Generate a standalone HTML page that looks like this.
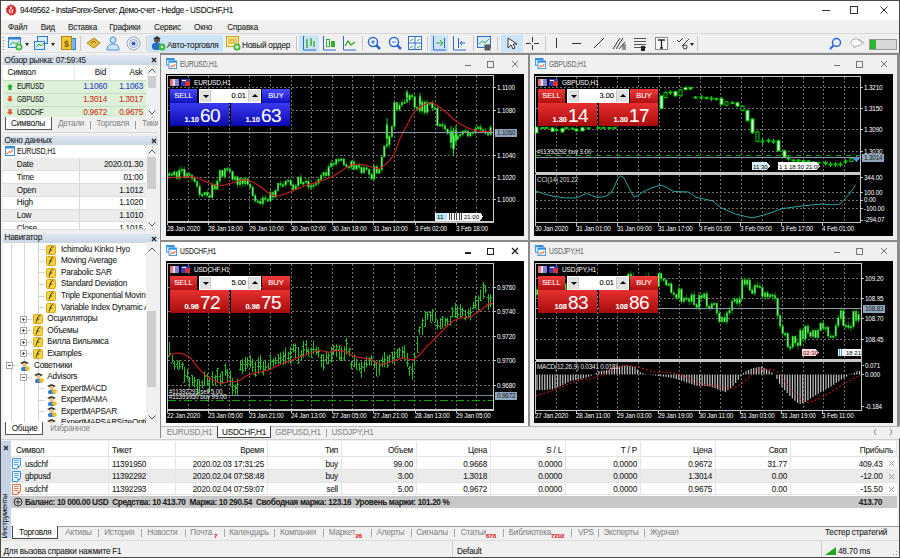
<!DOCTYPE html><html><head><meta charset="utf-8"><style>
*{margin:0;padding:0;box-sizing:border-box}
html,body{width:900px;height:558px;overflow:hidden;background:#f0f0f0;font-family:"Liberation Sans",sans-serif;font-size:11px;color:#000}
svg text{font-family:"Liberation Sans",sans-serif}
div{-webkit-text-stroke:0.08px currentColor}
</style></head><body><div style="position:absolute;left:0px;top:0px;width:900px;height:20px;background:#fff;"></div><div style="position:absolute;left:0px;top:0px;width:900px;height:1px;background:#4a4a4a;"></div><div style="position:absolute;left:0px;top:0px;width:1px;height:558px;background:#4a4a4a;"></div><div style="position:absolute;left:899px;top:0px;width:1px;height:558px;background:#4a4a4a;"></div><div style="position:absolute;left:0px;top:557px;width:900px;height:1px;background:#4a4a4a;"></div><svg style="position:absolute;left:5px;top:4px" width="12" height="12" viewBox="0 0 12 12"><path d="M6 0.3L7.3 1.6L9 1.2L9.4 2.9L11 3.6L10.5 5.3L11.7 6.6L10.5 7.8L10.8 9.5L9.1 9.9L8.3 11.4L6.6 10.8L5.1 11.7L4.2 10.2L2.5 10.1L2.4 8.4L0.9 7.5L1.6 5.9L0.8 4.4L2.3 3.5L2.5 1.8L4.2 1.8Z" fill="#e02020"/><circle cx="6" cy="3.8" r="1.2" fill="#fff"/><path d="M3.5 5.5H8.5L7.5 9.5H4.5Z" fill="#fff"/><rect x="5.4" y="5.5" width="1.2" height="4.5" fill="#e02020"/></svg><div style="position:absolute;left:20px;top:5.5px;white-space:nowrap;font-size:8.2px;line-height:10px;letter-spacing:-0.35px;color:#111;">9449562 - InstaForex-Server: Демо-счет - Hedge - USDCHF,H1</div><div style="position:absolute;left:822px;top:10px;width:8px;height:1px;background:#333;"></div><div style="position:absolute;left:850px;top:6px;width:8px;height:8px;border:1px solid #333;"></div><svg style="position:absolute;left:880px;top:6px" width="8" height="8"><path d="M0.5 0.5L7.5 7.5M7.5 0.5L0.5 7.5" stroke="#222" stroke-width="1"/></svg><div style="position:absolute;left:1px;top:20px;width:898px;height:13px;background:#f0f0f0;"></div><div style="position:absolute;left:8px;top:23px;white-space:nowrap;font-size:8.2px;line-height:10px;letter-spacing:-0.2px;color:#222;">Файл</div><div style="position:absolute;left:40.7px;top:23px;white-space:nowrap;font-size:8.2px;line-height:10px;letter-spacing:-0.2px;color:#222;">Вид</div><div style="position:absolute;left:68px;top:23px;white-space:nowrap;font-size:8.2px;line-height:10px;letter-spacing:-0.2px;color:#222;">Вставка</div><div style="position:absolute;left:109.3px;top:23px;white-space:nowrap;font-size:8.2px;line-height:10px;letter-spacing:-0.2px;color:#222;">Графики</div><div style="position:absolute;left:154px;top:23px;white-space:nowrap;font-size:8.2px;line-height:10px;letter-spacing:-0.2px;color:#222;">Сервис</div><div style="position:absolute;left:194px;top:23px;white-space:nowrap;font-size:8.2px;line-height:10px;letter-spacing:-0.2px;color:#222;">Окно</div><div style="position:absolute;left:227.3px;top:23px;white-space:nowrap;font-size:8.2px;line-height:10px;letter-spacing:-0.2px;color:#222;">Справка</div><div style="position:absolute;left:1px;top:33px;width:898px;height:1px;background:#d8d8d8;"></div><div style="position:absolute;left:1px;top:34px;width:898px;height:18px;background:#f0f0f0;"></div><div style="position:absolute;left:1px;top:52px;width:898px;height:1px;background:#e0e0e0;"></div><div style="position:absolute;left:3px;top:37px;width:1px;height:1px;background:#999;"></div><div style="position:absolute;left:3px;top:40px;width:1px;height:1px;background:#999;"></div><div style="position:absolute;left:3px;top:43px;width:1px;height:1px;background:#999;"></div><div style="position:absolute;left:3px;top:46px;width:1px;height:1px;background:#999;"></div><div style="position:absolute;left:3px;top:49px;width:1px;height:1px;background:#999;"></div><svg style="position:absolute;left:8px;top:36px" width="15" height="15" viewBox="0 0 15 15"><rect x="0.5" y="1.5" width="12" height="10" fill="#d8ecff" stroke="#2e80d0"/><rect x="0.5" y="1.5" width="12" height="2" fill="#2e80d0"/><path d="M2 9L5 6L8 8L11 5" stroke="#3a3" fill="none"/><circle cx="11" cy="11" r="3.5" fill="#3cb83c"/><path d="M9 11H13M11 9V13" stroke="#fff"/></svg><div style="position:absolute;left:25px;top:43px;width:0;height:0;border-left:2.5px solid transparent;border-right:2.5px solid transparent;border-top:3px solid #222"></div><svg style="position:absolute;left:34px;top:36px" width="15" height="15" viewBox="0 0 15 15"><rect x="3.5" y="0.5" width="10" height="7" fill="#d8ecff" stroke="#2e80d0"/><rect x="0.5" y="5.5" width="10" height="8" fill="#d8ecff" stroke="#2e80d0"/><path d="M2 11L5 8L7 10L10 7" stroke="#3a3" fill="none"/></svg><div style="position:absolute;left:51px;top:43px;width:0;height:0;border-left:2.5px solid transparent;border-right:2.5px solid transparent;border-top:3px solid #222"></div><svg style="position:absolute;left:61px;top:36px" width="15" height="15" viewBox="0 0 15 15"><rect x="5.5" y="2.5" width="9" height="11" fill="#7ab8f0" stroke="#2e80d0"/><rect x="0.5" y="0.5" width="10" height="13" fill="#f2c53a" stroke="#b08a10"/><text x="3" y="11" font-size="9" font-weight="bold" fill="#7a5a00">$</text></svg><div style="position:absolute;left:80px;top:36px;width:1px;height:15px;background:#c8c8c8;"></div><svg style="position:absolute;left:86px;top:36px" width="15" height="15" viewBox="0 0 15 15"><path d="M1 7L8 2L14 7L8 12Z" fill="#e8c040" stroke="#a88010"/><path d="M5 7L8 5L10 7" stroke="#7a5a00" fill="none"/></svg><svg style="position:absolute;left:106px;top:36px" width="15" height="15" viewBox="0 0 15 15"><circle cx="7" cy="4" r="3" fill="#cfe6ff" stroke="#4a90e0"/><path d="M1 14C1 9 4 8 7 8C10 8 13 9 13 14Z" fill="#cfe6ff" stroke="#4a90e0"/></svg><svg style="position:absolute;left:126px;top:36px" width="15" height="15" viewBox="0 0 15 15"><circle cx="7.5" cy="7.5" r="6.5" fill="none" stroke="#90a8d0"/><circle cx="7.5" cy="7.5" r="4" fill="none" stroke="#90a8d0"/><circle cx="7.5" cy="7.5" r="2" fill="#3060c0"/></svg><div style="position:absolute;left:146px;top:36px;width:1px;height:15px;background:#c8c8c8;"></div><div style="position:absolute;left:148px;top:35px;width:75px;height:17px;background:#cce4f7;"></div><svg style="position:absolute;left:151px;top:36px" width="15" height="15" viewBox="0 0 15 15"><circle cx="6" cy="4" r="3" fill="#555"/><path d="M2 3L6 0L10 3Z" fill="#333"/><rect x="1" y="7" width="9" height="7" rx="3" fill="#2a6ad0"/><circle cx="11" cy="11" r="3.5" fill="#3cb83c"/><path d="M10 9.5L12.5 11L10 12.5Z" fill="#fff"/></svg><div style="position:absolute;left:167px;top:40.5px;white-space:nowrap;font-size:8.2px;line-height:10px;letter-spacing:-0.2px;color:#222;">Авто-торговля</div><svg style="position:absolute;left:226px;top:36px" width="15" height="15" viewBox="0 0 15 15"><rect x="0.5" y="0.5" width="12" height="10" fill="#fff3a8" stroke="#c8a020"/><path d="M2 3H11M2 5H11M2 7H11" stroke="#c8a020"/><circle cx="11" cy="11" r="3.5" fill="#3cb83c"/><path d="M9 11H13M11 9V13" stroke="#fff"/></svg><div style="position:absolute;left:242px;top:40.5px;white-space:nowrap;font-size:8.2px;line-height:10px;letter-spacing:-0.2px;color:#222;">Новый ордер</div><div style="position:absolute;left:296px;top:36px;width:1px;height:15px;background:#c8c8c8;"></div><div style="position:absolute;left:299px;top:35px;width:20px;height:17px;background:#cce4f7;"></div><svg style="position:absolute;left:302px;top:36px" width="15" height="15" viewBox="0 0 15 15"><path d="M1.5 0V14H14" stroke="#2a6ad0" fill="none"/><path d="M5 3V12M4 5H5M5 9H6M9 2V10M8 4H9M9 7H10M12 5V11" stroke="#3a3" fill="none" stroke-width="1.3"/></svg><svg style="position:absolute;left:322px;top:36px" width="15" height="15" viewBox="0 0 15 15"><path d="M1.5 0V14H14" stroke="#2a6ad0" fill="none"/><rect x="4.5" y="3.5" width="3" height="7" fill="#fff" stroke="#3a3"/><rect x="9.5" y="5.5" width="3" height="5" fill="#3a3" stroke="#3a3"/></svg><svg style="position:absolute;left:342px;top:36px" width="15" height="15" viewBox="0 0 15 15"><path d="M1.5 0V14H14" stroke="#2a6ad0" fill="none"/><path d="M3 10L6 5L9 9L13 6" stroke="#3a3" fill="none" stroke-width="1.3"/></svg><div style="position:absolute;left:362px;top:36px;width:1px;height:15px;background:#c8c8c8;"></div><svg style="position:absolute;left:367px;top:36px" width="15" height="15" viewBox="0 0 15 15"><circle cx="6" cy="6" r="4.5" fill="#fff" stroke="#2a6ad0" stroke-width="1.5"/><path d="M9 9L13 13" stroke="#2a6ad0" stroke-width="2.5"/><path d="M4 6H8M6 4V8" stroke="#2a6ad0"/></svg><svg style="position:absolute;left:388px;top:36px" width="15" height="15" viewBox="0 0 15 15"><circle cx="6" cy="6" r="4.5" fill="#fff" stroke="#2a6ad0" stroke-width="1.5"/><path d="M9 9L13 13" stroke="#2a6ad0" stroke-width="2.5"/><path d="M4 6H8" stroke="#2a6ad0"/></svg><svg style="position:absolute;left:408px;top:36px" width="15" height="15" viewBox="0 0 15 15"><rect x="0.5" y="0.5" width="13" height="13" fill="#fff" stroke="#2a6ad0"/><path d="M7 0V14M0 7H14" stroke="#2a6ad0"/><path d="M2 5L5 3M9 5L12 3M2 12L5 10M9 12L12 10" stroke="#3a3"/></svg><div style="position:absolute;left:427px;top:36px;width:1px;height:15px;background:#c8c8c8;"></div><div style="position:absolute;left:430px;top:35px;width:18px;height:17px;background:#cce4f7;"></div><svg style="position:absolute;left:432px;top:36px" width="15" height="15" viewBox="0 0 15 15"><path d="M1.5 0V14H14M12.5 2V12" stroke="#2a6ad0" fill="none"/><path d="M4 7H11M8 4L11 7L8 10" stroke="#3a3" fill="none"/></svg><svg style="position:absolute;left:452px;top:36px" width="15" height="15" viewBox="0 0 15 15"><path d="M1.5 0V14H14" stroke="#2a6ad0" fill="none"/><path d="M6.5 2V12" stroke="#2a6ad0"/><path d="M8 7H13M10 5L8 7L10 9" stroke="#2a6ad0" fill="none"/></svg><div style="position:absolute;left:473px;top:36px;width:1px;height:15px;background:#c8c8c8;"></div><svg style="position:absolute;left:477px;top:36px" width="15" height="15" viewBox="0 0 15 15"><rect x="0.5" y="0.5" width="13" height="11" fill="#d8ecff" stroke="#2a6ad0"/><path d="M2 8L5 5L8 7L12 3" stroke="#3a3" fill="none"/><rect x="7.5" y="8.5" width="6" height="6" fill="#555"/></svg><div style="position:absolute;left:497px;top:36px;width:1px;height:15px;background:#c8c8c8;"></div><div style="position:absolute;left:501px;top:35px;width:22px;height:17px;background:#cce4f7;"></div><svg style="position:absolute;left:507px;top:37px" width="12" height="13" viewBox="0 0 12 13"><path d="M1 1L1 11L4 8L6 12L8 11L6 7L10 7Z" fill="#fff" stroke="#333"/></svg><svg style="position:absolute;left:526px;top:37px" width="13" height="13" viewBox="0 0 13 13"><path d="M6.5 0V5M6.5 8V13M0 6.5H5M8 6.5H13" stroke="#333"/></svg><div style="position:absolute;left:545px;top:36px;width:1px;height:15px;background:#c8c8c8;"></div><div style="position:absolute;left:556px;top:38px;width:1px;height:10px;background:#333;"></div><div style="position:absolute;left:572px;top:43px;width:9px;height:1px;background:#333;"></div><svg style="position:absolute;left:594px;top:38px" width="11" height="11" viewBox="0 0 11 11"><path d="M0 10L10 0" stroke="#333"/></svg><svg style="position:absolute;left:612px;top:36px" width="15" height="15" viewBox="0 0 15 15"><path d="M1 13L8 2M4 13L11 2M7 13L13 6" stroke="#333"/><path d="M10 9H14M10 11H14M10 13H14" stroke="#333"/></svg><svg style="position:absolute;left:634px;top:37px" width="14" height="14" viewBox="0 0 14 14"><path d="M0 1.5H12M0 4.5H12M0 7.5H12M0 10.5H12" stroke="#555"/><rect x="7" y="9" width="4" height="5" fill="#222"/></svg><svg style="position:absolute;left:655px;top:37px" width="13" height="13" viewBox="0 0 13 13"><rect x="0.5" y="0.5" width="12" height="12" fill="#fff" stroke="#888"/><path d="M3 3H10M6.5 3V11M5 11H8" stroke="#222" stroke-width="1.3"/></svg><svg style="position:absolute;left:676px;top:37px" width="14" height="13" viewBox="0 0 14 13"><path d="M1 3L3 5L7 1M6 9L13 2" stroke="#333" fill="none"/><circle cx="9" cy="10" r="2" fill="none" stroke="#333"/></svg><div style="position:absolute;left:690px;top:43px;width:0;height:0;border-left:2.5px solid transparent;border-right:2.5px solid transparent;border-top:3px solid #222"></div><div style="position:absolute;left:697px;top:36px;width:1px;height:15px;background:#c8c8c8;"></div><svg style="position:absolute;left:829px;top:37px" width="13" height="13" viewBox="0 0 13 13"><circle cx="7.5" cy="5.5" r="4" fill="none" stroke="#2a6ad0" stroke-width="1.5"/><path d="M5 8L1 12" stroke="#2a6ad0" stroke-width="2"/></svg><svg style="position:absolute;left:850px;top:37px" width="15" height="13" viewBox="0 0 15 13"><path d="M5 2C9 2 12 3 12 6C12 8 9 9 6 9L4 11V9C2 8 1 7 1 6C1 4 2 2 5 2Z" fill="#fff" stroke="#aaa"/><path d="M8 4C12 4 14 5 14 7" fill="none" stroke="#aaa"/></svg><div style="position:absolute;left:869px;top:39px;width:28px;height:11px;background:#d8d8d8;border:1px solid #9a9a9a;"></div><div style="position:absolute;left:870px;top:40px;width:6px;height:9px;background:#2ab82a;"></div><div style="position:absolute;left:1px;top:53px;width:159px;height:386px;background:#f0f0f0;"></div><div style="position:absolute;left:3px;top:55px;width:155px;height:10px;background:linear-gradient(#dfe8f1,#c8d6e4);"></div><div style="position:absolute;left:4.5px;top:55.5px;white-space:nowrap;font-size:8.2px;line-height:10px;letter-spacing:-0.2px;color:#222;">Обзор рынка: 07:59:45</div><svg style="position:absolute;left:151px;top:57px" width="6" height="6"><path d="M1 1L5 5M5 1L1 5" stroke="#222" stroke-width="1.1"/></svg><div style="position:absolute;left:3px;top:65px;width:155px;height:52px;background:#fff;"></div><div style="position:absolute;left:7.5px;top:68.4px;white-space:nowrap;font-size:8.2px;line-height:10px;letter-spacing:-0.2px;color:#222;">Символ</div><div style="position:absolute;left:-194px;width:300px;top:68.4px;white-space:nowrap;text-align:right;font-size:8.2px;line-height:10px;letter-spacing:-0.2px;color:#222;">Bid</div><div style="position:absolute;left:-157.5px;width:300px;top:68.4px;white-space:nowrap;text-align:right;font-size:8.2px;line-height:10px;letter-spacing:-0.2px;color:#222;">Ask</div><div style="position:absolute;left:74px;top:65px;width:1px;height:52px;background:#ececec;"></div><div style="position:absolute;left:109px;top:65px;width:1px;height:52px;background:#ececec;"></div><div style="position:absolute;left:3px;top:80.0px;width:143px;height:12.85px;background:#dcf1d8;border-top:1px solid #c8dcc4;"></div><svg style="position:absolute;left:7px;top:83.5px" width="6" height="6"><path d="M3 0L6 3H4.5V6H1.5V3H0Z" fill="#18a818"/></svg><div style="position:absolute;left:17.2px;top:81.9px;white-space:nowrap;font-size:8.2px;line-height:10px;letter-spacing:-0.2px;color:#222;transform:scaleX(0.8);transform-origin:left top;">EURUSD</div><div style="position:absolute;left:-193px;width:300px;top:81.9px;white-space:nowrap;text-align:right;font-size:8.2px;line-height:10px;letter-spacing:-0.2px;color:#2a3ad0;">1.1060</div><div style="position:absolute;left:-157px;width:300px;top:81.9px;white-space:nowrap;text-align:right;font-size:8.2px;line-height:10px;letter-spacing:-0.2px;color:#2a3ad0;">1.1063</div><div style="position:absolute;left:3px;top:92.85px;width:143px;height:12.85px;background:#dcf1d8;border-top:1px solid #c8dcc4;"></div><svg style="position:absolute;left:7px;top:96.35px" width="6" height="6"><path d="M3 6L6 3H4.5V0H1.5V3H0Z" fill="#e05a30"/></svg><div style="position:absolute;left:17.2px;top:94.75px;white-space:nowrap;font-size:8.2px;line-height:10px;letter-spacing:-0.2px;color:#222;transform:scaleX(0.8);transform-origin:left top;">GBPUSD</div><div style="position:absolute;left:-193px;width:300px;top:94.75px;white-space:nowrap;text-align:right;font-size:8.2px;line-height:10px;letter-spacing:-0.2px;color:#d03020;">1.3014</div><div style="position:absolute;left:-157px;width:300px;top:94.75px;white-space:nowrap;text-align:right;font-size:8.2px;line-height:10px;letter-spacing:-0.2px;color:#d03020;">1.3017</div><div style="position:absolute;left:3px;top:105.7px;width:143px;height:12.85px;background:#dcf1d8;border-top:1px solid #c8dcc4;"></div><svg style="position:absolute;left:7px;top:109.2px" width="6" height="6"><path d="M3 6L6 3H4.5V0H1.5V3H0Z" fill="#e05a30"/></svg><div style="position:absolute;left:17.2px;top:107.60000000000001px;white-space:nowrap;font-size:8.2px;line-height:10px;letter-spacing:-0.2px;color:#222;transform:scaleX(0.8);transform-origin:left top;">USDCHF</div><div style="position:absolute;left:-193px;width:300px;top:107.60000000000001px;white-space:nowrap;text-align:right;font-size:8.2px;line-height:10px;letter-spacing:-0.2px;color:#d03020;">0.9672</div><div style="position:absolute;left:-157px;width:300px;top:107.60000000000001px;white-space:nowrap;text-align:right;font-size:8.2px;line-height:10px;letter-spacing:-0.2px;color:#d03020;">0.9675</div><div style="position:absolute;left:146px;top:65px;width:12px;height:52px;background:#f0f0f0;"></div><svg style="position:absolute;left:148px;top:68px" width="8" height="5"><path d="M0.5 4.5L4 1L7.5 4.5" fill="none" stroke="#555"/></svg><div style="position:absolute;left:148px;top:76px;width:8px;height:12px;background:#cdcdcd;"></div><svg style="position:absolute;left:148px;top:110px" width="8" height="5"><path d="M0.5 0.5L4 4L7.5 0.5" fill="none" stroke="#555"/></svg><div style="position:absolute;left:3px;top:117px;width:155px;height:14px;background:#f0f0f0;"></div><div style="position:absolute;left:5px;top:116.5px;width:47px;height:13.5px;background:#fff;border:1px solid #555;border-top:none;"></div><div style="position:absolute;left:11px;top:118.9px;white-space:nowrap;font-size:8.2px;line-height:10px;letter-spacing:-0.2px;color:#222;">Символы</div><div style="position:absolute;left:58px;top:118.9px;white-space:nowrap;font-size:8.2px;line-height:10px;letter-spacing:-0.2px;color:#8a8a8a;">Детали</div><div style="position:absolute;left:90px;top:121px;width:1px;height:8px;background:#9a9a9a;"></div><div style="position:absolute;left:96.6px;top:118.9px;white-space:nowrap;font-size:8.2px;line-height:10px;letter-spacing:-0.2px;color:#8a8a8a;">Торговля</div><div style="position:absolute;left:135px;top:121px;width:1px;height:8px;background:#9a9a9a;"></div><div style="position:absolute;left:142px;top:118.9px;white-space:nowrap;font-size:8.2px;line-height:10px;letter-spacing:-0.2px;color:#8a8a8a;width:16px;overflow:hidden;">Тики</div><div style="position:absolute;left:3px;top:132px;width:155px;height:1px;background:#d8d8d8;"></div><div style="position:absolute;left:3px;top:136px;width:155px;height:9px;background:linear-gradient(#dfe8f1,#c8d6e4);"></div><div style="position:absolute;left:4.5px;top:135.5px;white-space:nowrap;font-size:8.2px;line-height:10px;letter-spacing:-0.2px;color:#222;">Окно данных</div><svg style="position:absolute;left:151px;top:138px" width="6" height="6"><path d="M1 1L5 5M5 1L1 5" stroke="#222" stroke-width="1.1"/></svg><div style="position:absolute;left:3px;top:145px;width:155px;height:85px;background:#fff;"></div><svg style="position:absolute;left:5px;top:146px" width="10" height="10"><rect x="0.5" y="0.5" width="9" height="9" fill="#fff" stroke="#3a8ee0"/><rect x="0.5" y="0.5" width="9" height="2" fill="#3a8ee0"/><path d="M2 8L4 5.5L6 6.5L8 3.5" stroke="#e05030" fill="none"/></svg><div style="position:absolute;left:16.9px;top:147.3px;white-space:nowrap;font-size:8.2px;line-height:10px;letter-spacing:-0.2px;color:#222;transform:scaleX(0.85);transform-origin:left top;">EURUSD,H1</div><div style="position:absolute;left:3px;top:158.0px;width:143px;height:12.9px;background:#ececec;overflow:hidden;border-bottom:1px solid #dcdcdc;"><div style="position:absolute;left:13.8px;top:1.8px;white-space:nowrap;font-size:8.2px;line-height:10px;letter-spacing:-0.2px;color:#222;">Date</div><div style="position:absolute;right:3px;top:1.8px;white-space:nowrap;font-size:8.2px;line-height:10px;letter-spacing:-0.2px;color:#222;">2020.01.30</div></div><div style="position:absolute;left:3px;top:170.9px;width:143px;height:12.9px;background:#fff;overflow:hidden;border-bottom:1px solid #dcdcdc;"><div style="position:absolute;left:13.8px;top:1.8px;white-space:nowrap;font-size:8.2px;line-height:10px;letter-spacing:-0.2px;color:#222;">Time</div><div style="position:absolute;right:3px;top:1.8px;white-space:nowrap;font-size:8.2px;line-height:10px;letter-spacing:-0.2px;color:#222;">01:00</div></div><div style="position:absolute;left:3px;top:183.8px;width:143px;height:12.9px;background:#ececec;overflow:hidden;border-bottom:1px solid #dcdcdc;"><div style="position:absolute;left:13.8px;top:1.8px;white-space:nowrap;font-size:8.2px;line-height:10px;letter-spacing:-0.2px;color:#222;">Open</div><div style="position:absolute;right:3px;top:1.8px;white-space:nowrap;font-size:8.2px;line-height:10px;letter-spacing:-0.2px;color:#222;">1.1012</div></div><div style="position:absolute;left:3px;top:196.7px;width:143px;height:12.9px;background:#fff;overflow:hidden;border-bottom:1px solid #dcdcdc;"><div style="position:absolute;left:13.8px;top:1.8px;white-space:nowrap;font-size:8.2px;line-height:10px;letter-spacing:-0.2px;color:#222;">High</div><div style="position:absolute;right:3px;top:1.8px;white-space:nowrap;font-size:8.2px;line-height:10px;letter-spacing:-0.2px;color:#222;">1.1020</div></div><div style="position:absolute;left:3px;top:209.6px;width:143px;height:12.9px;background:#ececec;overflow:hidden;border-bottom:1px solid #dcdcdc;"><div style="position:absolute;left:13.8px;top:1.8px;white-space:nowrap;font-size:8.2px;line-height:10px;letter-spacing:-0.2px;color:#222;">Low</div><div style="position:absolute;right:3px;top:1.8px;white-space:nowrap;font-size:8.2px;line-height:10px;letter-spacing:-0.2px;color:#222;">1.1010</div></div><div style="position:absolute;left:3px;top:222.5px;width:143px;height:7.0px;background:#fff;overflow:hidden;border-bottom:1px solid #dcdcdc;"><div style="position:absolute;left:13.8px;top:1.8px;white-space:nowrap;font-size:8.2px;line-height:10px;letter-spacing:-0.2px;color:#222;">Close</div><div style="position:absolute;right:3px;top:1.8px;white-space:nowrap;font-size:8.2px;line-height:10px;letter-spacing:-0.2px;color:#222;">1.1015</div></div><div style="position:absolute;left:79px;top:158px;width:1px;height:71.5px;background:#d8d8d8;"></div><div style="position:absolute;left:146px;top:145px;width:12px;height:85px;background:#f0f0f0;"></div><svg style="position:absolute;left:148px;top:149px" width="8" height="5"><path d="M0.5 4.5L4 1L7.5 4.5" fill="none" stroke="#555"/></svg><div style="position:absolute;left:147px;top:157px;width:9px;height:32px;background:#cdcdcd;"></div><svg style="position:absolute;left:148px;top:222px" width="8" height="5"><path d="M0.5 0.5L4 4L7.5 0.5" fill="none" stroke="#555"/></svg><div style="position:absolute;left:3px;top:229.5px;width:155px;height:4.5px;background:#f0f0f0;"></div><div style="position:absolute;left:3px;top:234px;width:155px;height:8.5px;background:linear-gradient(#dfe8f1,#c8d6e4);"></div><div style="position:absolute;left:4.5px;top:232.9px;white-space:nowrap;font-size:8.2px;line-height:10px;letter-spacing:-0.2px;color:#222;">Навигатор</div><svg style="position:absolute;left:151px;top:236px" width="6" height="6"><path d="M1 1L5 5M5 1L1 5" stroke="#222" stroke-width="1.1"/></svg><div style="position:absolute;left:3px;top:242.5px;width:155px;height:179.5px;background:#fff;"></div><div style="position:absolute;left:11px;top:242px;width:1px;height:181px;background:#d4d4d4;"></div><div style="position:absolute;left:24px;top:242px;width:1px;height:181px;background:#d4d4d4;"></div><div style="position:absolute;left:38px;top:242px;width:1px;height:181px;background:#d4d4d4;"></div><div style="position:absolute;left:39px;top:249px;width:6px;height:1px;background:#d4d4d4;"></div><svg style="position:absolute;left:46px;top:244.7px" width="10" height="10"><rect x="0.5" y="0.5" width="9" height="9" rx="1" fill="#f9d43a" stroke="#d8a818"/><path d="M3 8.5L5 3C5.5 1.5 6.5 1.5 7.5 2" fill="none" stroke="#333" stroke-width="1"/><path d="M3.5 5H6.5" stroke="#333" stroke-width="0.8"/></svg><div style="position:absolute;left:61px;top:244.7px;white-space:nowrap;font-size:8.2px;line-height:10px;letter-spacing:-0.2px;color:#222;width:85px;overflow:hidden;">Ichimoku Kinko Hyo</div><div style="position:absolute;left:39px;top:261px;width:6px;height:1px;background:#d4d4d4;"></div><svg style="position:absolute;left:46px;top:256.28px" width="10" height="10"><rect x="0.5" y="0.5" width="9" height="9" rx="1" fill="#f9d43a" stroke="#d8a818"/><path d="M3 8.5L5 3C5.5 1.5 6.5 1.5 7.5 2" fill="none" stroke="#333" stroke-width="1"/><path d="M3.5 5H6.5" stroke="#333" stroke-width="0.8"/></svg><div style="position:absolute;left:61px;top:256.28px;white-space:nowrap;font-size:8.2px;line-height:10px;letter-spacing:-0.2px;color:#222;width:85px;overflow:hidden;">Moving Average</div><div style="position:absolute;left:39px;top:272px;width:6px;height:1px;background:#d4d4d4;"></div><svg style="position:absolute;left:46px;top:267.86px" width="10" height="10"><rect x="0.5" y="0.5" width="9" height="9" rx="1" fill="#f9d43a" stroke="#d8a818"/><path d="M3 8.5L5 3C5.5 1.5 6.5 1.5 7.5 2" fill="none" stroke="#333" stroke-width="1"/><path d="M3.5 5H6.5" stroke="#333" stroke-width="0.8"/></svg><div style="position:absolute;left:61px;top:267.86px;white-space:nowrap;font-size:8.2px;line-height:10px;letter-spacing:-0.2px;color:#222;width:85px;overflow:hidden;">Parabolic SAR</div><div style="position:absolute;left:39px;top:284px;width:6px;height:1px;background:#d4d4d4;"></div><svg style="position:absolute;left:46px;top:279.44px" width="10" height="10"><rect x="0.5" y="0.5" width="9" height="9" rx="1" fill="#f9d43a" stroke="#d8a818"/><path d="M3 8.5L5 3C5.5 1.5 6.5 1.5 7.5 2" fill="none" stroke="#333" stroke-width="1"/><path d="M3.5 5H6.5" stroke="#333" stroke-width="0.8"/></svg><div style="position:absolute;left:61px;top:279.44px;white-space:nowrap;font-size:8.2px;line-height:10px;letter-spacing:-0.2px;color:#222;width:85px;overflow:hidden;">Standard Deviation</div><div style="position:absolute;left:39px;top:296px;width:6px;height:1px;background:#d4d4d4;"></div><svg style="position:absolute;left:46px;top:291.02px" width="10" height="10"><rect x="0.5" y="0.5" width="9" height="9" rx="1" fill="#f9d43a" stroke="#d8a818"/><path d="M3 8.5L5 3C5.5 1.5 6.5 1.5 7.5 2" fill="none" stroke="#333" stroke-width="1"/><path d="M3.5 5H6.5" stroke="#333" stroke-width="0.8"/></svg><div style="position:absolute;left:61px;top:291.02px;white-space:nowrap;font-size:8.2px;line-height:10px;letter-spacing:-0.2px;color:#222;width:85px;overflow:hidden;">Triple Exponential Movin</div><div style="position:absolute;left:39px;top:307px;width:6px;height:1px;background:#d4d4d4;"></div><svg style="position:absolute;left:46px;top:302.59999999999997px" width="10" height="10"><rect x="0.5" y="0.5" width="9" height="9" rx="1" fill="#f9d43a" stroke="#d8a818"/><path d="M3 8.5L5 3C5.5 1.5 6.5 1.5 7.5 2" fill="none" stroke="#333" stroke-width="1"/><path d="M3.5 5H6.5" stroke="#333" stroke-width="0.8"/></svg><div style="position:absolute;left:61px;top:302.59999999999997px;white-space:nowrap;font-size:8.2px;line-height:10px;letter-spacing:-0.2px;color:#222;width:85px;overflow:hidden;">Variable Index Dynamic A</div><div style="position:absolute;left:26px;top:319px;width:6px;height:1px;background:#d4d4d4;"></div><div style="position:absolute;left:20px;top:315.68px;width:7px;height:7px;background:#fff;border:1px solid #a8a8a8;"><div style="position:absolute;left:1px;top:2px;width:3px;height:1px;background:#555"></div><div style="position:absolute;left:2px;top:1px;width:1px;height:3px;background:#555"></div></div><svg style="position:absolute;left:33px;top:314.18px" width="10" height="10"><rect x="0.5" y="0.5" width="9" height="9" rx="1" fill="#f9d43a" stroke="#d8a818"/><path d="M3 8.5L5 3C5.5 1.5 6.5 1.5 7.5 2" fill="none" stroke="#333" stroke-width="1"/><path d="M3.5 5H6.5" stroke="#333" stroke-width="0.8"/></svg><div style="position:absolute;left:47.3px;top:314.18px;white-space:nowrap;font-size:8.2px;line-height:10px;letter-spacing:-0.2px;color:#222;width:98px;overflow:hidden;">Осцилляторы</div><div style="position:absolute;left:26px;top:330px;width:6px;height:1px;background:#d4d4d4;"></div><div style="position:absolute;left:20px;top:327.26px;width:7px;height:7px;background:#fff;border:1px solid #a8a8a8;"><div style="position:absolute;left:1px;top:2px;width:3px;height:1px;background:#555"></div><div style="position:absolute;left:2px;top:1px;width:1px;height:3px;background:#555"></div></div><svg style="position:absolute;left:33px;top:325.76px" width="10" height="10"><rect x="0.5" y="0.5" width="9" height="9" rx="1" fill="#f9d43a" stroke="#d8a818"/><path d="M3 8.5L5 3C5.5 1.5 6.5 1.5 7.5 2" fill="none" stroke="#333" stroke-width="1"/><path d="M3.5 5H6.5" stroke="#333" stroke-width="0.8"/></svg><div style="position:absolute;left:47.3px;top:325.76px;white-space:nowrap;font-size:8.2px;line-height:10px;letter-spacing:-0.2px;color:#222;width:98px;overflow:hidden;">Объемы</div><div style="position:absolute;left:26px;top:342px;width:6px;height:1px;background:#d4d4d4;"></div><div style="position:absolute;left:20px;top:338.84px;width:7px;height:7px;background:#fff;border:1px solid #a8a8a8;"><div style="position:absolute;left:1px;top:2px;width:3px;height:1px;background:#555"></div><div style="position:absolute;left:2px;top:1px;width:1px;height:3px;background:#555"></div></div><svg style="position:absolute;left:33px;top:337.34px" width="10" height="10"><rect x="0.5" y="0.5" width="9" height="9" rx="1" fill="#f9d43a" stroke="#d8a818"/><path d="M3 8.5L5 3C5.5 1.5 6.5 1.5 7.5 2" fill="none" stroke="#333" stroke-width="1"/><path d="M3.5 5H6.5" stroke="#333" stroke-width="0.8"/></svg><div style="position:absolute;left:47.3px;top:337.34px;white-space:nowrap;font-size:8.2px;line-height:10px;letter-spacing:-0.2px;color:#222;width:98px;overflow:hidden;">Билла Вильямса</div><div style="position:absolute;left:26px;top:353px;width:6px;height:1px;background:#d4d4d4;"></div><div style="position:absolute;left:20px;top:350.41999999999996px;width:7px;height:7px;background:#fff;border:1px solid #a8a8a8;"><div style="position:absolute;left:1px;top:2px;width:3px;height:1px;background:#555"></div><div style="position:absolute;left:2px;top:1px;width:1px;height:3px;background:#555"></div></div><svg style="position:absolute;left:33px;top:348.91999999999996px" width="10" height="10"><rect x="0.5" y="0.5" width="9" height="9" rx="1" fill="#f9d43a" stroke="#d8a818"/><path d="M3 8.5L5 3C5.5 1.5 6.5 1.5 7.5 2" fill="none" stroke="#333" stroke-width="1"/><path d="M3.5 5H6.5" stroke="#333" stroke-width="0.8"/></svg><div style="position:absolute;left:47.3px;top:348.91999999999996px;white-space:nowrap;font-size:8.2px;line-height:10px;letter-spacing:-0.2px;color:#222;width:98px;overflow:hidden;">Examples</div><div style="position:absolute;left:12px;top:365px;width:6px;height:1px;background:#d4d4d4;"></div><div style="position:absolute;left:6px;top:362.0px;width:7px;height:7px;background:#fff;border:1px solid #a8a8a8;"><div style="position:absolute;left:1px;top:2px;width:3px;height:1px;background:#555"></div></div><svg style="position:absolute;left:19px;top:360.0px" width="11" height="11"><path d="M1 3L5.5 1L10 3L5.5 5Z" fill="#333"/><circle cx="5.5" cy="5" r="2.2" fill="#e8c080"/><rect x="2" y="7" width="7" height="4" rx="1.5" fill="#3a7fd0"/><circle cx="8.5" cy="8.5" r="2.3" fill="#f0c020"/></svg><div style="position:absolute;left:34px;top:360.5px;white-space:nowrap;font-size:8.2px;line-height:10px;letter-spacing:-0.2px;color:#222;width:112px;overflow:hidden;">Советники</div><div style="position:absolute;left:26px;top:377px;width:6px;height:1px;background:#d4d4d4;"></div><div style="position:absolute;left:20px;top:373.58px;width:7px;height:7px;background:#fff;border:1px solid #a8a8a8;"><div style="position:absolute;left:1px;top:2px;width:3px;height:1px;background:#555"></div></div><svg style="position:absolute;left:33px;top:371.58px" width="11" height="11"><path d="M1 3L5.5 1L10 3L5.5 5Z" fill="#333"/><circle cx="5.5" cy="5" r="2.2" fill="#e8c080"/><rect x="2" y="7" width="7" height="4" rx="1.5" fill="#3a7fd0"/><circle cx="8.5" cy="8.5" r="2.3" fill="#f0c020"/></svg><div style="position:absolute;left:47.3px;top:372.08px;white-space:nowrap;font-size:8.2px;line-height:10px;letter-spacing:-0.2px;color:#222;width:98px;overflow:hidden;">Advisors</div><div style="position:absolute;left:39px;top:388px;width:6px;height:1px;background:#d4d4d4;"></div><svg style="position:absolute;left:46px;top:383.15999999999997px" width="11" height="11"><path d="M1 3L5.5 1L10 3L5.5 5Z" fill="#333"/><circle cx="5.5" cy="5" r="2.2" fill="#e8c080"/><rect x="2" y="7" width="7" height="4" rx="1.5" fill="#3a7fd0"/><circle cx="8.5" cy="8.5" r="2.3" fill="#f0c020"/></svg><div style="position:absolute;left:61px;top:383.65999999999997px;white-space:nowrap;font-size:8.2px;line-height:10px;letter-spacing:-0.2px;color:#222;width:85px;overflow:hidden;">ExpertMACD</div><div style="position:absolute;left:39px;top:400px;width:6px;height:1px;background:#d4d4d4;"></div><svg style="position:absolute;left:46px;top:394.74px" width="11" height="11"><path d="M1 3L5.5 1L10 3L5.5 5Z" fill="#333"/><circle cx="5.5" cy="5" r="2.2" fill="#e8c080"/><rect x="2" y="7" width="7" height="4" rx="1.5" fill="#3a7fd0"/><circle cx="8.5" cy="8.5" r="2.3" fill="#f0c020"/></svg><div style="position:absolute;left:61px;top:395.24px;white-space:nowrap;font-size:8.2px;line-height:10px;letter-spacing:-0.2px;color:#222;width:85px;overflow:hidden;">ExpertMAMA</div><div style="position:absolute;left:39px;top:411px;width:6px;height:1px;background:#d4d4d4;"></div><svg style="position:absolute;left:46px;top:406.32px" width="11" height="11"><path d="M1 3L5.5 1L10 3L5.5 5Z" fill="#333"/><circle cx="5.5" cy="5" r="2.2" fill="#e8c080"/><rect x="2" y="7" width="7" height="4" rx="1.5" fill="#3a7fd0"/><circle cx="8.5" cy="8.5" r="2.3" fill="#f0c020"/></svg><div style="position:absolute;left:61px;top:406.82px;white-space:nowrap;font-size:8.2px;line-height:10px;letter-spacing:-0.2px;color:#222;width:85px;overflow:hidden;">ExpertMAPSAR</div><div style="position:absolute;left:39px;top:423px;width:6px;height:1px;background:#d4d4d4;"></div><svg style="position:absolute;left:46px;top:417.9px" width="11" height="11"><path d="M1 3L5.5 1L10 3L5.5 5Z" fill="#333"/><circle cx="5.5" cy="5" r="2.2" fill="#e8c080"/><rect x="2" y="7" width="7" height="4" rx="1.5" fill="#3a7fd0"/><circle cx="8.5" cy="8.5" r="2.3" fill="#f0c020"/></svg><div style="position:absolute;left:61px;top:418.4px;white-space:nowrap;font-size:8.2px;line-height:10px;letter-spacing:-0.2px;color:#222;width:85px;overflow:hidden;">ExpertMAPSARSizeOptim</div><div style="position:absolute;left:146px;top:242px;width:12px;height:181px;background:#f0f0f0;"></div><svg style="position:absolute;left:148px;top:247px" width="8" height="5"><path d="M0.5 4.5L4 1L7.5 4.5" fill="none" stroke="#555"/></svg><div style="position:absolute;left:147px;top:311px;width:9px;height:76px;background:#cdcdcd;"></div><svg style="position:absolute;left:148px;top:415px" width="8" height="5"><path d="M0.5 0.5L4 4L7.5 0.5" fill="none" stroke="#555"/></svg><div style="position:absolute;left:3px;top:423px;width:155px;height:15px;background:#f0f0f0;"></div><div style="position:absolute;left:5px;top:421.5px;width:38px;height:13px;background:#fff;border:1px solid #555;border-top:none;"></div><div style="position:absolute;left:11.7px;top:424.4px;white-space:nowrap;font-size:8.2px;line-height:10px;letter-spacing:-0.2px;color:#222;">Общие</div><div style="position:absolute;left:50.2px;top:424.4px;white-space:nowrap;font-size:8.2px;line-height:10px;letter-spacing:-0.2px;color:#8a8a8a;">Избранное</div><div style="position:absolute;left:160px;top:53px;width:740px;height:386px;background:#8a8a8a;"></div><div style="position:absolute;left:161px;top:55px;width:367px;height:185px;background:#f0f0f0;"></div><svg style="position:absolute;left:166px;top:58px" width="11" height="11" viewBox="0 0 13 13"><rect x="0.5" y="0.5" width="9" height="8" fill="#dceeff" stroke="#2d8fe0"/><rect x="0.5" y="0.5" width="9" height="2" fill="#2d8fe0"/><rect x="3.5" y="3.5" width="9" height="9" fill="#fff" stroke="#2d8fe0"/><rect x="3.5" y="3.5" width="9" height="2" fill="#2d8fe0"/><path d="M5 11L7 9L9 10L11 7" stroke="#f06020" fill="none" stroke-width="1.2"/></svg><div style="position:absolute;left:179.5px;top:58.9px;font-size:8.4px;line-height:10px;letter-spacing:-0.2px;color:#6d6d6d;white-space:nowrap;transform:scaleX(0.8);transform-origin:left top;">EURUSD,H1</div><div style="position:absolute;left:465px;top:65px;width:6px;height:1px;background:#777;"></div><div style="position:absolute;left:487px;top:61px;width:7px;height:7px;border:1px solid #777;"></div><svg style="position:absolute;left:511px;top:60px" width="8" height="8"><path d="M1 1L7 7M7 1L1 7" stroke="#777" stroke-width="1"/></svg><div style="position:absolute;left:166px;top:74px;width:358px;height:162px;background:#000;"></div><svg style="position:absolute;left:166px;top:74px" width="358" height="162" viewBox="166 74 358 162" shape-rendering="crispEdges"><line x1="188.5" y1="75.5" x2="188.5" y2="222" stroke="#707070" stroke-dasharray="2,2"/><line x1="208.5" y1="75.5" x2="208.5" y2="222" stroke="#707070" stroke-dasharray="2,2"/><line x1="229.5" y1="75.5" x2="229.5" y2="222" stroke="#707070" stroke-dasharray="2,2"/><line x1="249.5" y1="75.5" x2="249.5" y2="222" stroke="#707070" stroke-dasharray="2,2"/><line x1="270.5" y1="75.5" x2="270.5" y2="222" stroke="#707070" stroke-dasharray="2,2"/><line x1="291.5" y1="75.5" x2="291.5" y2="222" stroke="#707070" stroke-dasharray="2,2"/><line x1="311.5" y1="75.5" x2="311.5" y2="222" stroke="#707070" stroke-dasharray="2,2"/><line x1="332.5" y1="75.5" x2="332.5" y2="222" stroke="#707070" stroke-dasharray="2,2"/><line x1="352.5" y1="75.5" x2="352.5" y2="222" stroke="#707070" stroke-dasharray="2,2"/><line x1="373.5" y1="75.5" x2="373.5" y2="222" stroke="#707070" stroke-dasharray="2,2"/><line x1="394.5" y1="75.5" x2="394.5" y2="222" stroke="#707070" stroke-dasharray="2,2"/><line x1="414.5" y1="75.5" x2="414.5" y2="222" stroke="#707070" stroke-dasharray="2,2"/><line x1="435.5" y1="75.5" x2="435.5" y2="222" stroke="#707070" stroke-dasharray="2,2"/><line x1="456.5" y1="75.5" x2="456.5" y2="222" stroke="#707070" stroke-dasharray="2,2"/><line x1="476.5" y1="75.5" x2="476.5" y2="222" stroke="#707070" stroke-dasharray="2,2"/><line x1="167.5" y1="87.5" x2="493.5" y2="87.5" stroke="#707070" stroke-dasharray="2,2"/><line x1="167.5" y1="110.5" x2="493.5" y2="110.5" stroke="#707070" stroke-dasharray="2,2"/><line x1="167.5" y1="132.5" x2="493.5" y2="132.5" stroke="#707070" stroke-dasharray="2,2"/><line x1="167.5" y1="155.5" x2="493.5" y2="155.5" stroke="#707070" stroke-dasharray="2,2"/><line x1="167.5" y1="177.5" x2="493.5" y2="177.5" stroke="#707070" stroke-dasharray="2,2"/><line x1="167.5" y1="199.5" x2="493.5" y2="199.5" stroke="#707070" stroke-dasharray="2,2"/><g shape-rendering="auto"><line x1="169.25" y1="171.6" x2="169.25" y2="178.5" stroke="#00b800" stroke-width="0.7"/><rect x="168.55" y="173.8" width="1.4" height="1.5" fill="#a8ffa8" stroke="#18c818" stroke-width="0.7"/><line x1="171.78" y1="171.8" x2="171.78" y2="177.5" stroke="#00b800" stroke-width="0.7"/><rect x="171.08" y="173.8" width="1.4" height="1.5" fill="#a8ffa8" stroke="#18c818" stroke-width="0.7"/><line x1="174.31" y1="169.9" x2="174.31" y2="177.1" stroke="#00b800" stroke-width="0.7"/><rect x="173.61" y="172.0" width="1.4" height="2.8" fill="#a8ffa8" stroke="#18c818" stroke-width="0.7"/><line x1="176.84" y1="171.2" x2="176.84" y2="179.6" stroke="#00b800" stroke-width="0.7"/><rect x="176.14" y="172.0" width="1.4" height="6.3" fill="#a8ffa8" stroke="#18c818" stroke-width="0.7"/><line x1="179.37" y1="167.2" x2="179.37" y2="180.8" stroke="#00b800" stroke-width="0.7"/><rect x="178.67" y="170.1" width="1.4" height="8.1" fill="#a8ffa8" stroke="#18c818" stroke-width="0.7"/><line x1="181.90" y1="165.9" x2="181.90" y2="174.3" stroke="#00b800" stroke-width="0.7"/><rect x="181.20" y="169.4" width="1.4" height="1.5" fill="#a8ffa8" stroke="#18c818" stroke-width="0.7"/><line x1="184.43" y1="167.0" x2="184.43" y2="178.6" stroke="#00b800" stroke-width="0.7"/><rect x="183.73" y="169.4" width="1.4" height="8.2" fill="#a8ffa8" stroke="#18c818" stroke-width="0.7"/><line x1="186.96" y1="171.6" x2="186.96" y2="178.3" stroke="#00b800" stroke-width="0.7"/><rect x="186.26" y="173.7" width="1.4" height="3.9" fill="#a8ffa8" stroke="#18c818" stroke-width="0.7"/><line x1="189.49" y1="172.4" x2="189.49" y2="176.2" stroke="#00b800" stroke-width="0.7"/><rect x="188.79" y="173.7" width="1.4" height="1.9" fill="#a8ffa8" stroke="#18c818" stroke-width="0.7"/><line x1="192.02" y1="173.8" x2="192.02" y2="181.6" stroke="#00b800" stroke-width="0.7"/><rect x="191.32" y="175.6" width="1.4" height="3.0" fill="#a8ffa8" stroke="#18c818" stroke-width="0.7"/><line x1="194.55" y1="176.2" x2="194.55" y2="183.5" stroke="#00b800" stroke-width="0.7"/><rect x="193.85" y="178.6" width="1.4" height="2.9" fill="#a8ffa8" stroke="#18c818" stroke-width="0.7"/><line x1="197.08" y1="179.6" x2="197.08" y2="187.7" stroke="#00b800" stroke-width="0.7"/><rect x="196.38" y="181.5" width="1.4" height="4.8" fill="#a8ffa8" stroke="#18c818" stroke-width="0.7"/><line x1="199.61" y1="182.8" x2="199.61" y2="197.7" stroke="#00b800" stroke-width="0.7"/><rect x="198.91" y="186.3" width="1.4" height="8.4" fill="#a8ffa8" stroke="#18c818" stroke-width="0.7"/><line x1="202.14" y1="193.1" x2="202.14" y2="197.3" stroke="#00b800" stroke-width="0.7"/><rect x="201.44" y="194.6" width="1.4" height="1.5" fill="#a8ffa8" stroke="#18c818" stroke-width="0.7"/><line x1="204.67" y1="191.8" x2="204.67" y2="197.4" stroke="#00b800" stroke-width="0.7"/><rect x="203.97" y="192.5" width="1.4" height="2.1" fill="#a8ffa8" stroke="#18c818" stroke-width="0.7"/><line x1="207.20" y1="189.4" x2="207.20" y2="197.1" stroke="#00b800" stroke-width="0.7"/><rect x="206.50" y="192.5" width="1.4" height="3.0" fill="#a8ffa8" stroke="#18c818" stroke-width="0.7"/><line x1="209.73" y1="192.4" x2="209.73" y2="197.8" stroke="#00b800" stroke-width="0.7"/><rect x="209.03" y="195.5" width="1.4" height="1.8" fill="#a8ffa8" stroke="#18c818" stroke-width="0.7"/><line x1="212.26" y1="181.3" x2="212.26" y2="199.2" stroke="#00b800" stroke-width="0.7"/><rect x="211.56" y="184.5" width="1.4" height="12.8" fill="#a8ffa8" stroke="#18c818" stroke-width="0.7"/><line x1="214.79" y1="182.8" x2="214.79" y2="189.9" stroke="#00b800" stroke-width="0.7"/><rect x="214.09" y="184.5" width="1.4" height="4.7" fill="#a8ffa8" stroke="#18c818" stroke-width="0.7"/><line x1="217.32" y1="178.3" x2="217.32" y2="190.5" stroke="#00b800" stroke-width="0.7"/><rect x="216.62" y="181.1" width="1.4" height="8.0" fill="#a8ffa8" stroke="#18c818" stroke-width="0.7"/><line x1="219.85" y1="169.0" x2="219.85" y2="184.5" stroke="#00b800" stroke-width="0.7"/><rect x="219.15" y="170.5" width="1.4" height="10.6" fill="#a8ffa8" stroke="#18c818" stroke-width="0.7"/><line x1="222.38" y1="169.6" x2="222.38" y2="177.7" stroke="#00b800" stroke-width="0.7"/><rect x="221.68" y="170.5" width="1.4" height="5.9" fill="#a8ffa8" stroke="#18c818" stroke-width="0.7"/><line x1="224.91" y1="167.9" x2="224.91" y2="179.3" stroke="#00b800" stroke-width="0.7"/><rect x="224.21" y="168.6" width="1.4" height="7.8" fill="#a8ffa8" stroke="#18c818" stroke-width="0.7"/><line x1="227.44" y1="166.4" x2="227.44" y2="172.0" stroke="#00b800" stroke-width="0.7"/><rect x="226.74" y="168.6" width="1.4" height="1.5" fill="#a8ffa8" stroke="#18c818" stroke-width="0.7"/><line x1="229.97" y1="166.8" x2="229.97" y2="172.5" stroke="#00b800" stroke-width="0.7"/><rect x="229.27" y="169.5" width="1.4" height="2.1" fill="#a8ffa8" stroke="#18c818" stroke-width="0.7"/><line x1="232.50" y1="170.7" x2="232.50" y2="181.2" stroke="#00b800" stroke-width="0.7"/><rect x="231.80" y="171.6" width="1.4" height="7.8" fill="#a8ffa8" stroke="#18c818" stroke-width="0.7"/><line x1="235.03" y1="175.5" x2="235.03" y2="182.8" stroke="#00b800" stroke-width="0.7"/><rect x="234.33" y="176.8" width="1.4" height="2.6" fill="#a8ffa8" stroke="#18c818" stroke-width="0.7"/><line x1="237.56" y1="175.4" x2="237.56" y2="187.8" stroke="#00b800" stroke-width="0.7"/><rect x="236.86" y="176.8" width="1.4" height="7.8" fill="#a8ffa8" stroke="#18c818" stroke-width="0.7"/><line x1="240.09" y1="177.0" x2="240.09" y2="187.7" stroke="#00b800" stroke-width="0.7"/><rect x="239.39" y="178.7" width="1.4" height="5.9" fill="#a8ffa8" stroke="#18c818" stroke-width="0.7"/><line x1="242.62" y1="177.9" x2="242.62" y2="187.2" stroke="#00b800" stroke-width="0.7"/><rect x="241.92" y="178.7" width="1.4" height="5.0" fill="#a8ffa8" stroke="#18c818" stroke-width="0.7"/><line x1="245.15" y1="177.4" x2="245.15" y2="186.6" stroke="#00b800" stroke-width="0.7"/><rect x="244.45" y="178.7" width="1.4" height="5.1" fill="#a8ffa8" stroke="#18c818" stroke-width="0.7"/><line x1="247.68" y1="177.3" x2="247.68" y2="185.1" stroke="#00b800" stroke-width="0.7"/><rect x="246.98" y="178.7" width="1.4" height="5.7" fill="#a8ffa8" stroke="#18c818" stroke-width="0.7"/><line x1="250.21" y1="182.1" x2="250.21" y2="188.4" stroke="#00b800" stroke-width="0.7"/><rect x="249.51" y="184.4" width="1.4" height="2.9" fill="#a8ffa8" stroke="#18c818" stroke-width="0.7"/><line x1="252.74" y1="185.6" x2="252.74" y2="197.5" stroke="#00b800" stroke-width="0.7"/><rect x="252.04" y="187.2" width="1.4" height="8.4" fill="#a8ffa8" stroke="#18c818" stroke-width="0.7"/><line x1="255.27" y1="193.7" x2="255.27" y2="203.1" stroke="#00b800" stroke-width="0.7"/><rect x="254.57" y="195.7" width="1.4" height="5.2" fill="#a8ffa8" stroke="#18c818" stroke-width="0.7"/><line x1="257.80" y1="199.8" x2="257.80" y2="203.3" stroke="#00b800" stroke-width="0.7"/><rect x="257.10" y="200.9" width="1.4" height="1.5" fill="#a8ffa8" stroke="#18c818" stroke-width="0.7"/><line x1="260.33" y1="198.4" x2="260.33" y2="205.0" stroke="#00b800" stroke-width="0.7"/><rect x="259.63" y="201.4" width="1.4" height="2.3" fill="#a8ffa8" stroke="#18c818" stroke-width="0.7"/><line x1="262.86" y1="195.2" x2="262.86" y2="207.0" stroke="#00b800" stroke-width="0.7"/><rect x="262.16" y="197.9" width="1.4" height="5.8" fill="#a8ffa8" stroke="#18c818" stroke-width="0.7"/><line x1="265.39" y1="194.5" x2="265.39" y2="202.5" stroke="#00b800" stroke-width="0.7"/><rect x="264.69" y="197.9" width="1.4" height="1.5" fill="#a8ffa8" stroke="#18c818" stroke-width="0.7"/><line x1="267.92" y1="197.4" x2="267.92" y2="201.9" stroke="#00b800" stroke-width="0.7"/><rect x="267.22" y="199.2" width="1.4" height="1.9" fill="#a8ffa8" stroke="#18c818" stroke-width="0.7"/><line x1="270.45" y1="188.9" x2="270.45" y2="202.3" stroke="#00b800" stroke-width="0.7"/><rect x="269.75" y="192.3" width="1.4" height="8.8" fill="#a8ffa8" stroke="#18c818" stroke-width="0.7"/><line x1="272.98" y1="191.1" x2="272.98" y2="200.2" stroke="#00b800" stroke-width="0.7"/><rect x="272.28" y="192.3" width="1.4" height="4.9" fill="#a8ffa8" stroke="#18c818" stroke-width="0.7"/><line x1="275.51" y1="189.0" x2="275.51" y2="198.2" stroke="#00b800" stroke-width="0.7"/><rect x="274.81" y="190.4" width="1.4" height="6.8" fill="#a8ffa8" stroke="#18c818" stroke-width="0.7"/><line x1="278.04" y1="182.7" x2="278.04" y2="191.6" stroke="#00b800" stroke-width="0.7"/><rect x="277.34" y="183.4" width="1.4" height="7.0" fill="#a8ffa8" stroke="#18c818" stroke-width="0.7"/><line x1="280.57" y1="180.4" x2="280.57" y2="187.3" stroke="#00b800" stroke-width="0.7"/><rect x="279.87" y="183.4" width="1.4" height="1.5" fill="#a8ffa8" stroke="#18c818" stroke-width="0.7"/><line x1="283.10" y1="181.6" x2="283.10" y2="187.5" stroke="#00b800" stroke-width="0.7"/><rect x="282.40" y="184.8" width="1.4" height="1.5" fill="#a8ffa8" stroke="#18c818" stroke-width="0.7"/><line x1="285.63" y1="180.2" x2="285.63" y2="186.8" stroke="#00b800" stroke-width="0.7"/><rect x="284.93" y="181.5" width="1.4" height="3.5" fill="#a8ffa8" stroke="#18c818" stroke-width="0.7"/><line x1="288.16" y1="179.0" x2="288.16" y2="183.2" stroke="#00b800" stroke-width="0.7"/><rect x="287.46" y="180.1" width="1.4" height="1.5" fill="#a8ffa8" stroke="#18c818" stroke-width="0.7"/><line x1="290.69" y1="179.2" x2="290.69" y2="186.5" stroke="#00b800" stroke-width="0.7"/><rect x="289.99" y="180.1" width="1.4" height="4.8" fill="#a8ffa8" stroke="#18c818" stroke-width="0.7"/><line x1="293.22" y1="181.5" x2="293.22" y2="191.6" stroke="#00b800" stroke-width="0.7"/><rect x="292.52" y="184.9" width="1.4" height="4.3" fill="#a8ffa8" stroke="#18c818" stroke-width="0.7"/><line x1="295.75" y1="183.6" x2="295.75" y2="190.1" stroke="#00b800" stroke-width="0.7"/><rect x="295.05" y="185.8" width="1.4" height="3.4" fill="#a8ffa8" stroke="#18c818" stroke-width="0.7"/><line x1="298.28" y1="176.5" x2="298.28" y2="189.1" stroke="#00b800" stroke-width="0.7"/><rect x="297.58" y="177.1" width="1.4" height="8.8" fill="#a8ffa8" stroke="#18c818" stroke-width="0.7"/><line x1="300.81" y1="173.7" x2="300.81" y2="184.2" stroke="#00b800" stroke-width="0.7"/><rect x="300.11" y="177.1" width="1.4" height="6.6" fill="#a8ffa8" stroke="#18c818" stroke-width="0.7"/><line x1="303.34" y1="180.7" x2="303.34" y2="186.8" stroke="#00b800" stroke-width="0.7"/><rect x="302.64" y="182.6" width="1.4" height="1.5" fill="#a8ffa8" stroke="#18c818" stroke-width="0.7"/><line x1="305.87" y1="177.5" x2="305.87" y2="183.4" stroke="#00b800" stroke-width="0.7"/><rect x="305.17" y="181.0" width="1.4" height="1.7" fill="#a8ffa8" stroke="#18c818" stroke-width="0.7"/><line x1="308.40" y1="178.2" x2="308.40" y2="190.1" stroke="#00b800" stroke-width="0.7"/><rect x="307.70" y="181.0" width="1.4" height="6.0" fill="#a8ffa8" stroke="#18c818" stroke-width="0.7"/><line x1="310.93" y1="183.2" x2="310.93" y2="190.2" stroke="#00b800" stroke-width="0.7"/><rect x="310.23" y="185.8" width="1.4" height="1.5" fill="#a8ffa8" stroke="#18c818" stroke-width="0.7"/><line x1="313.46" y1="183.4" x2="313.46" y2="189.0" stroke="#00b800" stroke-width="0.7"/><rect x="312.76" y="185.0" width="1.4" height="1.5" fill="#a8ffa8" stroke="#18c818" stroke-width="0.7"/><line x1="315.99" y1="180.1" x2="315.99" y2="186.7" stroke="#00b800" stroke-width="0.7"/><rect x="315.29" y="183.2" width="1.4" height="1.8" fill="#a8ffa8" stroke="#18c818" stroke-width="0.7"/><line x1="318.52" y1="176.5" x2="318.52" y2="185.4" stroke="#00b800" stroke-width="0.7"/><rect x="317.82" y="179.6" width="1.4" height="3.5" fill="#a8ffa8" stroke="#18c818" stroke-width="0.7"/><line x1="321.05" y1="173.6" x2="321.05" y2="181.9" stroke="#00b800" stroke-width="0.7"/><rect x="320.35" y="175.3" width="1.4" height="4.4" fill="#a8ffa8" stroke="#18c818" stroke-width="0.7"/><line x1="323.58" y1="171.8" x2="323.58" y2="177.7" stroke="#00b800" stroke-width="0.7"/><rect x="322.88" y="172.6" width="1.4" height="2.7" fill="#a8ffa8" stroke="#18c818" stroke-width="0.7"/><line x1="326.11" y1="169.4" x2="326.11" y2="178.4" stroke="#00b800" stroke-width="0.7"/><rect x="325.41" y="172.6" width="1.4" height="3.2" fill="#a8ffa8" stroke="#18c818" stroke-width="0.7"/><line x1="328.64" y1="164.0" x2="328.64" y2="178.0" stroke="#00b800" stroke-width="0.7"/><rect x="327.94" y="166.7" width="1.4" height="9.0" fill="#a8ffa8" stroke="#18c818" stroke-width="0.7"/><line x1="331.17" y1="160.1" x2="331.17" y2="167.5" stroke="#00b800" stroke-width="0.7"/><rect x="330.47" y="163.1" width="1.4" height="3.7" fill="#a8ffa8" stroke="#18c818" stroke-width="0.7"/><line x1="333.70" y1="162.5" x2="333.70" y2="166.9" stroke="#00b800" stroke-width="0.7"/><rect x="333.00" y="163.1" width="1.4" height="1.5" fill="#a8ffa8" stroke="#18c818" stroke-width="0.7"/><line x1="336.23" y1="158.3" x2="336.23" y2="166.5" stroke="#00b800" stroke-width="0.7"/><rect x="335.53" y="159.5" width="1.4" height="4.4" fill="#a8ffa8" stroke="#18c818" stroke-width="0.7"/><line x1="338.76" y1="157.2" x2="338.76" y2="164.3" stroke="#00b800" stroke-width="0.7"/><rect x="338.06" y="159.5" width="1.4" height="1.5" fill="#a8ffa8" stroke="#18c818" stroke-width="0.7"/><line x1="341.29" y1="158.3" x2="341.29" y2="161.8" stroke="#00b800" stroke-width="0.7"/><rect x="340.59" y="158.9" width="1.4" height="1.5" fill="#a8ffa8" stroke="#18c818" stroke-width="0.7"/><line x1="343.82" y1="157.8" x2="343.82" y2="165.8" stroke="#00b800" stroke-width="0.7"/><rect x="343.12" y="158.9" width="1.4" height="6.0" fill="#a8ffa8" stroke="#18c818" stroke-width="0.7"/><line x1="346.35" y1="162.4" x2="346.35" y2="168.3" stroke="#00b800" stroke-width="0.7"/><rect x="345.65" y="164.8" width="1.4" height="1.6" fill="#a8ffa8" stroke="#18c818" stroke-width="0.7"/><line x1="348.88" y1="165.0" x2="348.88" y2="170.4" stroke="#00b800" stroke-width="0.7"/><rect x="348.18" y="166.4" width="1.4" height="1.5" fill="#a8ffa8" stroke="#18c818" stroke-width="0.7"/><line x1="351.41" y1="159.9" x2="351.41" y2="170.0" stroke="#00b800" stroke-width="0.7"/><rect x="350.71" y="161.6" width="1.4" height="5.5" fill="#a8ffa8" stroke="#18c818" stroke-width="0.7"/><line x1="353.94" y1="158.5" x2="353.94" y2="170.9" stroke="#00b800" stroke-width="0.7"/><rect x="353.24" y="161.6" width="1.4" height="7.6" fill="#a8ffa8" stroke="#18c818" stroke-width="0.7"/><line x1="356.47" y1="163.8" x2="356.47" y2="170.1" stroke="#00b800" stroke-width="0.7"/><rect x="355.77" y="165.3" width="1.4" height="4.0" fill="#a8ffa8" stroke="#18c818" stroke-width="0.7"/><line x1="359.00" y1="162.3" x2="359.00" y2="170.5" stroke="#00b800" stroke-width="0.7"/><rect x="358.30" y="165.3" width="1.4" height="2.2" fill="#a8ffa8" stroke="#18c818" stroke-width="0.7"/><line x1="361.53" y1="164.1" x2="361.53" y2="174.2" stroke="#00b800" stroke-width="0.7"/><rect x="360.83" y="167.5" width="1.4" height="5.4" fill="#a8ffa8" stroke="#18c818" stroke-width="0.7"/><line x1="364.06" y1="166.0" x2="364.06" y2="174.2" stroke="#00b800" stroke-width="0.7"/><rect x="363.36" y="167.8" width="1.4" height="5.0" fill="#a8ffa8" stroke="#18c818" stroke-width="0.7"/><line x1="366.59" y1="166.1" x2="366.59" y2="171.8" stroke="#00b800" stroke-width="0.7"/><rect x="365.89" y="167.8" width="1.4" height="1.5" fill="#a8ffa8" stroke="#18c818" stroke-width="0.7"/><line x1="369.12" y1="167.9" x2="369.12" y2="177.2" stroke="#00b800" stroke-width="0.7"/><rect x="368.42" y="169.4" width="1.4" height="4.8" fill="#a8ffa8" stroke="#18c818" stroke-width="0.7"/><line x1="371.65" y1="172.3" x2="371.65" y2="179.9" stroke="#00b800" stroke-width="0.7"/><rect x="370.95" y="174.2" width="1.4" height="5.0" fill="#a8ffa8" stroke="#18c818" stroke-width="0.7"/><line x1="374.18" y1="163.5" x2="374.18" y2="179.8" stroke="#00b800" stroke-width="0.7"/><rect x="373.48" y="166.6" width="1.4" height="12.5" fill="#a8ffa8" stroke="#18c818" stroke-width="0.7"/><line x1="376.71" y1="164.4" x2="376.71" y2="174.6" stroke="#00b800" stroke-width="0.7"/><rect x="376.01" y="166.6" width="1.4" height="6.5" fill="#a8ffa8" stroke="#18c818" stroke-width="0.7"/><line x1="379.24" y1="169.2" x2="379.24" y2="174.0" stroke="#00b800" stroke-width="0.7"/><rect x="378.54" y="169.7" width="1.4" height="3.4" fill="#a8ffa8" stroke="#18c818" stroke-width="0.7"/><line x1="381.77" y1="156.2" x2="381.77" y2="172.7" stroke="#00b800" stroke-width="0.7"/><rect x="381.07" y="156.8" width="1.4" height="12.9" fill="#a8ffa8" stroke="#18c818" stroke-width="0.7"/><line x1="384.30" y1="145.2" x2="384.30" y2="157.4" stroke="#00b800" stroke-width="0.7"/><rect x="383.60" y="146.1" width="1.4" height="10.7" fill="#a8ffa8" stroke="#18c818" stroke-width="0.7"/><line x1="386.83" y1="143.1" x2="386.83" y2="148.8" stroke="#00b800" stroke-width="0.7"/><rect x="386.13" y="144.9" width="1.4" height="1.5" fill="#a8ffa8" stroke="#18c818" stroke-width="0.7"/><line x1="389.36" y1="133.7" x2="389.36" y2="148.3" stroke="#00b800" stroke-width="0.7"/><rect x="388.66" y="136.6" width="1.4" height="8.3" fill="#a8ffa8" stroke="#18c818" stroke-width="0.7"/><line x1="391.89" y1="125.3" x2="391.89" y2="138.5" stroke="#00b800" stroke-width="0.7"/><rect x="391.19" y="126.4" width="1.4" height="10.2" fill="#a8ffa8" stroke="#18c818" stroke-width="0.7"/><line x1="394.42" y1="102.1" x2="394.42" y2="128.3" stroke="#00b800" stroke-width="0.7"/><rect x="393.72" y="102.6" width="1.4" height="23.8" fill="#a8ffa8" stroke="#18c818" stroke-width="0.7"/><line x1="396.95" y1="101.6" x2="396.95" y2="110.9" stroke="#00b800" stroke-width="0.7"/><rect x="396.25" y="102.6" width="1.4" height="6.9" fill="#a8ffa8" stroke="#18c818" stroke-width="0.7"/><line x1="399.48" y1="102.5" x2="399.48" y2="111.6" stroke="#00b800" stroke-width="0.7"/><rect x="398.78" y="105.1" width="1.4" height="4.4" fill="#a8ffa8" stroke="#18c818" stroke-width="0.7"/><line x1="402.01" y1="99.9" x2="402.01" y2="106.8" stroke="#00b800" stroke-width="0.7"/><rect x="401.31" y="102.7" width="1.4" height="2.4" fill="#a8ffa8" stroke="#18c818" stroke-width="0.7"/><line x1="404.54" y1="98.8" x2="404.54" y2="104.3" stroke="#00b800" stroke-width="0.7"/><rect x="403.84" y="102.0" width="1.4" height="1.5" fill="#a8ffa8" stroke="#18c818" stroke-width="0.7"/><line x1="407.07" y1="97.0" x2="407.07" y2="102.9" stroke="#00b800" stroke-width="0.7"/><rect x="406.37" y="99.7" width="1.4" height="2.3" fill="#a8ffa8" stroke="#18c818" stroke-width="0.7"/><line x1="409.60" y1="93.1" x2="409.60" y2="102.9" stroke="#00b800" stroke-width="0.7"/><rect x="408.90" y="95.4" width="1.4" height="4.3" fill="#a8ffa8" stroke="#18c818" stroke-width="0.7"/><line x1="412.13" y1="93.2" x2="412.13" y2="100.1" stroke="#00b800" stroke-width="0.7"/><rect x="411.43" y="95.4" width="1.4" height="1.5" fill="#a8ffa8" stroke="#18c818" stroke-width="0.7"/><line x1="414.66" y1="93.4" x2="414.66" y2="109.0" stroke="#00b800" stroke-width="0.7"/><rect x="413.96" y="96.7" width="1.4" height="10.5" fill="#a8ffa8" stroke="#18c818" stroke-width="0.7"/><line x1="417.19" y1="106.0" x2="417.19" y2="111.3" stroke="#00b800" stroke-width="0.7"/><rect x="416.49" y="107.2" width="1.4" height="1.5" fill="#a8ffa8" stroke="#18c818" stroke-width="0.7"/><line x1="419.72" y1="105.0" x2="419.72" y2="113.6" stroke="#00b800" stroke-width="0.7"/><rect x="419.02" y="107.4" width="1.4" height="3.5" fill="#a8ffa8" stroke="#18c818" stroke-width="0.7"/><line x1="422.25" y1="98.9" x2="422.25" y2="114.4" stroke="#00b800" stroke-width="0.7"/><rect x="421.55" y="102.1" width="1.4" height="8.9" fill="#a8ffa8" stroke="#18c818" stroke-width="0.7"/><line x1="424.78" y1="100.0" x2="424.78" y2="115.2" stroke="#00b800" stroke-width="0.7"/><rect x="424.08" y="102.1" width="1.4" height="10.3" fill="#a8ffa8" stroke="#18c818" stroke-width="0.7"/><line x1="427.31" y1="99.5" x2="427.31" y2="115.4" stroke="#00b800" stroke-width="0.7"/><rect x="426.61" y="102.7" width="1.4" height="9.6" fill="#a8ffa8" stroke="#18c818" stroke-width="0.7"/><line x1="429.84" y1="101.8" x2="429.84" y2="105.9" stroke="#00b800" stroke-width="0.7"/><rect x="429.14" y="102.6" width="1.4" height="1.5" fill="#a8ffa8" stroke="#18c818" stroke-width="0.7"/><line x1="432.37" y1="99.8" x2="432.37" y2="110.1" stroke="#00b800" stroke-width="0.7"/><rect x="431.67" y="102.6" width="1.4" height="5.5" fill="#a8ffa8" stroke="#18c818" stroke-width="0.7"/><line x1="434.90" y1="105.1" x2="434.90" y2="110.2" stroke="#00b800" stroke-width="0.7"/><rect x="434.20" y="108.0" width="1.4" height="1.5" fill="#a8ffa8" stroke="#18c818" stroke-width="0.7"/><line x1="437.43" y1="107.0" x2="437.43" y2="127.0" stroke="#00b800" stroke-width="0.7"/><rect x="436.73" y="108.0" width="1.4" height="17.5" fill="#a8ffa8" stroke="#18c818" stroke-width="0.7"/><line x1="439.96" y1="123.7" x2="439.96" y2="127.1" stroke="#00b800" stroke-width="0.7"/><rect x="439.26" y="124.6" width="1.4" height="1.5" fill="#a8ffa8" stroke="#18c818" stroke-width="0.7"/><line x1="442.49" y1="122.0" x2="442.49" y2="129.2" stroke="#00b800" stroke-width="0.7"/><rect x="441.79" y="124.6" width="1.4" height="1.5" fill="#a8ffa8" stroke="#18c818" stroke-width="0.7"/><line x1="445.02" y1="122.5" x2="445.02" y2="131.1" stroke="#00b800" stroke-width="0.7"/><rect x="444.32" y="125.8" width="1.4" height="3.3" fill="#a8ffa8" stroke="#18c818" stroke-width="0.7"/><line x1="447.55" y1="128.4" x2="447.55" y2="134.6" stroke="#00b800" stroke-width="0.7"/><rect x="446.85" y="129.1" width="1.4" height="4.3" fill="#a8ffa8" stroke="#18c818" stroke-width="0.7"/><line x1="450.08" y1="130.5" x2="450.08" y2="136.1" stroke="#00b800" stroke-width="0.7"/><rect x="449.38" y="131.9" width="1.4" height="1.5" fill="#a8ffa8" stroke="#18c818" stroke-width="0.7"/><line x1="452.61" y1="129.8" x2="452.61" y2="142.8" stroke="#00b800" stroke-width="0.7"/><rect x="451.91" y="131.9" width="1.4" height="7.9" fill="#a8ffa8" stroke="#18c818" stroke-width="0.7"/><line x1="455.14" y1="137.7" x2="455.14" y2="142.3" stroke="#00b800" stroke-width="0.7"/><rect x="454.44" y="139.2" width="1.4" height="1.5" fill="#a8ffa8" stroke="#18c818" stroke-width="0.7"/><line x1="457.67" y1="132.7" x2="457.67" y2="140.3" stroke="#00b800" stroke-width="0.7"/><rect x="456.97" y="135.9" width="1.4" height="3.3" fill="#a8ffa8" stroke="#18c818" stroke-width="0.7"/><line x1="460.20" y1="131.1" x2="460.20" y2="138.1" stroke="#00b800" stroke-width="0.7"/><rect x="459.50" y="134.5" width="1.4" height="1.5" fill="#a8ffa8" stroke="#18c818" stroke-width="0.7"/><line x1="462.73" y1="130.0" x2="462.73" y2="136.6" stroke="#00b800" stroke-width="0.7"/><rect x="462.03" y="131.1" width="1.4" height="3.4" fill="#a8ffa8" stroke="#18c818" stroke-width="0.7"/><line x1="465.26" y1="128.6" x2="465.26" y2="133.0" stroke="#00b800" stroke-width="0.7"/><rect x="464.56" y="131.0" width="1.4" height="1.5" fill="#a8ffa8" stroke="#18c818" stroke-width="0.7"/><line x1="467.79" y1="128.9" x2="467.79" y2="137.6" stroke="#00b800" stroke-width="0.7"/><rect x="467.09" y="131.0" width="1.4" height="4.9" fill="#a8ffa8" stroke="#18c818" stroke-width="0.7"/><line x1="470.32" y1="131.5" x2="470.32" y2="137.8" stroke="#00b800" stroke-width="0.7"/><rect x="469.62" y="133.6" width="1.4" height="2.2" fill="#a8ffa8" stroke="#18c818" stroke-width="0.7"/><line x1="472.85" y1="131.4" x2="472.85" y2="135.8" stroke="#00b800" stroke-width="0.7"/><rect x="472.15" y="132.1" width="1.4" height="1.5" fill="#a8ffa8" stroke="#18c818" stroke-width="0.7"/><line x1="475.38" y1="125.5" x2="475.38" y2="135.4" stroke="#00b800" stroke-width="0.7"/><rect x="474.68" y="128.9" width="1.4" height="3.3" fill="#a8ffa8" stroke="#18c818" stroke-width="0.7"/><line x1="477.91" y1="125.1" x2="477.91" y2="129.7" stroke="#00b800" stroke-width="0.7"/><rect x="477.21" y="127.0" width="1.4" height="1.8" fill="#a8ffa8" stroke="#18c818" stroke-width="0.7"/><line x1="480.44" y1="124.1" x2="480.44" y2="132.7" stroke="#00b800" stroke-width="0.7"/><rect x="479.74" y="127.0" width="1.4" height="2.5" fill="#a8ffa8" stroke="#18c818" stroke-width="0.7"/><line x1="482.97" y1="128.1" x2="482.97" y2="132.1" stroke="#00b800" stroke-width="0.7"/><rect x="482.27" y="129.5" width="1.4" height="1.5" fill="#a8ffa8" stroke="#18c818" stroke-width="0.7"/><line x1="485.50" y1="127.8" x2="485.50" y2="134.5" stroke="#00b800" stroke-width="0.7"/><rect x="484.80" y="131.0" width="1.4" height="2.6" fill="#a8ffa8" stroke="#18c818" stroke-width="0.7"/><line x1="488.03" y1="133.1" x2="488.03" y2="136.2" stroke="#00b800" stroke-width="0.7"/><rect x="487.33" y="133.6" width="1.4" height="1.5" fill="#a8ffa8" stroke="#18c818" stroke-width="0.7"/><line x1="490.56" y1="125.0" x2="490.56" y2="136.0" stroke="#00b800" stroke-width="0.7"/><rect x="489.86" y="127.5" width="1.4" height="7.0" fill="#a8ffa8" stroke="#18c818" stroke-width="0.7"/><line x1="453.5" y1="128" x2="453.5" y2="156" stroke="#20e020" stroke-width="1"/><rect x="452.7" y="135.0" width="1.6" height="14.0" fill="#9cff9c" stroke="#20d020" stroke-width="0.8"/><line x1="451" y1="126" x2="451" y2="148" stroke="#20e020" stroke-width="1"/><rect x="450.2" y="131.5" width="1.6" height="11.0" fill="#9cff9c" stroke="#20d020" stroke-width="0.8"/><line x1="456" y1="125" x2="456" y2="145" stroke="#20e020" stroke-width="1"/><rect x="455.2" y="130.0" width="1.6" height="10.0" fill="#9cff9c" stroke="#20d020" stroke-width="0.8"/><line x1="387" y1="118" x2="387" y2="145" stroke="#20e020" stroke-width="1"/><rect x="386.2" y="124.8" width="1.6" height="13.5" fill="#9cff9c" stroke="#20d020" stroke-width="0.8"/><line x1="420" y1="93" x2="420" y2="108" stroke="#20e020" stroke-width="1"/><rect x="419.2" y="96.8" width="1.6" height="7.5" fill="#9cff9c" stroke="#20d020" stroke-width="0.8"/><line x1="407" y1="90" x2="407" y2="100" stroke="#20e020" stroke-width="1"/><rect x="406.2" y="92.5" width="1.6" height="5.0" fill="#9cff9c" stroke="#20d020" stroke-width="0.8"/><polyline points="168.0,178.0 170.6,177.8 174.4,177.5 178.6,177.2 182.5,177.0 186.0,176.9 189.3,176.9 192.7,177.1 196.0,177.6 199.4,178.7 202.7,180.2 206.0,181.7 209.0,183.0 211.6,184.0 213.9,184.9 216.2,185.5 218.8,185.7 221.9,185.4 225.2,184.7 228.6,183.8 232.0,183.0 235.4,182.0 238.8,180.8 242.2,179.9 245.6,179.7 249.0,180.5 252.5,182.0 255.8,183.8 259.0,185.7 261.9,187.7 264.7,190.0 267.3,192.2 269.8,193.8 272.1,194.9 274.2,195.6 276.4,196.0 279.0,195.8 282.3,195.0 285.9,193.6 289.7,192.0 293.4,190.5 296.9,189.1 300.3,187.7 303.6,186.3 307.0,185.0 310.3,183.9 313.7,183.0 317.0,182.1 320.3,181.0 323.6,179.9 326.9,178.7 330.2,177.4 333.8,175.7 337.8,173.3 342.1,170.4 346.3,167.6 350.0,165.6 353.1,164.6 355.8,164.2 358.3,164.2 360.6,164.3 362.7,164.6 364.6,165.1 366.5,165.7 368.7,166.3 371.3,167.0 374.1,167.8 376.9,168.4 379.5,168.3 381.7,167.4 383.8,165.9 385.7,164.1 387.5,162.3 389.3,160.6 391.0,158.7 392.7,156.7 394.2,154.2 395.5,151.1 396.7,147.6 397.9,143.9 399.3,140.3 401.0,136.7 402.8,133.1 404.7,129.5 406.5,126.0 408.3,122.5 410.0,119.1 411.8,115.8 413.7,113.0 415.8,110.7 418.0,108.8 420.2,107.2 422.3,105.8 424.2,104.7 426.1,103.9 427.8,103.3 429.5,103.0 430.9,102.9 432.2,103.1 433.5,103.5 435.2,104.4 437.4,105.7 439.9,107.5 442.6,109.5 445.3,111.6 448.1,114.0 450.9,116.6 453.8,119.3 456.7,121.6 459.6,123.5 462.5,125.2 465.4,126.7 468.2,128.0 470.9,129.0 473.5,129.9 476.0,130.5 478.3,131.0 480.3,131.3 482.1,131.5 483.8,131.6 485.4,131.6 487.1,131.5 488.7,131.3 490.2,131.1 491.2,131" fill="none" stroke="#d01e1e" stroke-width="1.1"/></g><line x1="167.5" y1="132.5" x2="493.5" y2="132.5" stroke="#8a9bab"/><rect x="167.5" y="75.5" width="326.0" height="146.5" fill="none" stroke="#c8c8c8"/><line x1="167.5" y1="222" x2="493.5" y2="222" stroke="#c8c8c8" stroke-width="2"/><line x1="493" y1="87.5" x2="496" y2="87.5" stroke="#c0c0c0"/><text x="497" y="89.6" font-size="6.3" letter-spacing="-0.15" fill="#fff">1.1100</text><line x1="493" y1="110.5" x2="496" y2="110.5" stroke="#c0c0c0"/><text x="497" y="112.6" font-size="6.3" letter-spacing="-0.15" fill="#fff">1.1080</text><line x1="493" y1="155.5" x2="496" y2="155.5" stroke="#c0c0c0"/><text x="497" y="157.6" font-size="6.3" letter-spacing="-0.15" fill="#fff">1.1040</text><line x1="493" y1="177.5" x2="496" y2="177.5" stroke="#c0c0c0"/><text x="497" y="179.6" font-size="6.3" letter-spacing="-0.15" fill="#fff">1.1020</text><line x1="493" y1="199.5" x2="496" y2="199.5" stroke="#c0c0c0"/><text x="497" y="201.6" font-size="6.3" letter-spacing="-0.15" fill="#fff">1.1000</text><rect x="495" y="128.5" width="22" height="8" fill="#8fa5bb"/><text x="497" y="134.6" font-size="6.3" letter-spacing="-0.15" fill="#1a1a1a">1.1060</text><line x1="167.5" y1="222" x2="167.5" y2="225" stroke="#c0c0c0"/><text x="167" y="230.8" font-size="6.3" letter-spacing="-0.15" fill="#fff">28 Jan 2020</text><line x1="208.5" y1="222" x2="208.5" y2="225" stroke="#c0c0c0"/><text x="208" y="230.8" font-size="6.3" letter-spacing="-0.15" fill="#fff">28 Jan 18:00</text><line x1="249.5" y1="222" x2="249.5" y2="225" stroke="#c0c0c0"/><text x="249" y="230.8" font-size="6.3" letter-spacing="-0.15" fill="#fff">29 Jan 10:00</text><line x1="291.5" y1="222" x2="291.5" y2="225" stroke="#c0c0c0"/><text x="291" y="230.8" font-size="6.3" letter-spacing="-0.15" fill="#fff">30 Jan 02:00</text><line x1="332.5" y1="222" x2="332.5" y2="225" stroke="#c0c0c0"/><text x="332" y="230.8" font-size="6.3" letter-spacing="-0.15" fill="#fff">30 Jan 18:00</text><line x1="373.5" y1="222" x2="373.5" y2="225" stroke="#c0c0c0"/><text x="373" y="230.8" font-size="6.3" letter-spacing="-0.15" fill="#fff">31 Jan 10:00</text><line x1="415.5" y1="222" x2="415.5" y2="225" stroke="#c0c0c0"/><text x="415" y="230.8" font-size="6.3" letter-spacing="-0.15" fill="#fff">3 Feb 02:00</text><line x1="456.5" y1="222" x2="456.5" y2="225" stroke="#c0c0c0"/><text x="456" y="230.8" font-size="6.3" letter-spacing="-0.15" fill="#fff">3 Feb 18:00</text><path d="M435 212.5H480L483 216.5L480 220.5H435Z" fill="#fff"/><rect x="435.5" y="213" width="11" height="7" fill="#b8e4f4"/><text x="437" y="219.3" font-size="6" fill="#000">11</text><path d="M449 213V220M451.5 213V220M454 213V220M456.5 213V220M459 213V220M461.5 213V220" stroke="#444"/><text x="464" y="219.3" font-size="6" fill="#000">21:00</text><rect x="170" y="79" width="9" height="7" fill="#dcdcf0"/><rect x="170" y="79" width="3" height="7" fill="#e87878"/><rect x="175" y="79" width="4" height="7" fill="#8080d8"/><rect x="181" y="79" width="9" height="7" fill="#2a3ab8"/><rect x="185" y="81" width="5" height="5" fill="#d83030"/><rect x="182" y="80" width="4" height="1" fill="#fff"/><text x="194" y="85.3" font-size="6.5" letter-spacing="-0.1" fill="#fff">EURUSD,H1</text></svg><div style="position:absolute;left:170px;top:89px;width:27px;height:14px;background:linear-gradient(#4a4aff,#1010c0);color:#fff;font-size:7.5px;line-height:14px;text-align:center;">SELL</div><div style="position:absolute;left:199px;top:89px;width:62px;height:14px;background:#fff;"></div><div style="position:absolute;left:200px;top:90px;width:11px;height:12px;background:#e1e1e1;border-right:1px solid #c8c8c8"><div style="position:absolute;left:3px;top:5px;width:0;height:0;border-left:3px solid transparent;border-right:3px solid transparent;border-top:3px solid #000"></div></div><div style="position:absolute;left:248px;top:90px;width:12px;height:12px;background:#e1e1e1;border-left:1px solid #c8c8c8"><div style="position:absolute;left:3px;top:4px;width:0;height:0;border-left:3px solid transparent;border-right:3px solid transparent;border-bottom:3px solid #000"></div></div><div style="position:absolute;left:212px;top:89px;width:34px;height:14px;color:#000;font-size:7.5px;line-height:14px;text-align:right;">0.01</div><div style="position:absolute;left:262px;top:89px;width:28px;height:14px;background:linear-gradient(#4a4aff,#1010c0);color:#fff;font-size:7.5px;line-height:14px;text-align:center;">BUY</div><div style="position:absolute;left:170px;top:103px;width:59px;height:23px;background:linear-gradient(#3a3af0,#0a0ab0);color:#fff;"><span style="position:absolute;right:30px;bottom:2px;font-size:7.5px;line-height:9px;font-weight:bold;">1.10</span><span style="position:absolute;left:30px;bottom:0px;font-size:19px;line-height:20px;letter-spacing:-0.5px;">60</span></div><div style="position:absolute;left:231px;top:103px;width:59px;height:23px;background:linear-gradient(#3a3af0,#0a0ab0);color:#fff;"><span style="position:absolute;right:30px;bottom:2px;font-size:7.5px;line-height:9px;font-weight:bold;">1.10</span><span style="position:absolute;left:30px;bottom:0px;font-size:19px;line-height:20px;letter-spacing:-0.5px;">63</span></div><div style="position:absolute;left:530px;top:55px;width:367px;height:185px;background:#f0f0f0;"></div><svg style="position:absolute;left:535px;top:58px" width="11" height="11" viewBox="0 0 13 13"><rect x="0.5" y="0.5" width="9" height="8" fill="#dceeff" stroke="#2d8fe0"/><rect x="0.5" y="0.5" width="9" height="2" fill="#2d8fe0"/><rect x="3.5" y="3.5" width="9" height="9" fill="#fff" stroke="#2d8fe0"/><rect x="3.5" y="3.5" width="9" height="2" fill="#2d8fe0"/><path d="M5 11L7 9L9 10L11 7" stroke="#f06020" fill="none" stroke-width="1.2"/></svg><div style="position:absolute;left:548.5px;top:58.9px;font-size:8.4px;line-height:10px;letter-spacing:-0.2px;color:#6d6d6d;white-space:nowrap;transform:scaleX(0.8);transform-origin:left top;">GBPUSD,H1</div><div style="position:absolute;left:834px;top:65px;width:6px;height:1px;background:#777;"></div><div style="position:absolute;left:856px;top:61px;width:7px;height:7px;border:1px solid #777;"></div><svg style="position:absolute;left:880px;top:60px" width="8" height="8"><path d="M1 1L7 7M7 1L1 7" stroke="#777" stroke-width="1"/></svg><div style="position:absolute;left:534px;top:74px;width:359px;height:162px;background:#000;"></div><svg style="position:absolute;left:534px;top:74px" width="359" height="162" viewBox="534 74 359 162" shape-rendering="crispEdges"><line x1="556.5" y1="76.5" x2="556.5" y2="172.5" stroke="#707070" stroke-dasharray="2,2"/><line x1="576.5" y1="76.5" x2="576.5" y2="172.5" stroke="#707070" stroke-dasharray="2,2"/><line x1="597.5" y1="76.5" x2="597.5" y2="172.5" stroke="#707070" stroke-dasharray="2,2"/><line x1="617.5" y1="76.5" x2="617.5" y2="172.5" stroke="#707070" stroke-dasharray="2,2"/><line x1="638.5" y1="76.5" x2="638.5" y2="172.5" stroke="#707070" stroke-dasharray="2,2"/><line x1="659.5" y1="76.5" x2="659.5" y2="172.5" stroke="#707070" stroke-dasharray="2,2"/><line x1="679.5" y1="76.5" x2="679.5" y2="172.5" stroke="#707070" stroke-dasharray="2,2"/><line x1="700.5" y1="76.5" x2="700.5" y2="172.5" stroke="#707070" stroke-dasharray="2,2"/><line x1="720.5" y1="76.5" x2="720.5" y2="172.5" stroke="#707070" stroke-dasharray="2,2"/><line x1="741.5" y1="76.5" x2="741.5" y2="172.5" stroke="#707070" stroke-dasharray="2,2"/><line x1="762.5" y1="76.5" x2="762.5" y2="172.5" stroke="#707070" stroke-dasharray="2,2"/><line x1="782.5" y1="76.5" x2="782.5" y2="172.5" stroke="#707070" stroke-dasharray="2,2"/><line x1="803.5" y1="76.5" x2="803.5" y2="172.5" stroke="#707070" stroke-dasharray="2,2"/><line x1="823.5" y1="76.5" x2="823.5" y2="172.5" stroke="#707070" stroke-dasharray="2,2"/><line x1="844.5" y1="76.5" x2="844.5" y2="172.5" stroke="#707070" stroke-dasharray="2,2"/><line x1="535.5" y1="87.5" x2="860.5" y2="87.5" stroke="#707070" stroke-dasharray="2,2"/><line x1="535.5" y1="108.5" x2="860.5" y2="108.5" stroke="#707070" stroke-dasharray="2,2"/><line x1="535.5" y1="129.5" x2="860.5" y2="129.5" stroke="#707070" stroke-dasharray="2,2"/><line x1="535.5" y1="151.5" x2="860.5" y2="151.5" stroke="#707070" stroke-dasharray="2,2"/><line x1="556.5" y1="174.5" x2="556.5" y2="222.5" stroke="#707070" stroke-dasharray="2,2"/><line x1="576.5" y1="174.5" x2="576.5" y2="222.5" stroke="#707070" stroke-dasharray="2,2"/><line x1="597.5" y1="174.5" x2="597.5" y2="222.5" stroke="#707070" stroke-dasharray="2,2"/><line x1="617.5" y1="174.5" x2="617.5" y2="222.5" stroke="#707070" stroke-dasharray="2,2"/><line x1="638.5" y1="174.5" x2="638.5" y2="222.5" stroke="#707070" stroke-dasharray="2,2"/><line x1="659.5" y1="174.5" x2="659.5" y2="222.5" stroke="#707070" stroke-dasharray="2,2"/><line x1="679.5" y1="174.5" x2="679.5" y2="222.5" stroke="#707070" stroke-dasharray="2,2"/><line x1="700.5" y1="174.5" x2="700.5" y2="222.5" stroke="#707070" stroke-dasharray="2,2"/><line x1="720.5" y1="174.5" x2="720.5" y2="222.5" stroke="#707070" stroke-dasharray="2,2"/><line x1="741.5" y1="174.5" x2="741.5" y2="222.5" stroke="#707070" stroke-dasharray="2,2"/><line x1="762.5" y1="174.5" x2="762.5" y2="222.5" stroke="#707070" stroke-dasharray="2,2"/><line x1="782.5" y1="174.5" x2="782.5" y2="222.5" stroke="#707070" stroke-dasharray="2,2"/><line x1="803.5" y1="174.5" x2="803.5" y2="222.5" stroke="#707070" stroke-dasharray="2,2"/><line x1="823.5" y1="174.5" x2="823.5" y2="222.5" stroke="#707070" stroke-dasharray="2,2"/><line x1="844.5" y1="174.5" x2="844.5" y2="222.5" stroke="#707070" stroke-dasharray="2,2"/><line x1="535.5" y1="192.5" x2="860.5" y2="192.5" stroke="#707070" stroke-dasharray="2,2"/><line x1="535.5" y1="200.5" x2="860.5" y2="200.5" stroke="#707070" stroke-dasharray="2,2"/><line x1="535.5" y1="208.5" x2="860.5" y2="208.5" stroke="#707070" stroke-dasharray="2,2"/><g shape-rendering="auto"><line x1="536.5" y1="127.0" x2="536.5" y2="133.0" stroke="#00d800"/><rect x="535" y="127.0" width="3" height="6.0" fill="#d8ffd8" stroke="#00c800" stroke-width="1"/><line x1="542.5" y1="127.0" x2="542.5" y2="128.8" stroke="#00d800"/><rect x="541" y="127.5" width="3" height="1.0" fill="#000" stroke="#00c800" stroke-width="1"/><line x1="546.5" y1="126.8" x2="546.5" y2="128.5" stroke="#00d800"/><rect x="545" y="127.3" width="3" height="1.0" fill="#d8ffd8" stroke="#00c800" stroke-width="1"/><line x1="552.5" y1="127.3" x2="552.5" y2="132.0" stroke="#00d800"/><rect x="551" y="127.8" width="3" height="3.7" fill="#d8ffd8" stroke="#00c800" stroke-width="1"/><line x1="556.5" y1="128.0" x2="556.5" y2="132.0" stroke="#00d800"/><rect x="555" y="129.5" width="3" height="1.0" fill="#000" stroke="#00c800" stroke-width="1"/><line x1="562.5" y1="127.8" x2="562.5" y2="132.5" stroke="#00d800"/><rect x="561" y="128.3" width="3" height="3.7" fill="#d8ffd8" stroke="#00c800" stroke-width="1"/><line x1="566.5" y1="127.0" x2="566.5" y2="128.8" stroke="#00d800"/><rect x="565" y="127.5" width="3" height="1.0" fill="#d8ffd8" stroke="#00c800" stroke-width="1"/><line x1="572.5" y1="127.5" x2="572.5" y2="129.5" stroke="#00d800"/><rect x="571" y="128.0" width="3" height="1.0" fill="#000" stroke="#00c800" stroke-width="1"/><line x1="576.5" y1="128.5" x2="576.5" y2="131.5" stroke="#00d800"/><rect x="575" y="129.0" width="3" height="2.0" fill="#d8ffd8" stroke="#00c800" stroke-width="1"/><line x1="582.5" y1="127.5" x2="582.5" y2="131.0" stroke="#00d800"/><rect x="581" y="127.5" width="3" height="3.5" fill="#d8ffd8" stroke="#00c800" stroke-width="1"/><line x1="588.5" y1="127.8" x2="588.5" y2="128.6" stroke="#00d800"/><rect x="587" y="127.8" width="3" height="1.0" fill="#000" stroke="#00c800" stroke-width="1"/><line x1="598.5" y1="126.8" x2="598.5" y2="128.5" stroke="#00d800"/><rect x="597" y="127.3" width="3" height="1.0" fill="#d8ffd8" stroke="#00c800" stroke-width="1"/><line x1="603.5" y1="126.8" x2="603.5" y2="128.5" stroke="#00d800"/><rect x="602" y="127.3" width="3" height="1.0" fill="#d8ffd8" stroke="#00c800" stroke-width="1"/><line x1="609.5" y1="127.5" x2="609.5" y2="128.2" stroke="#00d800"/><rect x="608" y="127.5" width="3" height="1.0" fill="#000" stroke="#00c800" stroke-width="1"/><line x1="614.5" y1="127.3" x2="614.5" y2="128.0" stroke="#00d800"/><rect x="613" y="127.3" width="3" height="1.0" fill="#d8ffd8" stroke="#00c800" stroke-width="1"/><line x1="661.5" y1="95.8" x2="661.5" y2="108.7" stroke="#00d800"/><rect x="660" y="95.8" width="3" height="12.9" fill="#d8ffd8" stroke="#00c800" stroke-width="1"/><line x1="665.5" y1="91.4" x2="665.5" y2="98.5" stroke="#00d800"/><rect x="664" y="92.4" width="3" height="5.1" fill="#000" stroke="#00c800" stroke-width="1"/><line x1="670.5" y1="90.0" x2="670.5" y2="95.0" stroke="#00d800"/><rect x="669" y="92.0" width="3" height="1.0" fill="#d8ffd8" stroke="#00c800" stroke-width="1"/><line x1="675.5" y1="90.5" x2="675.5" y2="96.8" stroke="#00d800"/><rect x="674" y="91.5" width="3" height="4.3" fill="#d8ffd8" stroke="#00c800" stroke-width="1"/><line x1="680.5" y1="88.8" x2="680.5" y2="96.8" stroke="#00d800"/><rect x="679" y="89.8" width="3" height="6.0" fill="#000" stroke="#00c800" stroke-width="1"/><line x1="685.5" y1="86.5" x2="685.5" y2="90.5" stroke="#00d800"/><rect x="684" y="87.5" width="3" height="2.0" fill="#d8ffd8" stroke="#00c800" stroke-width="1"/><line x1="690.5" y1="86.5" x2="690.5" y2="90.0" stroke="#00d800"/><rect x="689" y="87.5" width="3" height="1.5" fill="#d8ffd8" stroke="#00c800" stroke-width="1"/><line x1="695.5" y1="96.0" x2="695.5" y2="99.0" stroke="#00d800"/><rect x="694" y="97.0" width="3" height="1.0" fill="#000" stroke="#00c800" stroke-width="1"/><line x1="701.5" y1="95.0" x2="701.5" y2="100.0" stroke="#00d800"/><rect x="700" y="97.0" width="3" height="1.0" fill="#d8ffd8" stroke="#00c800" stroke-width="1"/><line x1="706.5" y1="96.5" x2="706.5" y2="99.5" stroke="#00d800"/><rect x="705" y="97.5" width="3" height="1.0" fill="#d8ffd8" stroke="#00c800" stroke-width="1"/><line x1="711.5" y1="96.0" x2="711.5" y2="101.0" stroke="#00d800"/><rect x="710" y="98.0" width="3" height="1.0" fill="#000" stroke="#00c800" stroke-width="1"/><line x1="716.5" y1="97.5" x2="716.5" y2="100.5" stroke="#00d800"/><rect x="715" y="98.5" width="3" height="1.0" fill="#d8ffd8" stroke="#00c800" stroke-width="1"/><line x1="721.5" y1="97.4" x2="721.5" y2="105.4" stroke="#00d800"/><rect x="720" y="98.4" width="3" height="6.0" fill="#d8ffd8" stroke="#00c800" stroke-width="1"/><line x1="726.5" y1="100.8" x2="726.5" y2="106.3" stroke="#00d800"/><rect x="725" y="101.8" width="3" height="3.5" fill="#000" stroke="#00c800" stroke-width="1"/><line x1="732.5" y1="101.3" x2="732.5" y2="104.2" stroke="#00d800"/><rect x="731" y="102.3" width="3" height="1.0" fill="#d8ffd8" stroke="#00c800" stroke-width="1"/><line x1="737.5" y1="101.7" x2="737.5" y2="107.1" stroke="#00d800"/><rect x="736" y="102.7" width="3" height="3.4" fill="#d8ffd8" stroke="#00c800" stroke-width="1"/><line x1="742.5" y1="105.1" x2="742.5" y2="111.4" stroke="#00d800"/><rect x="741" y="106.1" width="3" height="4.3" fill="#000" stroke="#00c800" stroke-width="1"/><line x1="747.5" y1="109.4" x2="747.5" y2="121.8" stroke="#00d800"/><rect x="746" y="110.4" width="3" height="10.4" fill="#d8ffd8" stroke="#00c800" stroke-width="1"/><line x1="752.5" y1="118.0" x2="752.5" y2="133.8" stroke="#00d800"/><rect x="751" y="119.0" width="3" height="13.8" fill="#d8ffd8" stroke="#00c800" stroke-width="1"/><line x1="757.5" y1="131.0" x2="757.5" y2="142.4" stroke="#00d800"/><rect x="756" y="132.0" width="3" height="9.4" fill="#000" stroke="#00c800" stroke-width="1"/><line x1="762.5" y1="138.0" x2="762.5" y2="145.0" stroke="#00d800"/><rect x="761" y="141.0" width="3" height="1.0" fill="#d8ffd8" stroke="#00c800" stroke-width="1"/><line x1="768.5" y1="138.2" x2="768.5" y2="143.2" stroke="#00d800"/><rect x="767" y="140.2" width="3" height="1.0" fill="#d8ffd8" stroke="#00c800" stroke-width="1"/><line x1="773.5" y1="139.0" x2="773.5" y2="144.0" stroke="#00d800"/><rect x="772" y="141.0" width="3" height="1.0" fill="#000" stroke="#00c800" stroke-width="1"/><line x1="778.5" y1="139.7" x2="778.5" y2="151.8" stroke="#00d800"/><rect x="777" y="140.7" width="3" height="10.1" fill="#d8ffd8" stroke="#00c800" stroke-width="1"/><line x1="784.5" y1="149.8" x2="784.5" y2="158.0" stroke="#00d800"/><rect x="783" y="150.8" width="3" height="6.2" fill="#d8ffd8" stroke="#00c800" stroke-width="1"/><line x1="788.5" y1="156.0" x2="788.5" y2="161.0" stroke="#00d800"/><rect x="787" y="158.0" width="3" height="1.0" fill="#000" stroke="#00c800" stroke-width="1"/><line x1="793.5" y1="159.0" x2="793.5" y2="162.0" stroke="#00d800"/><rect x="792" y="160.0" width="3" height="1.0" fill="#d8ffd8" stroke="#00c800" stroke-width="1"/><line x1="798.5" y1="159.0" x2="798.5" y2="162.0" stroke="#00d800"/><rect x="797" y="160.0" width="3" height="1.0" fill="#d8ffd8" stroke="#00c800" stroke-width="1"/><line x1="803.5" y1="159.5" x2="803.5" y2="162.5" stroke="#00d800"/><rect x="802" y="160.5" width="3" height="1.0" fill="#000" stroke="#00c800" stroke-width="1"/><line x1="808.5" y1="160.0" x2="808.5" y2="163.0" stroke="#00d800"/><rect x="807" y="161.0" width="3" height="1.0" fill="#d8ffd8" stroke="#00c800" stroke-width="1"/><line x1="813.5" y1="161.0" x2="813.5" y2="164.0" stroke="#00d800"/><rect x="812" y="162.0" width="3" height="1.0" fill="#d8ffd8" stroke="#00c800" stroke-width="1"/><line x1="818.5" y1="161.5" x2="818.5" y2="164.5" stroke="#00d800"/><rect x="817" y="162.5" width="3" height="1.0" fill="#000" stroke="#00c800" stroke-width="1"/><line x1="825.5" y1="160.5" x2="825.5" y2="165.5" stroke="#00d800"/><rect x="824" y="162.5" width="3" height="1.0" fill="#d8ffd8" stroke="#00c800" stroke-width="1"/><line x1="830.5" y1="162.0" x2="830.5" y2="167.0" stroke="#00d800"/><rect x="829" y="164.0" width="3" height="1.0" fill="#d8ffd8" stroke="#00c800" stroke-width="1"/><line x1="835.5" y1="162.0" x2="835.5" y2="167.0" stroke="#00d800"/><rect x="834" y="164.0" width="3" height="1.0" fill="#000" stroke="#00c800" stroke-width="1"/><line x1="840.5" y1="162.0" x2="840.5" y2="167.0" stroke="#00d800"/><rect x="839" y="164.0" width="3" height="1.0" fill="#d8ffd8" stroke="#00c800" stroke-width="1"/><line x1="845.5" y1="159.0" x2="845.5" y2="164.0" stroke="#00d800"/><rect x="844" y="161.0" width="3" height="1.0" fill="#d8ffd8" stroke="#00c800" stroke-width="1"/><line x1="851.5" y1="157.4" x2="851.5" y2="162.5" stroke="#00d800"/><rect x="850" y="158.4" width="3" height="3.1" fill="#000" stroke="#00c800" stroke-width="1"/><line x1="856.5" y1="156.5" x2="856.5" y2="159.5" stroke="#00d800"/><rect x="855" y="157.5" width="3" height="1.0" fill="#d8ffd8" stroke="#00c800" stroke-width="1"/><polyline points="536.0,191.0 543.6,193.7 554.0,196.5 565.3,197.9 575.7,198.0 581.7,195.6 586.4,193.5 591.5,195.4 597.0,197.4 604.1,196.7 610.8,193.5 614.9,185.5 618.0,178.0 620.8,175.9 624.0,178.0 628.7,187.5 633.7,196.5 637.7,195.8 642.8,192.0 651.7,187.8 661.0,185.0 667.3,187.7 673.3,191.3 681.2,191.7 688.5,192.0 692.1,194.5 696.0,197.4 704.5,199.1 713.0,201.0 716.1,204.0 721.0,207.8 735.1,213.9 752.0,218.0 766.4,214.3 782.0,208.7 802.8,205.8 822.0,204.0 832.5,204.9 840.0,204.0 848.9,194.5 855.5,185" fill="none" stroke="#2aa6a6" stroke-width="1"/></g><line x1="535.5" y1="155.5" x2="860.5" y2="155.5" stroke="#00a800" stroke-dasharray="5,5"/><line x1="535.5" y1="157.5" x2="860.5" y2="157.5" stroke="#8a9bab"/><text x="537" y="154" font-size="6.3" letter-spacing="-0.15" fill="#ddd">#11392292 buy 3.00</text><rect x="535.5" y="76.5" width="325.0" height="96.0" fill="none" stroke="#c8c8c8"/><line x1="535.5" y1="173.5" x2="860.5" y2="173.5" stroke="#c8c8c8" stroke-width="2"/><rect x="535.5" y="174.5" width="325.0" height="48.0" fill="none" stroke="#c8c8c8"/><text x="537" y="182" font-size="6.3" letter-spacing="-0.15" fill="#ddd">CCI(14) 201.22</text><line x1="860" y1="87.5" x2="863" y2="87.5" stroke="#c0c0c0"/><text x="864" y="89.6" font-size="6.3" letter-spacing="-0.15" fill="#fff">1.3210</text><line x1="860" y1="108.5" x2="863" y2="108.5" stroke="#c0c0c0"/><text x="864" y="110.6" font-size="6.3" letter-spacing="-0.15" fill="#fff">1.3150</text><line x1="860" y1="129.5" x2="863" y2="129.5" stroke="#c0c0c0"/><text x="864" y="131.6" font-size="6.3" letter-spacing="-0.15" fill="#fff">1.3090</text><line x1="860" y1="151.5" x2="863" y2="151.5" stroke="#c0c0c0"/><text x="864" y="153.6" font-size="6.3" letter-spacing="-0.15" fill="#fff">1.3030</text><rect x="862" y="153.5" width="22" height="8" fill="#8fa5bb"/><text x="864" y="159.6" font-size="6.3" letter-spacing="-0.15" fill="#1a1a1a">1.3014</text><line x1="860" y1="177.5" x2="863" y2="177.5" stroke="#c0c0c0"/><text x="864" y="179.6" font-size="6.3" letter-spacing="-0.15" fill="#fff">344.00</text><line x1="860" y1="192.5" x2="863" y2="192.5" stroke="#c0c0c0"/><text x="864" y="194.6" font-size="6.3" letter-spacing="-0.15" fill="#fff">100.00</text><line x1="860" y1="200.0" x2="863" y2="200.0" stroke="#c0c0c0"/><text x="864" y="202.1" font-size="6.3" letter-spacing="-0.15" fill="#fff">0.00</text><line x1="860" y1="208.5" x2="863" y2="208.5" stroke="#c0c0c0"/><text x="864" y="210.6" font-size="6.3" letter-spacing="-0.15" fill="#fff">-100.00</text><line x1="860" y1="220.0" x2="863" y2="220.0" stroke="#c0c0c0"/><text x="864" y="222.1" font-size="6.3" letter-spacing="-0.15" fill="#fff">-294.07</text><line x1="535.5" y1="222.5" x2="535.5" y2="225.5" stroke="#c0c0c0"/><text x="535" y="230.8" font-size="6.3" letter-spacing="-0.15" fill="#fff">30 Jan 2020</text><line x1="576.5" y1="222.5" x2="576.5" y2="225.5" stroke="#c0c0c0"/><text x="576" y="230.8" font-size="6.3" letter-spacing="-0.15" fill="#fff">31 Jan 01:00</text><line x1="617.5" y1="222.5" x2="617.5" y2="225.5" stroke="#c0c0c0"/><text x="617" y="230.8" font-size="6.3" letter-spacing="-0.15" fill="#fff">31 Jan 09:00</text><line x1="658.5" y1="222.5" x2="658.5" y2="225.5" stroke="#c0c0c0"/><text x="658" y="230.8" font-size="6.3" letter-spacing="-0.15" fill="#fff">31 Jan 17:00</text><line x1="699.5" y1="222.5" x2="699.5" y2="225.5" stroke="#c0c0c0"/><text x="699" y="230.8" font-size="6.3" letter-spacing="-0.15" fill="#fff">3 Feb 01:00</text><line x1="740.5" y1="222.5" x2="740.5" y2="225.5" stroke="#c0c0c0"/><text x="740" y="230.8" font-size="6.3" letter-spacing="-0.15" fill="#fff">3 Feb 09:00</text><line x1="781.5" y1="222.5" x2="781.5" y2="225.5" stroke="#c0c0c0"/><text x="781" y="230.8" font-size="6.3" letter-spacing="-0.15" fill="#fff">3 Feb 17:00</text><line x1="822.5" y1="222.5" x2="822.5" y2="225.5" stroke="#c0c0c0"/><text x="822" y="230.8" font-size="6.3" letter-spacing="-0.15" fill="#fff">4 Feb 01:00</text><path d="M752 162H767L770 166L767 170H752Z" fill="#d8eef8"/><text x="753" y="168.5" font-size="6" fill="#000">11:30</text><path d="M778 162H817L820 166L817 170H778Z" fill="#fff"/><text x="779" y="168.5" font-size="6" fill="#000">1 1 18:30 21:00</text><path d="M856 156L859 159L856 162L853 159Z" fill="#5a8ad8"/><rect x="538" y="79" width="9" height="7" fill="#dcdcf0"/><rect x="538" y="79" width="3" height="7" fill="#e87878"/><rect x="543" y="79" width="4" height="7" fill="#8080d8"/><rect x="549" y="79" width="9" height="7" fill="#2a3ab8"/><rect x="553" y="81" width="5" height="5" fill="#d83030"/><rect x="550" y="80" width="4" height="1" fill="#fff"/><text x="562" y="85.3" font-size="6.5" letter-spacing="-0.1" fill="#fff">GBPUSD,H1</text></svg><div style="position:absolute;left:538px;top:89px;width:27px;height:14px;background:linear-gradient(#f03a3a,#b01010);color:#fff;font-size:7.5px;line-height:14px;text-align:center;">SELL</div><div style="position:absolute;left:567px;top:89px;width:62px;height:14px;background:#fff;"></div><div style="position:absolute;left:568px;top:90px;width:11px;height:12px;background:#e1e1e1;border-right:1px solid #c8c8c8"><div style="position:absolute;left:3px;top:5px;width:0;height:0;border-left:3px solid transparent;border-right:3px solid transparent;border-top:3px solid #000"></div></div><div style="position:absolute;left:616px;top:90px;width:12px;height:12px;background:#e1e1e1;border-left:1px solid #c8c8c8"><div style="position:absolute;left:3px;top:4px;width:0;height:0;border-left:3px solid transparent;border-right:3px solid transparent;border-bottom:3px solid #000"></div></div><div style="position:absolute;left:580px;top:89px;width:34px;height:14px;color:#000;font-size:7.5px;line-height:14px;text-align:right;">3.00</div><div style="position:absolute;left:630px;top:89px;width:28px;height:14px;background:linear-gradient(#f03a3a,#b01010);color:#fff;font-size:7.5px;line-height:14px;text-align:center;">BUY</div><div style="position:absolute;left:538px;top:103px;width:59px;height:23px;background:linear-gradient(#e83030,#a80c0c);color:#fff;"><span style="position:absolute;right:30px;bottom:2px;font-size:7.5px;line-height:9px;font-weight:bold;">1.30</span><span style="position:absolute;left:30px;bottom:0px;font-size:19px;line-height:20px;letter-spacing:-0.5px;">14</span></div><div style="position:absolute;left:599px;top:103px;width:59px;height:23px;background:linear-gradient(#e83030,#a80c0c);color:#fff;"><span style="position:absolute;right:30px;bottom:2px;font-size:7.5px;line-height:9px;font-weight:bold;">1.30</span><span style="position:absolute;left:30px;bottom:0px;font-size:19px;line-height:20px;letter-spacing:-0.5px;">17</span></div><div style="position:absolute;left:161px;top:242px;width:367px;height:184px;background:#ffffff;"></div><svg style="position:absolute;left:166px;top:245px" width="11" height="11" viewBox="0 0 13 13"><rect x="0.5" y="0.5" width="9" height="8" fill="#dceeff" stroke="#2d8fe0"/><rect x="0.5" y="0.5" width="9" height="2" fill="#2d8fe0"/><rect x="3.5" y="3.5" width="9" height="9" fill="#fff" stroke="#2d8fe0"/><rect x="3.5" y="3.5" width="9" height="2" fill="#2d8fe0"/><path d="M5 11L7 9L9 10L11 7" stroke="#f06020" fill="none" stroke-width="1.2"/></svg><div style="position:absolute;left:179.5px;top:245.9px;font-size:8.4px;line-height:10px;letter-spacing:-0.2px;color:#222;white-space:nowrap;transform:scaleX(0.8);transform-origin:left top;">USDCHF,H1</div><div style="position:absolute;left:465px;top:252px;width:6px;height:2px;background:#222;"></div><div style="position:absolute;left:487px;top:248px;width:7px;height:7px;border:1px solid #222;"></div><svg style="position:absolute;left:511px;top:247px" width="8" height="8"><path d="M1 1L7 7M7 1L1 7" stroke="#222" stroke-width="1.4"/></svg><div style="position:absolute;left:166px;top:261px;width:358px;height:162px;background:#000;"></div><svg style="position:absolute;left:166px;top:261px" width="358" height="162" viewBox="166 261 358 162" shape-rendering="crispEdges"><line x1="188.5" y1="263.5" x2="188.5" y2="410" stroke="#707070" stroke-dasharray="2,2"/><line x1="208.5" y1="263.5" x2="208.5" y2="410" stroke="#707070" stroke-dasharray="2,2"/><line x1="229.5" y1="263.5" x2="229.5" y2="410" stroke="#707070" stroke-dasharray="2,2"/><line x1="249.5" y1="263.5" x2="249.5" y2="410" stroke="#707070" stroke-dasharray="2,2"/><line x1="270.5" y1="263.5" x2="270.5" y2="410" stroke="#707070" stroke-dasharray="2,2"/><line x1="291.5" y1="263.5" x2="291.5" y2="410" stroke="#707070" stroke-dasharray="2,2"/><line x1="311.5" y1="263.5" x2="311.5" y2="410" stroke="#707070" stroke-dasharray="2,2"/><line x1="332.5" y1="263.5" x2="332.5" y2="410" stroke="#707070" stroke-dasharray="2,2"/><line x1="352.5" y1="263.5" x2="352.5" y2="410" stroke="#707070" stroke-dasharray="2,2"/><line x1="373.5" y1="263.5" x2="373.5" y2="410" stroke="#707070" stroke-dasharray="2,2"/><line x1="394.5" y1="263.5" x2="394.5" y2="410" stroke="#707070" stroke-dasharray="2,2"/><line x1="414.5" y1="263.5" x2="414.5" y2="410" stroke="#707070" stroke-dasharray="2,2"/><line x1="435.5" y1="263.5" x2="435.5" y2="410" stroke="#707070" stroke-dasharray="2,2"/><line x1="456.5" y1="263.5" x2="456.5" y2="410" stroke="#707070" stroke-dasharray="2,2"/><line x1="476.5" y1="263.5" x2="476.5" y2="410" stroke="#707070" stroke-dasharray="2,2"/><line x1="167.5" y1="287.5" x2="493.5" y2="287.5" stroke="#707070" stroke-dasharray="2,2"/><line x1="167.5" y1="311.5" x2="493.5" y2="311.5" stroke="#707070" stroke-dasharray="2,2"/><line x1="167.5" y1="336.5" x2="493.5" y2="336.5" stroke="#707070" stroke-dasharray="2,2"/><line x1="167.5" y1="360.5" x2="493.5" y2="360.5" stroke="#707070" stroke-dasharray="2,2"/><line x1="167.5" y1="385.5" x2="493.5" y2="385.5" stroke="#707070" stroke-dasharray="2,2"/><g shape-rendering="auto"><path d="M169.5 342.0V356.6M168 356.5H169M170 353.5H171" stroke="#22c022" fill="none"/><path d="M172.5 355.2V363.1M171 363.5H172M173 360.5H174" stroke="#22c022" fill="none"/><path d="M174.5 361.0V369.7M173 363.5H174M175 366.5H176" stroke="#22c022" fill="none"/><path d="M177.5 361.4V369.2M176 364.5H177M178 369.5H179" stroke="#22c022" fill="none"/><path d="M179.5 360.2V369.4M178 361.5H179M180 366.5H181" stroke="#22c022" fill="none"/><path d="M182.5 362.0V369.7M181 364.5H182M183 364.5H184" stroke="#22c022" fill="none"/><path d="M184.5 366.9V382.7M183 382.5H184M185 375.5H186" stroke="#22c022" fill="none"/><path d="M187.5 369.5V379.0M186 376.5H187M188 379.5H189" stroke="#22c022" fill="none"/><path d="M189.5 376.8V387.3M188 379.5H189M190 378.5H191" stroke="#22c022" fill="none"/><path d="M192.5 375.2V385.6M191 375.5H192M193 382.5H194" stroke="#22c022" fill="none"/><path d="M194.5 376.9V387.5M193 382.5H194M195 380.5H196" stroke="#22c022" fill="none"/><path d="M197.5 379.1V393.3M196 393.5H197M198 379.5H199" stroke="#22c022" fill="none"/><path d="M199.5 379.5V395.0M198 392.5H199M200 385.5H201" stroke="#22c022" fill="none"/><path d="M202.5 380.4V388.2M201 382.5H202M203 388.5H204" stroke="#22c022" fill="none"/><path d="M204.5 371.3V386.0M203 385.5H204M205 376.5H206" stroke="#22c022" fill="none"/><path d="M207.5 373.2V385.7M206 375.5H207M208 383.5H209" stroke="#22c022" fill="none"/><path d="M209.5 376.7V392.3M208 391.5H209M210 378.5H211" stroke="#22c022" fill="none"/><path d="M212.5 371.3V384.6M211 376.5H212M213 384.5H214" stroke="#22c022" fill="none"/><path d="M215.5 375.1V385.7M214 377.5H215M216 376.5H217" stroke="#22c022" fill="none"/><path d="M217.5 367.7V381.8M216 370.5H217M218 368.5H219" stroke="#22c022" fill="none"/><path d="M220.5 373.4V386.0M219 376.5H220M221 381.5H222" stroke="#22c022" fill="none"/><path d="M222.5 371.1V383.0M221 372.5H222M223 382.5H224" stroke="#22c022" fill="none"/><path d="M225.5 363.4V375.6M224 365.5H225M226 372.5H227" stroke="#22c022" fill="none"/><path d="M227.5 368.9V382.4M226 370.5H227M228 375.5H229" stroke="#22c022" fill="none"/><path d="M230.5 370.2V385.8M229 377.5H230M231 386.5H232" stroke="#22c022" fill="none"/><path d="M232.5 378.0V394.8M231 386.5H232M233 390.5H234" stroke="#22c022" fill="none"/><path d="M235.5 384.4V394.7M234 386.5H235M236 388.5H237" stroke="#22c022" fill="none"/><path d="M237.5 378.5V395.1M236 387.5H237M238 384.5H239" stroke="#22c022" fill="none"/><path d="M240.5 360.4V370.6M239 369.5H240M241 364.5H242" stroke="#22c022" fill="none"/><path d="M242.5 359.0V373.9M241 369.5H242M243 370.5H244" stroke="#22c022" fill="none"/><path d="M245.5 357.0V371.2M244 364.5H245M246 368.5H247" stroke="#22c022" fill="none"/><path d="M247.5 357.1V367.5M246 364.5H247M248 363.5H249" stroke="#22c022" fill="none"/><path d="M250.5 355.0V367.8M249 364.5H250M251 361.5H252" stroke="#22c022" fill="none"/><path d="M252.5 358.6V372.3M251 363.5H252M253 367.5H254" stroke="#22c022" fill="none"/><path d="M255.5 361.4V376.8M254 374.5H255M256 375.5H257" stroke="#22c022" fill="none"/><path d="M258.5 357.2V374.0M257 366.5H258M259 366.5H260" stroke="#22c022" fill="none"/><path d="M260.5 355.0V370.4M259 362.5H260M261 366.5H262" stroke="#22c022" fill="none"/><path d="M263.5 361.1V375.5M262 372.5H263M264 369.5H265" stroke="#22c022" fill="none"/><path d="M265.5 359.7V371.3M264 369.5H265M266 367.5H267" stroke="#22c022" fill="none"/><path d="M268.5 362.4V370.3M267 366.5H268M269 368.5H270" stroke="#22c022" fill="none"/><path d="M270.5 354.8V368.9M269 355.5H270M271 361.5H272" stroke="#22c022" fill="none"/><path d="M273.5 358.6V366.8M272 361.5H273M274 360.5H275" stroke="#22c022" fill="none"/><path d="M275.5 356.8V364.8M274 360.5H275M276 362.5H277" stroke="#22c022" fill="none"/><path d="M278.5 354.4V364.3M277 354.5H278M279 358.5H280" stroke="#22c022" fill="none"/><path d="M280.5 352.5V364.0M279 362.5H280M281 357.5H282" stroke="#22c022" fill="none"/><path d="M283.5 351.3V364.7M282 359.5H283M284 356.5H285" stroke="#22c022" fill="none"/><path d="M285.5 347.5V364.2M284 355.5H285M286 361.5H287" stroke="#22c022" fill="none"/><path d="M288.5 351.7V362.8M287 358.5H288M289 358.5H290" stroke="#22c022" fill="none"/><path d="M290.5 347.0V363.7M289 353.5H290M291 362.5H292" stroke="#22c022" fill="none"/><path d="M293.5 343.5V352.2M292 349.5H293M294 345.5H295" stroke="#22c022" fill="none"/><path d="M295.5 343.6V359.6M294 350.5H295M296 347.5H297" stroke="#22c022" fill="none"/><path d="M298.5 347.0V363.7M297 363.5H298M299 362.5H300" stroke="#22c022" fill="none"/><path d="M301.5 350.0V360.0M300 355.5H301M302 354.5H303" stroke="#22c022" fill="none"/><path d="M303.5 340.7V357.6M302 346.5H303M304 349.5H305" stroke="#22c022" fill="none"/><path d="M306.5 340.2V353.7M305 344.5H306M307 351.5H308" stroke="#22c022" fill="none"/><path d="M308.5 348.4V356.1M307 350.5H308M309 356.5H310" stroke="#22c022" fill="none"/><path d="M311.5 347.3V357.2M310 349.5H311M312 357.5H313" stroke="#22c022" fill="none"/><path d="M313.5 340.7V354.0M312 349.5H313M314 349.5H315" stroke="#22c022" fill="none"/><path d="M316.5 346.3V355.0M315 349.5H316M317 351.5H318" stroke="#22c022" fill="none"/><path d="M318.5 347.1V357.6M317 352.5H318M319 351.5H320" stroke="#22c022" fill="none"/><path d="M321.5 354.1V367.2M320 357.5H321M322 360.5H323" stroke="#22c022" fill="none"/><path d="M323.5 354.4V370.3M322 355.5H323M324 367.5H325" stroke="#22c022" fill="none"/><path d="M326.5 350.7V363.7M325 359.5H326M327 357.5H328" stroke="#22c022" fill="none"/><path d="M328.5 353.1V364.4M327 363.5H328M329 355.5H330" stroke="#22c022" fill="none"/><path d="M331.5 347.0V362.4M330 360.5H331M332 358.5H333" stroke="#22c022" fill="none"/><path d="M333.5 345.0V355.3M332 354.5H333M334 346.5H335" stroke="#22c022" fill="none"/><path d="M336.5 344.4V357.2M335 349.5H336M337 346.5H338" stroke="#22c022" fill="none"/><path d="M339.5 345.3V360.5M338 349.5H339M340 358.5H341" stroke="#22c022" fill="none"/><path d="M341.5 346.5V360.4M340 357.5H341M342 360.5H343" stroke="#22c022" fill="none"/><path d="M344.5 346.4V360.6M343 358.5H344M345 349.5H346" stroke="#22c022" fill="none"/><path d="M346.5 338.0V354.5M345 340.5H346M347 343.5H348" stroke="#22c022" fill="none"/><path d="M349.5 347.5V356.5M348 351.5H349M350 349.5H351" stroke="#22c022" fill="none"/><path d="M351.5 361.1V369.1M350 364.5H351M352 362.5H353" stroke="#22c022" fill="none"/><path d="M354.5 354.3V367.3M353 366.5H354M355 356.5H356" stroke="#22c022" fill="none"/><path d="M356.5 358.9V369.5M355 364.5H356M357 369.5H358" stroke="#22c022" fill="none"/><path d="M359.5 363.1V371.3M358 364.5H359M360 368.5H361" stroke="#22c022" fill="none"/><path d="M361.5 361.7V377.9M360 372.5H361M362 366.5H363" stroke="#22c022" fill="none"/><path d="M364.5 361.6V371.6M363 367.5H364M365 363.5H366" stroke="#22c022" fill="none"/><path d="M366.5 356.4V367.6M365 358.5H366M367 364.5H368" stroke="#22c022" fill="none"/><path d="M369.5 357.3V365.7M368 358.5H369M370 358.5H371" stroke="#22c022" fill="none"/><path d="M371.5 355.0V364.9M370 360.5H371M372 358.5H373" stroke="#22c022" fill="none"/><path d="M374.5 360.1V368.0M373 361.5H374M375 361.5H376" stroke="#22c022" fill="none"/><path d="M376.5 362.1V376.1M375 364.5H376M377 376.5H378" stroke="#22c022" fill="none"/><path d="M379.5 359.7V375.0M378 369.5H379M380 365.5H381" stroke="#22c022" fill="none"/><path d="M382.5 356.5V367.3M381 360.5H382M383 361.5H384" stroke="#22c022" fill="none"/><path d="M384.5 351.9V367.3M383 364.5H384M385 359.5H386" stroke="#22c022" fill="none"/><path d="M387.5 355.4V367.9M386 363.5H387M388 365.5H389" stroke="#22c022" fill="none"/><path d="M389.5 354.8V363.4M388 357.5H389M390 355.5H391" stroke="#22c022" fill="none"/><path d="M392.5 351.7V363.8M391 352.5H392M393 357.5H394" stroke="#22c022" fill="none"/><path d="M394.5 351.2V364.7M393 358.5H394M395 353.5H396" stroke="#22c022" fill="none"/><path d="M397.5 348.8V357.9M396 352.5H397M398 357.5H399" stroke="#22c022" fill="none"/><path d="M399.5 347.4V357.5M398 349.5H399M400 350.5H401" stroke="#22c022" fill="none"/><path d="M402.5 346.5V358.7M401 358.5H402M403 351.5H404" stroke="#22c022" fill="none"/><path d="M404.5 345.3V359.4M403 352.5H404M405 359.5H406" stroke="#22c022" fill="none"/><path d="M407.5 353.0V366.9M406 362.5H407M408 363.5H409" stroke="#22c022" fill="none"/><path d="M409.5 366.2V375.7M408 368.5H409M410 367.5H411" stroke="#22c022" fill="none"/><path d="M412.5 363.3V380.1M411 369.5H412M413 371.5H414" stroke="#22c022" fill="none"/><path d="M414.5 352.1V366.6M413 354.5H414M415 356.5H416" stroke="#22c022" fill="none"/><path d="M417.5 336.4V352.8M416 343.5H417M418 352.5H419" stroke="#22c022" fill="none"/><path d="M419.5 326.4V334.6M418 330.5H419M420 327.5H421" stroke="#22c022" fill="none"/><path d="M422.5 318.2V335.1M421 324.5H422M423 320.5H424" stroke="#22c022" fill="none"/><path d="M425.5 310.8V326.8M424 326.5H425M426 312.5H427" stroke="#22c022" fill="none"/><path d="M427.5 311.6V319.7M426 312.5H427M428 314.5H429" stroke="#22c022" fill="none"/><path d="M430.5 311.5V322.0M429 312.5H430M431 322.5H432" stroke="#22c022" fill="none"/><path d="M432.5 308.9V321.3M431 315.5H432M433 310.5H434" stroke="#22c022" fill="none"/><path d="M435.5 313.7V322.4M434 322.5H435M436 319.5H437" stroke="#22c022" fill="none"/><path d="M437.5 319.9V329.5M436 325.5H437M438 325.5H439" stroke="#22c022" fill="none"/><path d="M440.5 317.8V329.0M439 326.5H440M441 328.5H442" stroke="#22c022" fill="none"/><path d="M442.5 316.0V327.9M441 319.5H442M443 317.5H444" stroke="#22c022" fill="none"/><path d="M445.5 317.8V326.2M444 325.5H445M446 320.5H447" stroke="#22c022" fill="none"/><path d="M447.5 317.8V326.2M446 319.5H447M448 321.5H449" stroke="#22c022" fill="none"/><path d="M450.5 315.7V325.7M449 323.5H450M451 316.5H452" stroke="#22c022" fill="none"/><path d="M452.5 307.0V317.4M451 308.5H452M453 311.5H454" stroke="#22c022" fill="none"/><path d="M455.5 302.9V317.6M454 316.5H455M456 313.5H457" stroke="#22c022" fill="none"/><path d="M457.5 305.6V318.6M456 316.5H457M458 314.5H459" stroke="#22c022" fill="none"/><path d="M460.5 303.9V318.3M459 308.5H460M461 316.5H462" stroke="#22c022" fill="none"/><path d="M462.5 307.4V316.3M461 309.5H462M463 310.5H464" stroke="#22c022" fill="none"/><path d="M465.5 310.0V320.3M464 318.5H465M466 316.5H467" stroke="#22c022" fill="none"/><path d="M468.5 308.8V316.9M467 312.5H468M469 316.5H470" stroke="#22c022" fill="none"/><path d="M470.5 307.1V320.5M469 313.5H470M471 312.5H472" stroke="#22c022" fill="none"/><path d="M473.5 301.8V309.5M472 308.5H473M474 307.5H475" stroke="#22c022" fill="none"/><path d="M475.5 295.8V308.4M474 305.5H475M476 301.5H477" stroke="#22c022" fill="none"/><path d="M478.5 295.5V310.6M477 300.5H478M479 309.5H480" stroke="#22c022" fill="none"/><path d="M480.5 289.5V301.2M479 298.5H480M481 300.5H482" stroke="#22c022" fill="none"/><path d="M483.5 282.1V298.8M482 284.5H483M484 296.5H485" stroke="#22c022" fill="none"/><path d="M485.5 285.2V293.3M484 285.5H485M486 290.5H487" stroke="#22c022" fill="none"/><path d="M488.5 294.0V309.9M487 297.5H488M489 298.5H490" stroke="#22c022" fill="none"/><path d="M490.5 294.2V307.1M489 304.5H490M491 297.5H492" stroke="#22c022" fill="none"/><polyline points="168.2,355.5 169.9,354.9 172.4,354.0 175.2,353.2 178.0,353.0 180.8,353.4 183.7,354.2 186.6,355.4 189.2,357.0 191.4,359.0 193.3,361.5 195.2,364.2 197.3,366.8 199.5,369.3 201.9,371.9 204.3,374.3 207.0,376.5 210.1,378.5 213.4,380.5 216.7,382.0 219.8,383.0 222.5,383.1 224.9,382.6 227.3,381.8 229.5,381.3 231.6,381.3 233.4,381.6 235.4,381.7 237.6,381.3 240.0,380.1 242.5,378.3 245.4,376.5 248.9,374.8 253.3,373.5 258.5,372.3 263.7,371.2 268.2,370.0 271.7,368.6 274.5,367.2 277.1,365.8 280.0,364.4 283.1,363.1 286.4,361.9 289.6,360.7 292.9,359.5 296.1,358.3 299.3,357.1 302.6,355.8 305.8,354.7 309.1,353.5 312.4,352.2 315.7,351.2 318.7,350.6 321.4,350.7 324.0,351.3 326.3,352.0 328.4,352.3 330.2,352.1 331.6,351.5 333.0,350.9 334.8,350.6 337.0,350.6 339.4,350.6 342.0,350.9 344.5,351.5 346.8,352.5 349.0,353.8 351.3,355.1 354.2,356.3 357.9,357.2 362.1,357.9 366.5,358.6 370.3,359.5 373.5,360.8 376.3,362.4 378.9,363.7 381.6,364.4 384.4,364.1 387.2,363.2 390.1,362.0 392.9,361.0 395.8,360.1 398.8,359.2 401.7,358.4 404.5,358.0 407.0,358.3 409.3,359.2 411.7,359.8 414.2,359.3 417.1,357.2 420.1,354.1 423.2,350.5 426.3,347.2 429.3,344.2 432.4,341.1 435.4,338.0 438.4,335.0 441.5,331.8 444.6,328.5 447.7,325.5 450.5,323.0 453.1,321.2 455.4,319.9 457.7,319.0 460.0,318.2 462.4,317.8 464.9,317.7 467.4,317.6 469.8,317.0 472.2,315.9 474.7,314.4 477.1,312.7 479.5,311.0 482.1,309.1 484.7,307.0 487.2,305.0 489.2,303.7 490.8,303.2 492.0,303.4 492.9,303.8 493.5,304" fill="none" stroke="#d01e1e" stroke-width="1.1"/></g><line x1="167.5" y1="395.5" x2="493.5" y2="395.5" stroke="#7a8a9a" stroke-width="1.5"/><line x1="167.5" y1="400.5" x2="493.5" y2="400.5" stroke="#00a800" stroke-dasharray="8,3,2,3"/><text x="169" y="393.5" font-size="6.3" letter-spacing="-0.15" fill="#e8e8e8">#11392293 sell 5.00</text><text x="169" y="398.8" font-size="6.3" letter-spacing="-0.15" fill="#e8e8e8">#11391950 buy 99.00</text><rect x="167.5" y="263.5" width="326.0" height="146.5" fill="none" stroke="#c8c8c8"/><line x1="167.5" y1="410" x2="493.5" y2="410" stroke="#c8c8c8" stroke-width="2"/><line x1="493" y1="287.5" x2="496" y2="287.5" stroke="#c0c0c0"/><text x="497" y="289.6" font-size="6.3" letter-spacing="-0.15" fill="#fff">0.9760</text><line x1="493" y1="311.5" x2="496" y2="311.5" stroke="#c0c0c0"/><text x="497" y="313.6" font-size="6.3" letter-spacing="-0.15" fill="#fff">0.9740</text><line x1="493" y1="336.5" x2="496" y2="336.5" stroke="#c0c0c0"/><text x="497" y="338.6" font-size="6.3" letter-spacing="-0.15" fill="#fff">0.9720</text><line x1="493" y1="360.5" x2="496" y2="360.5" stroke="#c0c0c0"/><text x="497" y="362.6" font-size="6.3" letter-spacing="-0.15" fill="#fff">0.9700</text><line x1="493" y1="385.5" x2="496" y2="385.5" stroke="#c0c0c0"/><text x="497" y="387.6" font-size="6.3" letter-spacing="-0.15" fill="#fff">0.9680</text><rect x="495" y="391.5" width="22" height="8" fill="#8fa5bb"/><text x="497" y="397.6" font-size="6.3" letter-spacing="-0.15" fill="#1a1a1a">0.9672</text><line x1="167.5" y1="410" x2="167.5" y2="413" stroke="#c0c0c0"/><text x="167" y="417.8" font-size="6.3" letter-spacing="-0.15" fill="#fff">22 Jan 2020</text><line x1="208.5" y1="410" x2="208.5" y2="413" stroke="#c0c0c0"/><text x="208" y="417.8" font-size="6.3" letter-spacing="-0.15" fill="#fff">23 Jan 05:00</text><line x1="249.5" y1="410" x2="249.5" y2="413" stroke="#c0c0c0"/><text x="249" y="417.8" font-size="6.3" letter-spacing="-0.15" fill="#fff">23 Jan 21:00</text><line x1="291.5" y1="410" x2="291.5" y2="413" stroke="#c0c0c0"/><text x="291" y="417.8" font-size="6.3" letter-spacing="-0.15" fill="#fff">24 Jan 13:00</text><line x1="332.5" y1="410" x2="332.5" y2="413" stroke="#c0c0c0"/><text x="332" y="417.8" font-size="6.3" letter-spacing="-0.15" fill="#fff">27 Jan 05:00</text><line x1="373.5" y1="410" x2="373.5" y2="413" stroke="#c0c0c0"/><text x="373" y="417.8" font-size="6.3" letter-spacing="-0.15" fill="#fff">27 Jan 21:00</text><line x1="415.5" y1="410" x2="415.5" y2="413" stroke="#c0c0c0"/><text x="415" y="417.8" font-size="6.3" letter-spacing="-0.15" fill="#fff">28 Jan 13:00</text><line x1="456.5" y1="410" x2="456.5" y2="413" stroke="#c0c0c0"/><text x="456" y="417.8" font-size="6.3" letter-spacing="-0.15" fill="#fff">29 Jan 05:00</text><rect x="170" y="266" width="9" height="7" fill="#dcdcf0"/><rect x="170" y="266" width="3" height="7" fill="#e87878"/><rect x="175" y="266" width="4" height="7" fill="#8080d8"/><rect x="181" y="266" width="9" height="7" fill="#2a3ab8"/><rect x="185" y="268" width="5" height="5" fill="#d83030"/><rect x="182" y="267" width="4" height="1" fill="#fff"/><text x="194" y="272.3" font-size="6.5" letter-spacing="-0.1" fill="#fff">USDCHF,H1</text></svg><div style="position:absolute;left:170px;top:276px;width:27px;height:14px;background:linear-gradient(#f03a3a,#b01010);color:#fff;font-size:7.5px;line-height:14px;text-align:center;">SELL</div><div style="position:absolute;left:199px;top:276px;width:62px;height:14px;background:#fff;"></div><div style="position:absolute;left:200px;top:277px;width:11px;height:12px;background:#e1e1e1;border-right:1px solid #c8c8c8"><div style="position:absolute;left:3px;top:5px;width:0;height:0;border-left:3px solid transparent;border-right:3px solid transparent;border-top:3px solid #000"></div></div><div style="position:absolute;left:248px;top:277px;width:12px;height:12px;background:#e1e1e1;border-left:1px solid #c8c8c8"><div style="position:absolute;left:3px;top:4px;width:0;height:0;border-left:3px solid transparent;border-right:3px solid transparent;border-bottom:3px solid #000"></div></div><div style="position:absolute;left:212px;top:276px;width:34px;height:14px;color:#000;font-size:7.5px;line-height:14px;text-align:right;">5.00</div><div style="position:absolute;left:262px;top:276px;width:28px;height:14px;background:linear-gradient(#f03a3a,#b01010);color:#fff;font-size:7.5px;line-height:14px;text-align:center;">BUY</div><div style="position:absolute;left:170px;top:290px;width:59px;height:23px;background:linear-gradient(#e83030,#a80c0c);color:#fff;"><span style="position:absolute;right:30px;bottom:2px;font-size:7.5px;line-height:9px;font-weight:bold;">0.96</span><span style="position:absolute;left:30px;bottom:0px;font-size:19px;line-height:20px;letter-spacing:-0.5px;">72</span></div><div style="position:absolute;left:231px;top:290px;width:59px;height:23px;background:linear-gradient(#e83030,#a80c0c);color:#fff;"><span style="position:absolute;right:30px;bottom:2px;font-size:7.5px;line-height:9px;font-weight:bold;">0.96</span><span style="position:absolute;left:30px;bottom:0px;font-size:19px;line-height:20px;letter-spacing:-0.5px;">75</span></div><div style="position:absolute;left:530px;top:242px;width:367px;height:184px;background:#f0f0f0;"></div><svg style="position:absolute;left:535px;top:245px" width="11" height="11" viewBox="0 0 13 13"><rect x="0.5" y="0.5" width="9" height="8" fill="#dceeff" stroke="#2d8fe0"/><rect x="0.5" y="0.5" width="9" height="2" fill="#2d8fe0"/><rect x="3.5" y="3.5" width="9" height="9" fill="#fff" stroke="#2d8fe0"/><rect x="3.5" y="3.5" width="9" height="2" fill="#2d8fe0"/><path d="M5 11L7 9L9 10L11 7" stroke="#f06020" fill="none" stroke-width="1.2"/></svg><div style="position:absolute;left:548.5px;top:245.9px;font-size:8.4px;line-height:10px;letter-spacing:-0.2px;color:#6d6d6d;white-space:nowrap;transform:scaleX(0.8);transform-origin:left top;">USDJPY,H1</div><div style="position:absolute;left:834px;top:252px;width:6px;height:1px;background:#777;"></div><div style="position:absolute;left:856px;top:248px;width:7px;height:7px;border:1px solid #777;"></div><svg style="position:absolute;left:880px;top:247px" width="8" height="8"><path d="M1 1L7 7M7 1L1 7" stroke="#777" stroke-width="1"/></svg><div style="position:absolute;left:534px;top:261px;width:359px;height:162px;background:#000;"></div><svg style="position:absolute;left:534px;top:261px" width="359" height="162" viewBox="534 261 359 162" shape-rendering="crispEdges"><line x1="556.5" y1="263.5" x2="556.5" y2="359.5" stroke="#707070" stroke-dasharray="2,2"/><line x1="576.5" y1="263.5" x2="576.5" y2="359.5" stroke="#707070" stroke-dasharray="2,2"/><line x1="597.5" y1="263.5" x2="597.5" y2="359.5" stroke="#707070" stroke-dasharray="2,2"/><line x1="617.5" y1="263.5" x2="617.5" y2="359.5" stroke="#707070" stroke-dasharray="2,2"/><line x1="638.5" y1="263.5" x2="638.5" y2="359.5" stroke="#707070" stroke-dasharray="2,2"/><line x1="659.5" y1="263.5" x2="659.5" y2="359.5" stroke="#707070" stroke-dasharray="2,2"/><line x1="679.5" y1="263.5" x2="679.5" y2="359.5" stroke="#707070" stroke-dasharray="2,2"/><line x1="700.5" y1="263.5" x2="700.5" y2="359.5" stroke="#707070" stroke-dasharray="2,2"/><line x1="720.5" y1="263.5" x2="720.5" y2="359.5" stroke="#707070" stroke-dasharray="2,2"/><line x1="741.5" y1="263.5" x2="741.5" y2="359.5" stroke="#707070" stroke-dasharray="2,2"/><line x1="762.5" y1="263.5" x2="762.5" y2="359.5" stroke="#707070" stroke-dasharray="2,2"/><line x1="782.5" y1="263.5" x2="782.5" y2="359.5" stroke="#707070" stroke-dasharray="2,2"/><line x1="803.5" y1="263.5" x2="803.5" y2="359.5" stroke="#707070" stroke-dasharray="2,2"/><line x1="823.5" y1="263.5" x2="823.5" y2="359.5" stroke="#707070" stroke-dasharray="2,2"/><line x1="844.5" y1="263.5" x2="844.5" y2="359.5" stroke="#707070" stroke-dasharray="2,2"/><line x1="535.5" y1="278.5" x2="861.5" y2="278.5" stroke="#707070" stroke-dasharray="2,2"/><line x1="535.5" y1="298.5" x2="861.5" y2="298.5" stroke="#707070" stroke-dasharray="2,2"/><line x1="535.5" y1="318.5" x2="861.5" y2="318.5" stroke="#707070" stroke-dasharray="2,2"/><line x1="535.5" y1="339.5" x2="861.5" y2="339.5" stroke="#707070" stroke-dasharray="2,2"/><line x1="556.5" y1="361.5" x2="556.5" y2="410.5" stroke="#707070" stroke-dasharray="2,2"/><line x1="576.5" y1="361.5" x2="576.5" y2="410.5" stroke="#707070" stroke-dasharray="2,2"/><line x1="597.5" y1="361.5" x2="597.5" y2="410.5" stroke="#707070" stroke-dasharray="2,2"/><line x1="617.5" y1="361.5" x2="617.5" y2="410.5" stroke="#707070" stroke-dasharray="2,2"/><line x1="638.5" y1="361.5" x2="638.5" y2="410.5" stroke="#707070" stroke-dasharray="2,2"/><line x1="659.5" y1="361.5" x2="659.5" y2="410.5" stroke="#707070" stroke-dasharray="2,2"/><line x1="679.5" y1="361.5" x2="679.5" y2="410.5" stroke="#707070" stroke-dasharray="2,2"/><line x1="700.5" y1="361.5" x2="700.5" y2="410.5" stroke="#707070" stroke-dasharray="2,2"/><line x1="720.5" y1="361.5" x2="720.5" y2="410.5" stroke="#707070" stroke-dasharray="2,2"/><line x1="741.5" y1="361.5" x2="741.5" y2="410.5" stroke="#707070" stroke-dasharray="2,2"/><line x1="762.5" y1="361.5" x2="762.5" y2="410.5" stroke="#707070" stroke-dasharray="2,2"/><line x1="782.5" y1="361.5" x2="782.5" y2="410.5" stroke="#707070" stroke-dasharray="2,2"/><line x1="803.5" y1="361.5" x2="803.5" y2="410.5" stroke="#707070" stroke-dasharray="2,2"/><line x1="823.5" y1="361.5" x2="823.5" y2="410.5" stroke="#707070" stroke-dasharray="2,2"/><line x1="844.5" y1="361.5" x2="844.5" y2="410.5" stroke="#707070" stroke-dasharray="2,2"/><g shape-rendering="auto"><line x1="537.25" y1="286.9" x2="537.25" y2="297.5" stroke="#00b800" stroke-width="0.7"/><rect x="536.55" y="289.8" width="1.4" height="5.0" fill="#a8ffa8" stroke="#18c818" stroke-width="0.7"/><line x1="539.78" y1="288.5" x2="539.78" y2="297.2" stroke="#00b800" stroke-width="0.7"/><rect x="539.08" y="289.8" width="1.4" height="4.2" fill="#a8ffa8" stroke="#18c818" stroke-width="0.7"/><line x1="542.31" y1="291.7" x2="542.31" y2="300.6" stroke="#00b800" stroke-width="0.7"/><rect x="541.61" y="294.0" width="1.4" height="4.4" fill="#a8ffa8" stroke="#18c818" stroke-width="0.7"/><line x1="544.84" y1="288.7" x2="544.84" y2="300.2" stroke="#00b800" stroke-width="0.7"/><rect x="544.14" y="289.3" width="1.4" height="9.1" fill="#a8ffa8" stroke="#18c818" stroke-width="0.7"/><line x1="547.37" y1="288.5" x2="547.37" y2="297.2" stroke="#00b800" stroke-width="0.7"/><rect x="546.67" y="289.3" width="1.4" height="4.7" fill="#a8ffa8" stroke="#18c818" stroke-width="0.7"/><line x1="549.90" y1="286.8" x2="549.90" y2="294.6" stroke="#00b800" stroke-width="0.7"/><rect x="549.20" y="288.1" width="1.4" height="5.8" fill="#a8ffa8" stroke="#18c818" stroke-width="0.7"/><line x1="552.43" y1="285.1" x2="552.43" y2="302.7" stroke="#00b800" stroke-width="0.7"/><rect x="551.73" y="288.1" width="1.4" height="11.0" fill="#a8ffa8" stroke="#18c818" stroke-width="0.7"/><line x1="554.96" y1="292.2" x2="554.96" y2="300.7" stroke="#00b800" stroke-width="0.7"/><rect x="554.26" y="292.8" width="1.4" height="6.3" fill="#a8ffa8" stroke="#18c818" stroke-width="0.7"/><line x1="557.49" y1="289.6" x2="557.49" y2="296.7" stroke="#00b800" stroke-width="0.7"/><rect x="556.79" y="290.5" width="1.4" height="2.3" fill="#a8ffa8" stroke="#18c818" stroke-width="0.7"/><line x1="560.02" y1="287.0" x2="560.02" y2="293.9" stroke="#00b800" stroke-width="0.7"/><rect x="559.32" y="288.1" width="1.4" height="2.5" fill="#a8ffa8" stroke="#18c818" stroke-width="0.7"/><line x1="562.55" y1="280.2" x2="562.55" y2="290.2" stroke="#00b800" stroke-width="0.7"/><rect x="561.85" y="283.9" width="1.4" height="4.2" fill="#a8ffa8" stroke="#18c818" stroke-width="0.7"/><line x1="565.08" y1="282.2" x2="565.08" y2="292.0" stroke="#00b800" stroke-width="0.7"/><rect x="564.38" y="283.9" width="1.4" height="5.9" fill="#a8ffa8" stroke="#18c818" stroke-width="0.7"/><line x1="567.61" y1="283.2" x2="567.61" y2="293.3" stroke="#00b800" stroke-width="0.7"/><rect x="566.91" y="283.8" width="1.4" height="6.0" fill="#a8ffa8" stroke="#18c818" stroke-width="0.7"/><line x1="570.14" y1="280.6" x2="570.14" y2="286.6" stroke="#00b800" stroke-width="0.7"/><rect x="569.44" y="283.8" width="1.4" height="1.5" fill="#a8ffa8" stroke="#18c818" stroke-width="0.7"/><line x1="572.67" y1="280.4" x2="572.67" y2="297.7" stroke="#00b800" stroke-width="0.7"/><rect x="571.97" y="284.0" width="1.4" height="10.5" fill="#a8ffa8" stroke="#18c818" stroke-width="0.7"/><line x1="575.20" y1="288.4" x2="575.20" y2="297.6" stroke="#00b800" stroke-width="0.7"/><rect x="574.50" y="291.0" width="1.4" height="3.6" fill="#a8ffa8" stroke="#18c818" stroke-width="0.7"/><line x1="577.73" y1="278.7" x2="577.73" y2="294.3" stroke="#00b800" stroke-width="0.7"/><rect x="577.03" y="280.8" width="1.4" height="10.1" fill="#a8ffa8" stroke="#18c818" stroke-width="0.7"/><line x1="580.26" y1="277.1" x2="580.26" y2="285.9" stroke="#00b800" stroke-width="0.7"/><rect x="579.56" y="280.8" width="1.4" height="1.5" fill="#a8ffa8" stroke="#18c818" stroke-width="0.7"/><line x1="582.79" y1="279.7" x2="582.79" y2="286.2" stroke="#00b800" stroke-width="0.7"/><rect x="582.09" y="281.5" width="1.4" height="2.6" fill="#a8ffa8" stroke="#18c818" stroke-width="0.7"/><line x1="585.32" y1="279.3" x2="585.32" y2="286.6" stroke="#00b800" stroke-width="0.7"/><rect x="584.62" y="283.3" width="1.4" height="1.5" fill="#a8ffa8" stroke="#18c818" stroke-width="0.7"/><line x1="587.85" y1="276.6" x2="587.85" y2="286.3" stroke="#00b800" stroke-width="0.7"/><rect x="587.15" y="277.4" width="1.4" height="5.9" fill="#a8ffa8" stroke="#18c818" stroke-width="0.7"/><line x1="590.38" y1="275.1" x2="590.38" y2="293.6" stroke="#00b800" stroke-width="0.7"/><rect x="589.68" y="277.4" width="1.4" height="14.0" fill="#a8ffa8" stroke="#18c818" stroke-width="0.7"/><line x1="592.91" y1="281.1" x2="592.91" y2="292.6" stroke="#00b800" stroke-width="0.7"/><rect x="592.21" y="284.2" width="1.4" height="7.1" fill="#a8ffa8" stroke="#18c818" stroke-width="0.7"/><line x1="595.44" y1="281.8" x2="595.44" y2="288.4" stroke="#00b800" stroke-width="0.7"/><rect x="594.74" y="284.2" width="1.4" height="1.5" fill="#a8ffa8" stroke="#18c818" stroke-width="0.7"/><line x1="597.97" y1="276.6" x2="597.97" y2="286.3" stroke="#00b800" stroke-width="0.7"/><rect x="597.27" y="277.7" width="1.4" height="6.9" fill="#a8ffa8" stroke="#18c818" stroke-width="0.7"/><line x1="600.50" y1="276.0" x2="600.50" y2="291.0" stroke="#00b800" stroke-width="0.7"/><rect x="599.80" y="277.7" width="1.4" height="10.7" fill="#a8ffa8" stroke="#18c818" stroke-width="0.7"/><line x1="603.03" y1="278.1" x2="603.03" y2="289.1" stroke="#00b800" stroke-width="0.7"/><rect x="602.33" y="279.0" width="1.4" height="9.4" fill="#a8ffa8" stroke="#18c818" stroke-width="0.7"/><line x1="605.56" y1="275.7" x2="605.56" y2="288.3" stroke="#00b800" stroke-width="0.7"/><rect x="604.86" y="279.0" width="1.4" height="7.5" fill="#a8ffa8" stroke="#18c818" stroke-width="0.7"/><line x1="608.09" y1="281.5" x2="608.09" y2="290.1" stroke="#00b800" stroke-width="0.7"/><rect x="607.39" y="284.4" width="1.4" height="2.1" fill="#a8ffa8" stroke="#18c818" stroke-width="0.7"/><line x1="610.62" y1="282.4" x2="610.62" y2="292.3" stroke="#00b800" stroke-width="0.7"/><rect x="609.92" y="284.4" width="1.4" height="4.0" fill="#a8ffa8" stroke="#18c818" stroke-width="0.7"/><line x1="613.15" y1="285.7" x2="613.15" y2="293.4" stroke="#00b800" stroke-width="0.7"/><rect x="612.45" y="288.3" width="1.4" height="1.5" fill="#a8ffa8" stroke="#18c818" stroke-width="0.7"/><line x1="615.68" y1="279.3" x2="615.68" y2="289.6" stroke="#00b800" stroke-width="0.7"/><rect x="614.98" y="281.1" width="1.4" height="7.2" fill="#a8ffa8" stroke="#18c818" stroke-width="0.7"/><line x1="618.21" y1="280.0" x2="618.21" y2="287.5" stroke="#00b800" stroke-width="0.7"/><rect x="617.51" y="281.1" width="1.4" height="5.7" fill="#a8ffa8" stroke="#18c818" stroke-width="0.7"/><line x1="620.74" y1="282.3" x2="620.74" y2="289.2" stroke="#00b800" stroke-width="0.7"/><rect x="620.04" y="285.6" width="1.4" height="1.5" fill="#a8ffa8" stroke="#18c818" stroke-width="0.7"/><line x1="623.27" y1="284.9" x2="623.27" y2="288.5" stroke="#00b800" stroke-width="0.7"/><rect x="622.57" y="285.6" width="1.4" height="1.5" fill="#a8ffa8" stroke="#18c818" stroke-width="0.7"/><line x1="625.80" y1="275.6" x2="625.80" y2="287.0" stroke="#00b800" stroke-width="0.7"/><rect x="625.10" y="277.6" width="1.4" height="8.3" fill="#a8ffa8" stroke="#18c818" stroke-width="0.7"/><line x1="628.33" y1="272.5" x2="628.33" y2="281.2" stroke="#00b800" stroke-width="0.7"/><rect x="627.63" y="274.1" width="1.4" height="3.4" fill="#a8ffa8" stroke="#18c818" stroke-width="0.7"/><line x1="630.86" y1="271.0" x2="630.86" y2="289.9" stroke="#00b800" stroke-width="0.7"/><rect x="630.16" y="274.1" width="1.4" height="13.6" fill="#a8ffa8" stroke="#18c818" stroke-width="0.7"/><line x1="633.39" y1="272.8" x2="633.39" y2="290.1" stroke="#00b800" stroke-width="0.7"/><rect x="632.69" y="276.6" width="1.4" height="11.1" fill="#a8ffa8" stroke="#18c818" stroke-width="0.7"/><line x1="635.92" y1="276.0" x2="635.92" y2="284.9" stroke="#00b800" stroke-width="0.7"/><rect x="635.22" y="276.6" width="1.4" height="7.0" fill="#a8ffa8" stroke="#18c818" stroke-width="0.7"/><line x1="638.45" y1="280.4" x2="638.45" y2="288.7" stroke="#00b800" stroke-width="0.7"/><rect x="637.75" y="283.6" width="1.4" height="1.5" fill="#a8ffa8" stroke="#18c818" stroke-width="0.7"/><line x1="640.98" y1="279.5" x2="640.98" y2="287.7" stroke="#00b800" stroke-width="0.7"/><rect x="640.28" y="281.5" width="1.4" height="3.7" fill="#a8ffa8" stroke="#18c818" stroke-width="0.7"/><line x1="643.51" y1="279.9" x2="643.51" y2="287.5" stroke="#00b800" stroke-width="0.7"/><rect x="642.81" y="281.5" width="1.4" height="3.7" fill="#a8ffa8" stroke="#18c818" stroke-width="0.7"/><line x1="646.04" y1="273.3" x2="646.04" y2="285.7" stroke="#00b800" stroke-width="0.7"/><rect x="645.34" y="276.5" width="1.4" height="8.7" fill="#a8ffa8" stroke="#18c818" stroke-width="0.7"/><line x1="648.57" y1="272.7" x2="648.57" y2="283.2" stroke="#00b800" stroke-width="0.7"/><rect x="647.87" y="276.5" width="1.4" height="6.1" fill="#a8ffa8" stroke="#18c818" stroke-width="0.7"/><line x1="651.10" y1="278.4" x2="651.10" y2="286.1" stroke="#00b800" stroke-width="0.7"/><rect x="650.40" y="281.1" width="1.4" height="1.5" fill="#a8ffa8" stroke="#18c818" stroke-width="0.7"/><line x1="653.63" y1="279.5" x2="653.63" y2="284.4" stroke="#00b800" stroke-width="0.7"/><rect x="652.93" y="280.9" width="1.4" height="1.5" fill="#a8ffa8" stroke="#18c818" stroke-width="0.7"/><line x1="656.16" y1="277.3" x2="656.16" y2="287.5" stroke="#00b800" stroke-width="0.7"/><rect x="655.46" y="280.9" width="1.4" height="5.6" fill="#a8ffa8" stroke="#18c818" stroke-width="0.7"/><line x1="658.69" y1="272.7" x2="658.69" y2="287.1" stroke="#00b800" stroke-width="0.7"/><rect x="657.99" y="273.5" width="1.4" height="13.0" fill="#a8ffa8" stroke="#18c818" stroke-width="0.7"/><line x1="661.22" y1="272.5" x2="661.22" y2="282.2" stroke="#00b800" stroke-width="0.7"/><rect x="660.52" y="273.5" width="1.4" height="5.2" fill="#a8ffa8" stroke="#18c818" stroke-width="0.7"/><line x1="663.75" y1="277.8" x2="663.75" y2="282.6" stroke="#00b800" stroke-width="0.7"/><rect x="663.05" y="278.7" width="1.4" height="1.5" fill="#a8ffa8" stroke="#18c818" stroke-width="0.7"/><line x1="666.28" y1="277.9" x2="666.28" y2="286.2" stroke="#00b800" stroke-width="0.7"/><rect x="665.58" y="280.1" width="1.4" height="4.9" fill="#a8ffa8" stroke="#18c818" stroke-width="0.7"/><line x1="668.81" y1="282.6" x2="668.81" y2="287.1" stroke="#00b800" stroke-width="0.7"/><rect x="668.11" y="283.8" width="1.4" height="1.5" fill="#a8ffa8" stroke="#18c818" stroke-width="0.7"/><line x1="671.34" y1="281.4" x2="671.34" y2="293.4" stroke="#00b800" stroke-width="0.7"/><rect x="670.64" y="283.8" width="1.4" height="9.0" fill="#a8ffa8" stroke="#18c818" stroke-width="0.7"/><line x1="673.87" y1="289.2" x2="673.87" y2="297.6" stroke="#00b800" stroke-width="0.7"/><rect x="673.17" y="292.8" width="1.4" height="1.6" fill="#a8ffa8" stroke="#18c818" stroke-width="0.7"/><line x1="676.40" y1="293.8" x2="676.40" y2="300.1" stroke="#00b800" stroke-width="0.7"/><rect x="675.70" y="294.3" width="1.4" height="3.6" fill="#a8ffa8" stroke="#18c818" stroke-width="0.7"/><line x1="678.93" y1="285.8" x2="678.93" y2="299.1" stroke="#00b800" stroke-width="0.7"/><rect x="678.23" y="289.0" width="1.4" height="9.0" fill="#a8ffa8" stroke="#18c818" stroke-width="0.7"/><line x1="681.46" y1="287.6" x2="681.46" y2="304.5" stroke="#00b800" stroke-width="0.7"/><rect x="680.76" y="289.0" width="1.4" height="12.6" fill="#a8ffa8" stroke="#18c818" stroke-width="0.7"/><line x1="683.99" y1="297.4" x2="683.99" y2="303.4" stroke="#00b800" stroke-width="0.7"/><rect x="683.29" y="298.0" width="1.4" height="3.5" fill="#a8ffa8" stroke="#18c818" stroke-width="0.7"/><line x1="686.52" y1="294.4" x2="686.52" y2="301.1" stroke="#00b800" stroke-width="0.7"/><rect x="685.82" y="298.0" width="1.4" height="1.5" fill="#a8ffa8" stroke="#18c818" stroke-width="0.7"/><line x1="689.05" y1="296.7" x2="689.05" y2="305.4" stroke="#00b800" stroke-width="0.7"/><rect x="688.35" y="299.1" width="1.4" height="2.4" fill="#a8ffa8" stroke="#18c818" stroke-width="0.7"/><line x1="691.58" y1="292.3" x2="691.58" y2="303.8" stroke="#00b800" stroke-width="0.7"/><rect x="690.88" y="294.9" width="1.4" height="6.7" fill="#a8ffa8" stroke="#18c818" stroke-width="0.7"/><line x1="694.11" y1="291.0" x2="694.11" y2="306.2" stroke="#00b800" stroke-width="0.7"/><rect x="693.41" y="294.9" width="1.4" height="9.7" fill="#a8ffa8" stroke="#18c818" stroke-width="0.7"/><line x1="696.64" y1="302.3" x2="696.64" y2="309.8" stroke="#00b800" stroke-width="0.7"/><rect x="695.94" y="304.6" width="1.4" height="2.7" fill="#a8ffa8" stroke="#18c818" stroke-width="0.7"/><line x1="699.17" y1="292.1" x2="699.17" y2="311.2" stroke="#00b800" stroke-width="0.7"/><rect x="698.47" y="295.4" width="1.4" height="11.9" fill="#a8ffa8" stroke="#18c818" stroke-width="0.7"/><line x1="701.70" y1="293.8" x2="701.70" y2="301.9" stroke="#00b800" stroke-width="0.7"/><rect x="701.00" y="295.4" width="1.4" height="2.5" fill="#a8ffa8" stroke="#18c818" stroke-width="0.7"/><line x1="704.23" y1="293.0" x2="704.23" y2="298.7" stroke="#00b800" stroke-width="0.7"/><rect x="703.53" y="293.8" width="1.4" height="4.1" fill="#a8ffa8" stroke="#18c818" stroke-width="0.7"/><line x1="706.76" y1="290.7" x2="706.76" y2="308.3" stroke="#00b800" stroke-width="0.7"/><rect x="706.06" y="293.8" width="1.4" height="12.4" fill="#a8ffa8" stroke="#18c818" stroke-width="0.7"/><line x1="709.29" y1="305.7" x2="709.29" y2="311.0" stroke="#00b800" stroke-width="0.7"/><rect x="708.59" y="306.2" width="1.4" height="2.0" fill="#a8ffa8" stroke="#18c818" stroke-width="0.7"/><line x1="711.82" y1="301.5" x2="711.82" y2="310.1" stroke="#00b800" stroke-width="0.7"/><rect x="711.12" y="303.9" width="1.4" height="4.4" fill="#a8ffa8" stroke="#18c818" stroke-width="0.7"/><line x1="714.35" y1="302.3" x2="714.35" y2="305.7" stroke="#00b800" stroke-width="0.7"/><rect x="713.65" y="303.5" width="1.4" height="1.5" fill="#a8ffa8" stroke="#18c818" stroke-width="0.7"/><line x1="716.88" y1="302.2" x2="716.88" y2="316.1" stroke="#00b800" stroke-width="0.7"/><rect x="716.18" y="303.5" width="1.4" height="9.6" fill="#a8ffa8" stroke="#18c818" stroke-width="0.7"/><line x1="719.41" y1="310.1" x2="719.41" y2="323.7" stroke="#00b800" stroke-width="0.7"/><rect x="718.71" y="313.2" width="1.4" height="8.4" fill="#a8ffa8" stroke="#18c818" stroke-width="0.7"/><line x1="721.94" y1="315.6" x2="721.94" y2="323.8" stroke="#00b800" stroke-width="0.7"/><rect x="721.24" y="317.5" width="1.4" height="4.1" fill="#a8ffa8" stroke="#18c818" stroke-width="0.7"/><line x1="724.47" y1="313.6" x2="724.47" y2="322.6" stroke="#00b800" stroke-width="0.7"/><rect x="723.77" y="317.5" width="1.4" height="4.4" fill="#a8ffa8" stroke="#18c818" stroke-width="0.7"/><line x1="727.00" y1="310.7" x2="727.00" y2="324.8" stroke="#00b800" stroke-width="0.7"/><rect x="726.30" y="312.9" width="1.4" height="8.9" fill="#a8ffa8" stroke="#18c818" stroke-width="0.7"/><line x1="729.53" y1="307.0" x2="729.53" y2="315.6" stroke="#00b800" stroke-width="0.7"/><rect x="728.83" y="310.3" width="1.4" height="2.7" fill="#a8ffa8" stroke="#18c818" stroke-width="0.7"/><line x1="732.06" y1="298.7" x2="732.06" y2="313.8" stroke="#00b800" stroke-width="0.7"/><rect x="731.36" y="301.5" width="1.4" height="8.7" fill="#a8ffa8" stroke="#18c818" stroke-width="0.7"/><line x1="734.59" y1="296.4" x2="734.59" y2="302.9" stroke="#00b800" stroke-width="0.7"/><rect x="733.89" y="299.3" width="1.4" height="2.2" fill="#a8ffa8" stroke="#18c818" stroke-width="0.7"/><line x1="737.12" y1="297.5" x2="737.12" y2="305.9" stroke="#00b800" stroke-width="0.7"/><rect x="736.42" y="299.3" width="1.4" height="3.9" fill="#a8ffa8" stroke="#18c818" stroke-width="0.7"/><line x1="739.65" y1="295.1" x2="739.65" y2="307.2" stroke="#00b800" stroke-width="0.7"/><rect x="738.95" y="299.0" width="1.4" height="4.2" fill="#a8ffa8" stroke="#18c818" stroke-width="0.7"/><line x1="742.18" y1="278.3" x2="742.18" y2="300.6" stroke="#00b800" stroke-width="0.7"/><rect x="741.48" y="279.9" width="1.4" height="19.0" fill="#a8ffa8" stroke="#18c818" stroke-width="0.7"/><line x1="744.71" y1="278.9" x2="744.71" y2="286.7" stroke="#00b800" stroke-width="0.7"/><rect x="744.01" y="279.9" width="1.4" height="4.4" fill="#a8ffa8" stroke="#18c818" stroke-width="0.7"/><line x1="747.24" y1="278.6" x2="747.24" y2="288.1" stroke="#00b800" stroke-width="0.7"/><rect x="746.54" y="280.1" width="1.4" height="4.2" fill="#a8ffa8" stroke="#18c818" stroke-width="0.7"/><line x1="749.77" y1="278.0" x2="749.77" y2="291.0" stroke="#00b800" stroke-width="0.7"/><rect x="749.07" y="280.1" width="1.4" height="10.0" fill="#a8ffa8" stroke="#18c818" stroke-width="0.7"/><line x1="752.30" y1="287.2" x2="752.30" y2="294.6" stroke="#00b800" stroke-width="0.7"/><rect x="751.60" y="290.1" width="1.4" height="3.2" fill="#a8ffa8" stroke="#18c818" stroke-width="0.7"/><line x1="754.83" y1="282.8" x2="754.83" y2="296.2" stroke="#00b800" stroke-width="0.7"/><rect x="754.13" y="285.5" width="1.4" height="7.8" fill="#a8ffa8" stroke="#18c818" stroke-width="0.7"/><line x1="757.36" y1="281.7" x2="757.36" y2="288.6" stroke="#00b800" stroke-width="0.7"/><rect x="756.66" y="285.5" width="1.4" height="1.5" fill="#a8ffa8" stroke="#18c818" stroke-width="0.7"/><line x1="759.89" y1="282.6" x2="759.89" y2="288.6" stroke="#00b800" stroke-width="0.7"/><rect x="759.19" y="286.1" width="1.4" height="1.5" fill="#a8ffa8" stroke="#18c818" stroke-width="0.7"/><line x1="762.42" y1="286.3" x2="762.42" y2="299.0" stroke="#00b800" stroke-width="0.7"/><rect x="761.72" y="287.5" width="1.4" height="8.9" fill="#a8ffa8" stroke="#18c818" stroke-width="0.7"/><line x1="764.95" y1="291.1" x2="764.95" y2="300.2" stroke="#00b800" stroke-width="0.7"/><rect x="764.25" y="292.9" width="1.4" height="3.5" fill="#a8ffa8" stroke="#18c818" stroke-width="0.7"/><line x1="767.48" y1="290.9" x2="767.48" y2="299.6" stroke="#00b800" stroke-width="0.7"/><rect x="766.78" y="292.9" width="1.4" height="4.0" fill="#a8ffa8" stroke="#18c818" stroke-width="0.7"/><line x1="770.01" y1="293.6" x2="770.01" y2="298.8" stroke="#00b800" stroke-width="0.7"/><rect x="769.31" y="294.7" width="1.4" height="2.2" fill="#a8ffa8" stroke="#18c818" stroke-width="0.7"/><line x1="772.54" y1="293.6" x2="772.54" y2="300.1" stroke="#00b800" stroke-width="0.7"/><rect x="771.84" y="294.7" width="1.4" height="1.5" fill="#a8ffa8" stroke="#18c818" stroke-width="0.7"/><line x1="775.07" y1="291.9" x2="775.07" y2="301.9" stroke="#00b800" stroke-width="0.7"/><rect x="774.37" y="295.3" width="1.4" height="2.9" fill="#a8ffa8" stroke="#18c818" stroke-width="0.7"/><line x1="777.60" y1="297.6" x2="777.60" y2="318.0" stroke="#00b800" stroke-width="0.7"/><rect x="776.90" y="298.1" width="1.4" height="17.6" fill="#a8ffa8" stroke="#18c818" stroke-width="0.7"/><line x1="780.13" y1="313.1" x2="780.13" y2="328.9" stroke="#00b800" stroke-width="0.7"/><rect x="779.43" y="315.7" width="1.4" height="10.2" fill="#a8ffa8" stroke="#18c818" stroke-width="0.7"/><line x1="782.66" y1="325.4" x2="782.66" y2="335.9" stroke="#00b800" stroke-width="0.7"/><rect x="781.96" y="326.0" width="1.4" height="7.5" fill="#a8ffa8" stroke="#18c818" stroke-width="0.7"/><line x1="785.19" y1="331.9" x2="785.19" y2="337.1" stroke="#00b800" stroke-width="0.7"/><rect x="784.49" y="333.5" width="1.4" height="1.5" fill="#a8ffa8" stroke="#18c818" stroke-width="0.7"/><line x1="787.72" y1="331.8" x2="787.72" y2="347.9" stroke="#00b800" stroke-width="0.7"/><rect x="787.02" y="333.6" width="1.4" height="13.3" fill="#a8ffa8" stroke="#18c818" stroke-width="0.7"/><line x1="790.25" y1="343.6" x2="790.25" y2="350.8" stroke="#00b800" stroke-width="0.7"/><rect x="789.55" y="346.9" width="1.4" height="1.5" fill="#a8ffa8" stroke="#18c818" stroke-width="0.7"/><line x1="792.78" y1="335.5" x2="792.78" y2="349.1" stroke="#00b800" stroke-width="0.7"/><rect x="792.08" y="336.6" width="1.4" height="10.5" fill="#a8ffa8" stroke="#18c818" stroke-width="0.7"/><line x1="795.31" y1="335.3" x2="795.31" y2="346.2" stroke="#00b800" stroke-width="0.7"/><rect x="794.61" y="336.6" width="1.4" height="6.3" fill="#a8ffa8" stroke="#18c818" stroke-width="0.7"/><line x1="797.84" y1="339.2" x2="797.84" y2="349.2" stroke="#00b800" stroke-width="0.7"/><rect x="797.14" y="342.9" width="1.4" height="2.7" fill="#a8ffa8" stroke="#18c818" stroke-width="0.7"/><line x1="800.37" y1="328.1" x2="800.37" y2="346.3" stroke="#00b800" stroke-width="0.7"/><rect x="799.67" y="330.6" width="1.4" height="14.9" fill="#a8ffa8" stroke="#18c818" stroke-width="0.7"/><line x1="802.90" y1="327.5" x2="802.90" y2="342.1" stroke="#00b800" stroke-width="0.7"/><rect x="802.20" y="330.6" width="1.4" height="8.3" fill="#a8ffa8" stroke="#18c818" stroke-width="0.7"/><line x1="805.43" y1="325.4" x2="805.43" y2="342.2" stroke="#00b800" stroke-width="0.7"/><rect x="804.73" y="326.1" width="1.4" height="12.8" fill="#a8ffa8" stroke="#18c818" stroke-width="0.7"/><line x1="807.96" y1="323.5" x2="807.96" y2="334.7" stroke="#00b800" stroke-width="0.7"/><rect x="807.26" y="326.1" width="1.4" height="6.4" fill="#a8ffa8" stroke="#18c818" stroke-width="0.7"/><line x1="810.49" y1="330.9" x2="810.49" y2="337.8" stroke="#00b800" stroke-width="0.7"/><rect x="809.79" y="332.6" width="1.4" height="3.8" fill="#a8ffa8" stroke="#18c818" stroke-width="0.7"/><line x1="813.02" y1="328.7" x2="813.02" y2="339.0" stroke="#00b800" stroke-width="0.7"/><rect x="812.32" y="330.3" width="1.4" height="6.1" fill="#a8ffa8" stroke="#18c818" stroke-width="0.7"/><line x1="815.55" y1="329.5" x2="815.55" y2="338.2" stroke="#00b800" stroke-width="0.7"/><rect x="814.85" y="330.3" width="1.4" height="7.2" fill="#a8ffa8" stroke="#18c818" stroke-width="0.7"/><line x1="818.08" y1="327.8" x2="818.08" y2="338.6" stroke="#00b800" stroke-width="0.7"/><rect x="817.38" y="330.6" width="1.4" height="6.8" fill="#a8ffa8" stroke="#18c818" stroke-width="0.7"/><line x1="820.61" y1="322.4" x2="820.61" y2="331.3" stroke="#00b800" stroke-width="0.7"/><rect x="819.91" y="323.1" width="1.4" height="7.5" fill="#a8ffa8" stroke="#18c818" stroke-width="0.7"/><line x1="823.14" y1="320.2" x2="823.14" y2="331.0" stroke="#00b800" stroke-width="0.7"/><rect x="822.44" y="323.1" width="1.4" height="5.1" fill="#a8ffa8" stroke="#18c818" stroke-width="0.7"/><line x1="825.67" y1="326.4" x2="825.67" y2="332.6" stroke="#00b800" stroke-width="0.7"/><rect x="824.97" y="327.3" width="1.4" height="1.5" fill="#a8ffa8" stroke="#18c818" stroke-width="0.7"/><line x1="828.20" y1="325.4" x2="828.20" y2="338.9" stroke="#00b800" stroke-width="0.7"/><rect x="827.50" y="327.3" width="1.4" height="8.7" fill="#a8ffa8" stroke="#18c818" stroke-width="0.7"/><line x1="830.73" y1="333.6" x2="830.73" y2="338.3" stroke="#00b800" stroke-width="0.7"/><rect x="830.03" y="336.0" width="1.4" height="1.5" fill="#a8ffa8" stroke="#18c818" stroke-width="0.7"/><line x1="833.26" y1="334.7" x2="833.26" y2="338.1" stroke="#00b800" stroke-width="0.7"/><rect x="832.56" y="336.0" width="1.4" height="1.5" fill="#a8ffa8" stroke="#18c818" stroke-width="0.7"/><line x1="835.79" y1="323.3" x2="835.79" y2="338.7" stroke="#00b800" stroke-width="0.7"/><rect x="835.09" y="325.7" width="1.4" height="10.3" fill="#a8ffa8" stroke="#18c818" stroke-width="0.7"/><line x1="838.32" y1="315.0" x2="838.32" y2="327.9" stroke="#00b800" stroke-width="0.7"/><rect x="837.62" y="318.0" width="1.4" height="7.7" fill="#a8ffa8" stroke="#18c818" stroke-width="0.7"/><line x1="840.85" y1="307.2" x2="840.85" y2="321.3" stroke="#00b800" stroke-width="0.7"/><rect x="840.15" y="310.7" width="1.4" height="7.2" fill="#a8ffa8" stroke="#18c818" stroke-width="0.7"/><line x1="843.38" y1="307.8" x2="843.38" y2="326.9" stroke="#00b800" stroke-width="0.7"/><rect x="842.68" y="310.7" width="1.4" height="14.9" fill="#a8ffa8" stroke="#18c818" stroke-width="0.7"/><line x1="845.91" y1="321.8" x2="845.91" y2="329.3" stroke="#00b800" stroke-width="0.7"/><rect x="845.21" y="325.5" width="1.4" height="1.5" fill="#a8ffa8" stroke="#18c818" stroke-width="0.7"/><line x1="848.44" y1="321.6" x2="848.44" y2="329.4" stroke="#00b800" stroke-width="0.7"/><rect x="847.74" y="325.5" width="1.4" height="2.0" fill="#a8ffa8" stroke="#18c818" stroke-width="0.7"/><line x1="850.97" y1="322.6" x2="850.97" y2="331.2" stroke="#00b800" stroke-width="0.7"/><rect x="850.27" y="326.4" width="1.4" height="1.5" fill="#a8ffa8" stroke="#18c818" stroke-width="0.7"/><line x1="853.50" y1="309.6" x2="853.50" y2="329.0" stroke="#00b800" stroke-width="0.7"/><rect x="852.80" y="311.4" width="1.4" height="15.0" fill="#a8ffa8" stroke="#18c818" stroke-width="0.7"/><line x1="856.03" y1="308.2" x2="856.03" y2="323.1" stroke="#00b800" stroke-width="0.7"/><rect x="855.33" y="311.4" width="1.4" height="8.9" fill="#a8ffa8" stroke="#18c818" stroke-width="0.7"/><line x1="858.56" y1="310.8" x2="858.56" y2="322.7" stroke="#00b800" stroke-width="0.7"/><rect x="857.86" y="314.5" width="1.4" height="5.8" fill="#a8ffa8" stroke="#18c818" stroke-width="0.7"/><line x1="537.00" y1="374.5" x2="537.00" y2="390.3" stroke="#c4c4c4" stroke-width="1.2"/><line x1="539.58" y1="374.5" x2="539.58" y2="390.2" stroke="#c4c4c4" stroke-width="1.2"/><line x1="542.16" y1="374.5" x2="542.16" y2="390.0" stroke="#c4c4c4" stroke-width="1.2"/><line x1="544.74" y1="374.5" x2="544.74" y2="389.9" stroke="#c4c4c4" stroke-width="1.2"/><line x1="547.32" y1="374.5" x2="547.32" y2="389.7" stroke="#c4c4c4" stroke-width="1.2"/><line x1="549.90" y1="374.5" x2="549.90" y2="389.6" stroke="#c4c4c4" stroke-width="1.2"/><line x1="552.48" y1="374.5" x2="552.48" y2="389.4" stroke="#c4c4c4" stroke-width="1.2"/><line x1="555.06" y1="374.5" x2="555.06" y2="388.4" stroke="#c4c4c4" stroke-width="1.2"/><line x1="557.64" y1="374.5" x2="557.64" y2="387.3" stroke="#c4c4c4" stroke-width="1.2"/><line x1="560.22" y1="374.5" x2="560.22" y2="386.3" stroke="#c4c4c4" stroke-width="1.2"/><line x1="562.80" y1="374.5" x2="562.80" y2="385.1" stroke="#c4c4c4" stroke-width="1.2"/><line x1="565.38" y1="374.5" x2="565.38" y2="383.8" stroke="#c4c4c4" stroke-width="1.2"/><line x1="567.96" y1="374.5" x2="567.96" y2="382.5" stroke="#c4c4c4" stroke-width="1.2"/><line x1="570.54" y1="374.5" x2="570.54" y2="381.2" stroke="#c4c4c4" stroke-width="1.2"/><line x1="573.12" y1="374.5" x2="573.12" y2="380.6" stroke="#c4c4c4" stroke-width="1.2"/><line x1="575.70" y1="374.5" x2="575.70" y2="380.1" stroke="#c4c4c4" stroke-width="1.2"/><line x1="578.28" y1="374.5" x2="578.28" y2="379.5" stroke="#c4c4c4" stroke-width="1.2"/><line x1="580.86" y1="374.5" x2="580.86" y2="379.0" stroke="#c4c4c4" stroke-width="1.2"/><line x1="583.44" y1="374.5" x2="583.44" y2="378.2" stroke="#c4c4c4" stroke-width="1.2"/><line x1="586.02" y1="374.5" x2="586.02" y2="377.5" stroke="#c4c4c4" stroke-width="1.2"/><line x1="588.60" y1="374.5" x2="588.60" y2="376.7" stroke="#c4c4c4" stroke-width="1.2"/><line x1="591.18" y1="374.5" x2="591.18" y2="375.8" stroke="#c4c4c4" stroke-width="1.2"/><line x1="593.76" y1="374.5" x2="593.76" y2="374.7" stroke="#c4c4c4" stroke-width="1.2"/><line x1="596.34" y1="374.5" x2="596.34" y2="373.0" stroke="#c4c4c4" stroke-width="1.2"/><line x1="598.92" y1="374.5" x2="598.92" y2="371.0" stroke="#c4c4c4" stroke-width="1.2"/><line x1="601.50" y1="374.5" x2="601.50" y2="370.7" stroke="#c4c4c4" stroke-width="1.2"/><line x1="604.08" y1="374.5" x2="604.08" y2="370.4" stroke="#c4c4c4" stroke-width="1.2"/><line x1="606.66" y1="374.5" x2="606.66" y2="370.1" stroke="#c4c4c4" stroke-width="1.2"/><line x1="609.24" y1="374.5" x2="609.24" y2="369.4" stroke="#c4c4c4" stroke-width="1.2"/><line x1="611.82" y1="374.5" x2="611.82" y2="368.4" stroke="#c4c4c4" stroke-width="1.2"/><line x1="614.40" y1="374.5" x2="614.40" y2="367.3" stroke="#c4c4c4" stroke-width="1.2"/><line x1="616.98" y1="374.5" x2="616.98" y2="366.3" stroke="#c4c4c4" stroke-width="1.2"/><line x1="619.56" y1="374.5" x2="619.56" y2="366.0" stroke="#c4c4c4" stroke-width="1.2"/><line x1="622.14" y1="374.5" x2="622.14" y2="365.8" stroke="#c4c4c4" stroke-width="1.2"/><line x1="624.72" y1="374.5" x2="624.72" y2="365.5" stroke="#c4c4c4" stroke-width="1.2"/><line x1="627.30" y1="374.5" x2="627.30" y2="365.6" stroke="#c4c4c4" stroke-width="1.2"/><line x1="629.88" y1="374.5" x2="629.88" y2="366.1" stroke="#c4c4c4" stroke-width="1.2"/><line x1="632.46" y1="374.5" x2="632.46" y2="366.6" stroke="#c4c4c4" stroke-width="1.2"/><line x1="635.04" y1="374.5" x2="635.04" y2="367.1" stroke="#c4c4c4" stroke-width="1.2"/><line x1="637.62" y1="374.5" x2="637.62" y2="369.4" stroke="#c4c4c4" stroke-width="1.2"/><line x1="640.20" y1="374.5" x2="640.20" y2="372.0" stroke="#c4c4c4" stroke-width="1.2"/><line x1="642.78" y1="374.5" x2="642.78" y2="373.2" stroke="#c4c4c4" stroke-width="1.2"/><line x1="645.36" y1="374.5" x2="645.36" y2="373.9" stroke="#c4c4c4" stroke-width="1.2"/><line x1="647.94" y1="374.5" x2="647.94" y2="374.5" stroke="#c4c4c4" stroke-width="1.2"/><line x1="650.52" y1="374.5" x2="650.52" y2="374.9" stroke="#c4c4c4" stroke-width="1.2"/><line x1="653.10" y1="374.5" x2="653.10" y2="375.2" stroke="#c4c4c4" stroke-width="1.2"/><line x1="655.68" y1="374.5" x2="655.68" y2="375.5" stroke="#c4c4c4" stroke-width="1.2"/><line x1="658.26" y1="374.5" x2="658.26" y2="375.9" stroke="#c4c4c4" stroke-width="1.2"/><line x1="660.84" y1="374.5" x2="660.84" y2="376.2" stroke="#c4c4c4" stroke-width="1.2"/><line x1="663.42" y1="374.5" x2="663.42" y2="376.6" stroke="#c4c4c4" stroke-width="1.2"/><line x1="666.00" y1="374.5" x2="666.00" y2="377.0" stroke="#c4c4c4" stroke-width="1.2"/><line x1="668.58" y1="374.5" x2="668.58" y2="377.4" stroke="#c4c4c4" stroke-width="1.2"/><line x1="671.16" y1="374.5" x2="671.16" y2="377.8" stroke="#c4c4c4" stroke-width="1.2"/><line x1="673.74" y1="374.5" x2="673.74" y2="378.2" stroke="#c4c4c4" stroke-width="1.2"/><line x1="676.32" y1="374.5" x2="676.32" y2="379.0" stroke="#c4c4c4" stroke-width="1.2"/><line x1="678.90" y1="374.5" x2="678.90" y2="379.9" stroke="#c4c4c4" stroke-width="1.2"/><line x1="681.48" y1="374.5" x2="681.48" y2="380.7" stroke="#c4c4c4" stroke-width="1.2"/><line x1="684.06" y1="374.5" x2="684.06" y2="381.6" stroke="#c4c4c4" stroke-width="1.2"/><line x1="686.64" y1="374.5" x2="686.64" y2="382.4" stroke="#c4c4c4" stroke-width="1.2"/><line x1="689.22" y1="374.5" x2="689.22" y2="383.3" stroke="#c4c4c4" stroke-width="1.2"/><line x1="691.80" y1="374.5" x2="691.80" y2="384.2" stroke="#c4c4c4" stroke-width="1.2"/><line x1="694.38" y1="374.5" x2="694.38" y2="385.0" stroke="#c4c4c4" stroke-width="1.2"/><line x1="696.96" y1="374.5" x2="696.96" y2="385.7" stroke="#c4c4c4" stroke-width="1.2"/><line x1="699.54" y1="374.5" x2="699.54" y2="385.9" stroke="#c4c4c4" stroke-width="1.2"/><line x1="702.12" y1="374.5" x2="702.12" y2="386.0" stroke="#c4c4c4" stroke-width="1.2"/><line x1="704.70" y1="374.5" x2="704.70" y2="386.1" stroke="#c4c4c4" stroke-width="1.2"/><line x1="707.28" y1="374.5" x2="707.28" y2="386.3" stroke="#c4c4c4" stroke-width="1.2"/><line x1="709.86" y1="374.5" x2="709.86" y2="386.4" stroke="#c4c4c4" stroke-width="1.2"/><line x1="712.44" y1="374.5" x2="712.44" y2="387.3" stroke="#c4c4c4" stroke-width="1.2"/><line x1="715.02" y1="374.5" x2="715.02" y2="388.2" stroke="#c4c4c4" stroke-width="1.2"/><line x1="717.60" y1="374.5" x2="717.60" y2="389.2" stroke="#c4c4c4" stroke-width="1.2"/><line x1="720.18" y1="374.5" x2="720.18" y2="390.2" stroke="#c4c4c4" stroke-width="1.2"/><line x1="722.76" y1="374.5" x2="722.76" y2="391.1" stroke="#c4c4c4" stroke-width="1.2"/><line x1="725.34" y1="374.5" x2="725.34" y2="391.9" stroke="#c4c4c4" stroke-width="1.2"/><line x1="727.92" y1="374.5" x2="727.92" y2="390.0" stroke="#c4c4c4" stroke-width="1.2"/><line x1="730.50" y1="374.5" x2="730.50" y2="388.1" stroke="#c4c4c4" stroke-width="1.2"/><line x1="733.08" y1="374.5" x2="733.08" y2="386.1" stroke="#c4c4c4" stroke-width="1.2"/><line x1="735.66" y1="374.5" x2="735.66" y2="382.9" stroke="#c4c4c4" stroke-width="1.2"/><line x1="738.24" y1="374.5" x2="738.24" y2="379.7" stroke="#c4c4c4" stroke-width="1.2"/><line x1="740.82" y1="374.5" x2="740.82" y2="376.5" stroke="#c4c4c4" stroke-width="1.2"/><line x1="743.40" y1="374.5" x2="743.40" y2="373.1" stroke="#c4c4c4" stroke-width="1.2"/><line x1="745.98" y1="374.5" x2="745.98" y2="371.3" stroke="#c4c4c4" stroke-width="1.2"/><line x1="748.56" y1="374.5" x2="748.56" y2="370.0" stroke="#c4c4c4" stroke-width="1.2"/><line x1="751.14" y1="374.5" x2="751.14" y2="368.7" stroke="#c4c4c4" stroke-width="1.2"/><line x1="753.72" y1="374.5" x2="753.72" y2="368.0" stroke="#c4c4c4" stroke-width="1.2"/><line x1="756.30" y1="374.5" x2="756.30" y2="367.5" stroke="#c4c4c4" stroke-width="1.2"/><line x1="758.88" y1="374.5" x2="758.88" y2="367.0" stroke="#c4c4c4" stroke-width="1.2"/><line x1="761.46" y1="374.5" x2="761.46" y2="366.6" stroke="#c4c4c4" stroke-width="1.2"/><line x1="764.04" y1="374.5" x2="764.04" y2="367.9" stroke="#c4c4c4" stroke-width="1.2"/><line x1="766.62" y1="374.5" x2="766.62" y2="369.2" stroke="#c4c4c4" stroke-width="1.2"/><line x1="769.20" y1="374.5" x2="769.20" y2="370.5" stroke="#c4c4c4" stroke-width="1.2"/><line x1="771.78" y1="374.5" x2="771.78" y2="372.3" stroke="#c4c4c4" stroke-width="1.2"/><line x1="774.36" y1="374.5" x2="774.36" y2="374.6" stroke="#c4c4c4" stroke-width="1.2"/><line x1="776.94" y1="374.5" x2="776.94" y2="379.1" stroke="#c4c4c4" stroke-width="1.2"/><line x1="779.52" y1="374.5" x2="779.52" y2="383.7" stroke="#c4c4c4" stroke-width="1.2"/><line x1="782.10" y1="374.5" x2="782.10" y2="387.0" stroke="#c4c4c4" stroke-width="1.2"/><line x1="784.68" y1="374.5" x2="784.68" y2="390.1" stroke="#c4c4c4" stroke-width="1.2"/><line x1="787.26" y1="374.5" x2="787.26" y2="393.1" stroke="#c4c4c4" stroke-width="1.2"/><line x1="789.84" y1="374.5" x2="789.84" y2="396.1" stroke="#c4c4c4" stroke-width="1.2"/><line x1="792.42" y1="374.5" x2="792.42" y2="398.4" stroke="#c4c4c4" stroke-width="1.2"/><line x1="795.00" y1="374.5" x2="795.00" y2="400.7" stroke="#c4c4c4" stroke-width="1.2"/><line x1="797.58" y1="374.5" x2="797.58" y2="403.0" stroke="#c4c4c4" stroke-width="1.2"/><line x1="800.16" y1="374.5" x2="800.16" y2="403.9" stroke="#c4c4c4" stroke-width="1.2"/><line x1="802.74" y1="374.5" x2="802.74" y2="403.0" stroke="#c4c4c4" stroke-width="1.2"/><line x1="805.32" y1="374.5" x2="805.32" y2="401.9" stroke="#c4c4c4" stroke-width="1.2"/><line x1="807.90" y1="374.5" x2="807.90" y2="400.3" stroke="#c4c4c4" stroke-width="1.2"/><line x1="810.48" y1="374.5" x2="810.48" y2="398.6" stroke="#c4c4c4" stroke-width="1.2"/><line x1="813.06" y1="374.5" x2="813.06" y2="397.0" stroke="#c4c4c4" stroke-width="1.2"/><line x1="815.64" y1="374.5" x2="815.64" y2="395.3" stroke="#c4c4c4" stroke-width="1.2"/><line x1="818.22" y1="374.5" x2="818.22" y2="393.7" stroke="#c4c4c4" stroke-width="1.2"/><line x1="820.80" y1="374.5" x2="820.80" y2="392.3" stroke="#c4c4c4" stroke-width="1.2"/><line x1="823.38" y1="374.5" x2="823.38" y2="390.8" stroke="#c4c4c4" stroke-width="1.2"/><line x1="825.96" y1="374.5" x2="825.96" y2="389.3" stroke="#c4c4c4" stroke-width="1.2"/><line x1="828.54" y1="374.5" x2="828.54" y2="387.9" stroke="#c4c4c4" stroke-width="1.2"/><line x1="831.12" y1="374.5" x2="831.12" y2="386.4" stroke="#c4c4c4" stroke-width="1.2"/><line x1="833.70" y1="374.5" x2="833.70" y2="384.7" stroke="#c4c4c4" stroke-width="1.2"/><line x1="836.28" y1="374.5" x2="836.28" y2="382.9" stroke="#c4c4c4" stroke-width="1.2"/><line x1="838.86" y1="374.5" x2="838.86" y2="381.2" stroke="#c4c4c4" stroke-width="1.2"/><line x1="841.44" y1="374.5" x2="841.44" y2="379.5" stroke="#c4c4c4" stroke-width="1.2"/><line x1="844.02" y1="374.5" x2="844.02" y2="377.9" stroke="#c4c4c4" stroke-width="1.2"/><line x1="846.60" y1="374.5" x2="846.60" y2="376.5" stroke="#c4c4c4" stroke-width="1.2"/><line x1="849.18" y1="374.5" x2="849.18" y2="375.1" stroke="#c4c4c4" stroke-width="1.2"/><line x1="851.76" y1="374.5" x2="851.76" y2="373.8" stroke="#c4c4c4" stroke-width="1.2"/><line x1="854.34" y1="374.5" x2="854.34" y2="372.7" stroke="#c4c4c4" stroke-width="1.2"/><line x1="856.92" y1="374.5" x2="856.92" y2="371.5" stroke="#c4c4c4" stroke-width="1.2"/><line x1="859.50" y1="374.5" x2="859.50" y2="371.1" stroke="#c4c4c4" stroke-width="1.2"/><polyline points="535.8,395.8 539.4,394.7 544.6,393.1 550.5,391.3 556.0,389.4 561.1,387.3 566.3,385.0 571.4,382.8 576.4,381.0 581.2,379.9 585.9,379.1 590.5,378.5 595.0,377.4 599.3,375.8 603.5,373.8 607.6,371.7 611.5,370.0 615.3,368.5 619.1,367.1 622.7,366.0 626.2,365.4 629.5,365.3 632.7,365.7 635.9,366.4 639.2,367.2 642.7,368.2 646.3,369.5 650.0,370.8 654.0,371.8 658.4,372.2 663.2,372.3 668.0,372.4 672.4,372.8 676.4,373.7 680.0,374.8 683.6,376.0 687.0,377.4 690.3,379.0 693.5,380.8 696.7,382.5 700.0,383.8 703.4,384.5 706.8,384.8 710.3,385.0 713.9,385.4 717.7,386.2 721.6,387.1 725.5,387.9 729.0,388.2 732.1,387.9 734.9,387.1 737.6,386.0 740.4,384.5 743.3,382.4 746.2,379.9 749.0,377.2 751.7,375.0 754.1,373.1 756.2,371.4 758.5,370.1 761.2,369.3 764.7,369.0 768.8,369.2 772.8,369.9 776.3,371.2 779.0,373.3 781.2,376.2 783.3,379.4 785.7,382.6 788.4,385.9 791.2,389.5 794.1,392.9 797.0,395.8 799.7,398.3 802.2,400.5 805.0,402.0 808.4,402.4 812.6,401.4 817.4,399.3 822.4,396.6 827.3,393.9 832.1,391.2 837.0,388.2 841.7,385.3 846.2,382.6 850.6,380.2 855.0,377.9 858.8,376.0 861.4,374.6" fill="none" stroke="#e02020" stroke-width="1" stroke-dasharray="2,2"/></g><line x1="535.5" y1="308.5" x2="861.5" y2="308.5" stroke="#8a9bab"/><rect x="535.5" y="263.5" width="326.0" height="96.0" fill="none" stroke="#c8c8c8"/><line x1="535.5" y1="360.5" x2="861.5" y2="360.5" stroke="#c8c8c8" stroke-width="2"/><rect x="535.5" y="361.5" width="326.0" height="49.0" fill="none" stroke="#c8c8c8"/><text x="537" y="369" font-size="6.3" letter-spacing="-0.15" fill="#e8e8e8">MACD(12,26,9) 0.0341 0.0181</text><line x1="861" y1="278.5" x2="864" y2="278.5" stroke="#c0c0c0"/><text x="865" y="280.6" font-size="6.3" letter-spacing="-0.15" fill="#fff">109.20</text><line x1="861" y1="298.5" x2="864" y2="298.5" stroke="#c0c0c0"/><text x="865" y="300.6" font-size="6.3" letter-spacing="-0.15" fill="#fff">108.95</text><line x1="861" y1="318.5" x2="864" y2="318.5" stroke="#c0c0c0"/><text x="865" y="320.6" font-size="6.3" letter-spacing="-0.15" fill="#fff">108.70</text><line x1="861" y1="339.5" x2="864" y2="339.5" stroke="#c0c0c0"/><text x="865" y="341.6" font-size="6.3" letter-spacing="-0.15" fill="#fff">108.45</text><rect x="863" y="304.5" width="22" height="8" fill="#8fa5bb"/><text x="865" y="310.6" font-size="6.3" letter-spacing="-0.15" fill="#1a1a1a">108.83</text><line x1="861" y1="365.5" x2="864" y2="365.5" stroke="#c0c0c0"/><text x="865" y="367.6" font-size="6.3" letter-spacing="-0.15" fill="#fff">0.071</text><line x1="861" y1="374.5" x2="864" y2="374.5" stroke="#c0c0c0"/><text x="865" y="376.6" font-size="6.3" letter-spacing="-0.15" fill="#fff">0.000</text><line x1="861" y1="406.5" x2="864" y2="406.5" stroke="#c0c0c0"/><text x="865" y="408.6" font-size="6.3" letter-spacing="-0.15" fill="#fff">-0.184</text><line x1="535.5" y1="410.5" x2="535.5" y2="413.5" stroke="#c0c0c0"/><text x="535" y="417.8" font-size="6.3" letter-spacing="-0.15" fill="#fff">27 Jan 2020</text><line x1="576.5" y1="410.5" x2="576.5" y2="413.5" stroke="#c0c0c0"/><text x="576" y="417.8" font-size="6.3" letter-spacing="-0.15" fill="#fff">28 Jan 11:00</text><line x1="617.5" y1="410.5" x2="617.5" y2="413.5" stroke="#c0c0c0"/><text x="617" y="417.8" font-size="6.3" letter-spacing="-0.15" fill="#fff">29 Jan 03:00</text><line x1="658.5" y1="410.5" x2="658.5" y2="413.5" stroke="#c0c0c0"/><text x="658" y="417.8" font-size="6.3" letter-spacing="-0.15" fill="#fff">29 Jan 19:00</text><line x1="699.5" y1="410.5" x2="699.5" y2="413.5" stroke="#c0c0c0"/><text x="699" y="417.8" font-size="6.3" letter-spacing="-0.15" fill="#fff">30 Jan 11:00</text><line x1="740.5" y1="410.5" x2="740.5" y2="413.5" stroke="#c0c0c0"/><text x="740" y="417.8" font-size="6.3" letter-spacing="-0.15" fill="#fff">31 Jan 03:00</text><line x1="781.5" y1="410.5" x2="781.5" y2="413.5" stroke="#c0c0c0"/><text x="781" y="417.8" font-size="6.3" letter-spacing="-0.15" fill="#fff">31 Jan 19:00</text><line x1="822.5" y1="410.5" x2="822.5" y2="413.5" stroke="#c0c0c0"/><text x="822" y="417.8" font-size="6.3" letter-spacing="-0.15" fill="#fff">3 Feb 11:00</text><path d="M802 349H816L819 352.5L816 356H802Z" fill="#f4dada"/><text x="803" y="355" font-size="6" fill="#800">02:30</text><path d="M838 349H861V356H838Z" fill="#fff"/><path d="M839 349V356M841 349V356" stroke="#4aa0d0"/><text x="846" y="355" font-size="6" fill="#000">18 21</text><rect x="538" y="266" width="9" height="7" fill="#dcdcf0"/><rect x="538" y="266" width="3" height="7" fill="#e87878"/><rect x="543" y="266" width="4" height="7" fill="#8080d8"/><rect x="549" y="266" width="9" height="7" fill="#2a3ab8"/><rect x="553" y="268" width="5" height="5" fill="#d83030"/><rect x="550" y="267" width="4" height="1" fill="#fff"/><text x="562" y="272.3" font-size="6.5" letter-spacing="-0.1" fill="#fff">USDJPY,H1</text></svg><div style="position:absolute;left:538px;top:276px;width:27px;height:14px;background:linear-gradient(#f03a3a,#b01010);color:#fff;font-size:7.5px;line-height:14px;text-align:center;">SELL</div><div style="position:absolute;left:567px;top:276px;width:62px;height:14px;background:#fff;"></div><div style="position:absolute;left:568px;top:277px;width:11px;height:12px;background:#e1e1e1;border-right:1px solid #c8c8c8"><div style="position:absolute;left:3px;top:5px;width:0;height:0;border-left:3px solid transparent;border-right:3px solid transparent;border-top:3px solid #000"></div></div><div style="position:absolute;left:616px;top:277px;width:12px;height:12px;background:#e1e1e1;border-left:1px solid #c8c8c8"><div style="position:absolute;left:3px;top:4px;width:0;height:0;border-left:3px solid transparent;border-right:3px solid transparent;border-bottom:3px solid #000"></div></div><div style="position:absolute;left:580px;top:276px;width:34px;height:14px;color:#000;font-size:7.5px;line-height:14px;text-align:right;">0.01</div><div style="position:absolute;left:630px;top:276px;width:28px;height:14px;background:linear-gradient(#f03a3a,#b01010);color:#fff;font-size:7.5px;line-height:14px;text-align:center;">BUY</div><div style="position:absolute;left:538px;top:290px;width:59px;height:23px;background:linear-gradient(#e83030,#a80c0c);color:#fff;"><span style="position:absolute;right:30px;bottom:2px;font-size:7.5px;line-height:9px;font-weight:bold;">108</span><span style="position:absolute;left:30px;bottom:0px;font-size:19px;line-height:20px;letter-spacing:-0.5px;">83</span></div><div style="position:absolute;left:599px;top:290px;width:59px;height:23px;background:linear-gradient(#e83030,#a80c0c);color:#fff;"><span style="position:absolute;right:30px;bottom:2px;font-size:7.5px;line-height:9px;font-weight:bold;">108</span><span style="position:absolute;left:30px;bottom:0px;font-size:19px;line-height:20px;letter-spacing:-0.5px;">86</span></div><div style="position:absolute;left:161px;top:426px;width:739px;height:12px;background:#f0f0f0;"></div><div style="position:absolute;left:161px;top:426px;width:739px;height:1px;background:#b8b8b8;"></div><div style="position:absolute;left:162px;top:427.8px;white-space:nowrap;width:55px;text-align:center;font-size:8.2px;line-height:10px;letter-spacing:-0.2px;color:#8a8a8a;">EURUSD,H1</div><div style="position:absolute;left:217px;top:426px;width:54px;height:12px;background:#fff;border:1px solid #444;border-top:none;"></div><div style="position:absolute;left:217px;top:427.8px;white-space:nowrap;width:54px;text-align:center;font-size:8.2px;line-height:10px;letter-spacing:-0.2px;color:#222;">USDCHF,H1</div><div style="position:absolute;left:271px;top:427.8px;white-space:nowrap;width:54px;text-align:center;font-size:8.2px;line-height:10px;letter-spacing:-0.2px;color:#8a8a8a;">GBPUSD,H1</div><div style="position:absolute;left:325px;top:427.8px;white-space:nowrap;width:55px;text-align:center;font-size:8.2px;line-height:10px;letter-spacing:-0.2px;color:#8a8a8a;">USDJPY,H1</div><div style="position:absolute;left:325.5px;top:429px;width:1px;height:8px;background:#a0a0a0;"></div><svg style="position:absolute;left:873px;top:428px" width="20" height="8"><path d="M3 1L1 4L3 7M17 1L19 4L17 7" fill="none" stroke="#888"/></svg><div style="position:absolute;left:1px;top:438px;width:898px;height:103px;background:#f0f0f0;"></div><div style="position:absolute;left:1px;top:439px;width:898px;height:1px;background:#d0d0d0;"></div><div style="position:absolute;left:1px;top:441px;width:10px;height:97px;background:#c5d4e4;"></div><svg style="position:absolute;left:3px;top:445px" width="6" height="6"><path d="M1 1L5 5M5 1L1 5" stroke="#222" stroke-width="1.1"/></svg><div style="position:absolute;left:-26px;top:511px;width:62px;height:10px;transform:rotate(-90deg);font-size:7.5px;line-height:10px;letter-spacing:-0.2px;color:#222;white-space:nowrap;text-align:center;">Инструменты</div><div style="position:absolute;left:11px;top:441px;width:886px;height:85px;background:#fff;"></div><div style="position:absolute;left:16px;top:446.2px;white-space:nowrap;font-size:8.2px;line-height:10px;letter-spacing:-0.2px;color:#222;">Символ</div><div style="position:absolute;left:108px;top:441px;width:1px;height:16px;background:#e4e4e4;"></div><div style="position:absolute;left:112px;top:446.2px;white-space:nowrap;font-size:8.2px;line-height:10px;letter-spacing:-0.2px;color:#222;">Тикет</div><div style="position:absolute;left:175px;top:441px;width:1px;height:16px;background:#e4e4e4;"></div><div style="position:absolute;left:-36px;width:300px;top:446.2px;white-space:nowrap;text-align:right;font-size:8.2px;line-height:10px;letter-spacing:-0.2px;color:#222;">Время</div><div style="position:absolute;left:267px;top:441px;width:1px;height:16px;background:#e4e4e4;"></div><div style="position:absolute;left:38px;width:300px;top:446.2px;white-space:nowrap;text-align:right;font-size:8.2px;line-height:10px;letter-spacing:-0.2px;color:#222;">Тип</div><div style="position:absolute;left:341px;top:441px;width:1px;height:16px;background:#e4e4e4;"></div><div style="position:absolute;left:113px;width:300px;top:446.2px;white-space:nowrap;text-align:right;font-size:8.2px;line-height:10px;letter-spacing:-0.2px;color:#222;">Объем</div><div style="position:absolute;left:416px;top:441px;width:1px;height:16px;background:#e4e4e4;"></div><div style="position:absolute;left:187px;width:300px;top:446.2px;white-space:nowrap;text-align:right;font-size:8.2px;line-height:10px;letter-spacing:-0.2px;color:#222;">Цена</div><div style="position:absolute;left:490px;top:441px;width:1px;height:16px;background:#e4e4e4;"></div><div style="position:absolute;left:262px;width:300px;top:446.2px;white-space:nowrap;text-align:right;font-size:8.2px;line-height:10px;letter-spacing:-0.2px;color:#222;">S / L</div><div style="position:absolute;left:565px;top:441px;width:1px;height:16px;background:#e4e4e4;"></div><div style="position:absolute;left:337px;width:300px;top:446.2px;white-space:nowrap;text-align:right;font-size:8.2px;line-height:10px;letter-spacing:-0.2px;color:#222;">T / P</div><div style="position:absolute;left:640px;top:441px;width:1px;height:16px;background:#e4e4e4;"></div><div style="position:absolute;left:412px;width:300px;top:446.2px;white-space:nowrap;text-align:right;font-size:8.2px;line-height:10px;letter-spacing:-0.2px;color:#222;">Цена</div><div style="position:absolute;left:715px;top:441px;width:1px;height:16px;background:#e4e4e4;"></div><div style="position:absolute;left:487px;width:300px;top:446.2px;white-space:nowrap;text-align:right;font-size:8.2px;line-height:10px;letter-spacing:-0.2px;color:#222;">Своп</div><div style="position:absolute;left:790px;top:441px;width:1px;height:16px;background:#e4e4e4;"></div><div style="position:absolute;left:593px;width:300px;top:446.2px;white-space:nowrap;text-align:right;font-size:8.2px;line-height:10px;letter-spacing:-0.2px;color:#222;">Прибыль</div><div style="position:absolute;left:896px;top:441px;width:1px;height:16px;background:#e4e4e4;"></div><div style="position:absolute;left:11px;top:456px;width:886px;height:1px;background:#e4e4e4;"></div><div style="position:absolute;left:11px;top:457.0px;width:886px;height:12.8px;background:#fff;border-bottom:1px solid #e4e4e4;"></div><svg style="position:absolute;left:12px;top:458.0px" width="9" height="11"><path d="M0.5 0.5H8.5V7.5L5.5 10.5H0.5Z" fill="#eef6ff" stroke="#3a8ee0"/><path d="M2 2.5H7M2 4.5H7M2 6.5H6" stroke="#3a8ee0" stroke-width="0.8"/><path d="M5.5 10.5V7.5H8.5Z" fill="#3a8ee0"/></svg><div style="position:absolute;left:25px;top:459.5px;white-space:nowrap;font-size:8.2px;line-height:10px;letter-spacing:-0.2px;color:#222;">usdchf</div><div style="position:absolute;left:112px;top:459.5px;white-space:nowrap;font-size:8.2px;line-height:10px;letter-spacing:-0.2px;color:#222;">11391950</div><div style="position:absolute;left:-36px;width:300px;top:459.5px;white-space:nowrap;text-align:right;font-size:8.2px;line-height:10px;letter-spacing:-0.2px;color:#222;">2020.02.03 17:31:25</div><div style="position:absolute;left:38px;width:300px;top:459.5px;white-space:nowrap;text-align:right;font-size:8.2px;line-height:10px;letter-spacing:-0.2px;color:#222;">buy</div><div style="position:absolute;left:113px;width:300px;top:459.5px;white-space:nowrap;text-align:right;font-size:8.2px;line-height:10px;letter-spacing:-0.2px;color:#222;">99.00</div><div style="position:absolute;left:187px;width:300px;top:459.5px;white-space:nowrap;text-align:right;font-size:8.2px;line-height:10px;letter-spacing:-0.2px;color:#222;">0.9668</div><div style="position:absolute;left:262px;width:300px;top:459.5px;white-space:nowrap;text-align:right;font-size:8.2px;line-height:10px;letter-spacing:-0.2px;color:#222;">0.0000</div><div style="position:absolute;left:337px;width:300px;top:459.5px;white-space:nowrap;text-align:right;font-size:8.2px;line-height:10px;letter-spacing:-0.2px;color:#222;">0.0000</div><div style="position:absolute;left:412px;width:300px;top:459.5px;white-space:nowrap;text-align:right;font-size:8.2px;line-height:10px;letter-spacing:-0.2px;color:#222;">0.9672</div><div style="position:absolute;left:487px;width:300px;top:459.5px;white-space:nowrap;text-align:right;font-size:8.2px;line-height:10px;letter-spacing:-0.2px;color:#222;">31.77</div><div style="position:absolute;left:582.5px;width:300px;top:459.5px;white-space:nowrap;text-align:right;font-size:8.2px;line-height:10px;letter-spacing:-0.2px;color:#222;">409.43</div><div style="position:absolute;left:108px;top:457.0px;width:1px;height:12.8px;background:#e4e4e4;"></div><div style="position:absolute;left:175px;top:457.0px;width:1px;height:12.8px;background:#e4e4e4;"></div><div style="position:absolute;left:267px;top:457.0px;width:1px;height:12.8px;background:#e4e4e4;"></div><div style="position:absolute;left:341px;top:457.0px;width:1px;height:12.8px;background:#e4e4e4;"></div><div style="position:absolute;left:416px;top:457.0px;width:1px;height:12.8px;background:#e4e4e4;"></div><div style="position:absolute;left:490px;top:457.0px;width:1px;height:12.8px;background:#e4e4e4;"></div><div style="position:absolute;left:565px;top:457.0px;width:1px;height:12.8px;background:#e4e4e4;"></div><div style="position:absolute;left:640px;top:457.0px;width:1px;height:12.8px;background:#e4e4e4;"></div><div style="position:absolute;left:715px;top:457.0px;width:1px;height:12.8px;background:#e4e4e4;"></div><div style="position:absolute;left:790px;top:457.0px;width:1px;height:12.8px;background:#e4e4e4;"></div><svg style="position:absolute;left:888px;top:460.0px" width="7" height="7"><path d="M1 1L6 6M6 1L1 6" stroke="#999"/></svg><div style="position:absolute;left:11px;top:469.8px;width:886px;height:12.8px;background:#ebebeb;border-bottom:1px solid #e4e4e4;"></div><svg style="position:absolute;left:12px;top:470.8px" width="9" height="11"><path d="M0.5 0.5H8.5V7.5L5.5 10.5H0.5Z" fill="#eef6ff" stroke="#3a8ee0"/><path d="M2 2.5H7M2 4.5H7M2 6.5H6" stroke="#3a8ee0" stroke-width="0.8"/><path d="M5.5 10.5V7.5H8.5Z" fill="#3a8ee0"/></svg><div style="position:absolute;left:25px;top:472.3px;white-space:nowrap;font-size:8.2px;line-height:10px;letter-spacing:-0.2px;color:#222;">gbpusd</div><div style="position:absolute;left:112px;top:472.3px;white-space:nowrap;font-size:8.2px;line-height:10px;letter-spacing:-0.2px;color:#222;">11392292</div><div style="position:absolute;left:-36px;width:300px;top:472.3px;white-space:nowrap;text-align:right;font-size:8.2px;line-height:10px;letter-spacing:-0.2px;color:#222;">2020.02.04 07:58:48</div><div style="position:absolute;left:38px;width:300px;top:472.3px;white-space:nowrap;text-align:right;font-size:8.2px;line-height:10px;letter-spacing:-0.2px;color:#222;">buy</div><div style="position:absolute;left:113px;width:300px;top:472.3px;white-space:nowrap;text-align:right;font-size:8.2px;line-height:10px;letter-spacing:-0.2px;color:#222;">3.00</div><div style="position:absolute;left:187px;width:300px;top:472.3px;white-space:nowrap;text-align:right;font-size:8.2px;line-height:10px;letter-spacing:-0.2px;color:#222;">1.3018</div><div style="position:absolute;left:262px;width:300px;top:472.3px;white-space:nowrap;text-align:right;font-size:8.2px;line-height:10px;letter-spacing:-0.2px;color:#222;">0.0000</div><div style="position:absolute;left:337px;width:300px;top:472.3px;white-space:nowrap;text-align:right;font-size:8.2px;line-height:10px;letter-spacing:-0.2px;color:#222;">0.0000</div><div style="position:absolute;left:412px;width:300px;top:472.3px;white-space:nowrap;text-align:right;font-size:8.2px;line-height:10px;letter-spacing:-0.2px;color:#222;">1.3014</div><div style="position:absolute;left:487px;width:300px;top:472.3px;white-space:nowrap;text-align:right;font-size:8.2px;line-height:10px;letter-spacing:-0.2px;color:#222;">0.00</div><div style="position:absolute;left:582.5px;width:300px;top:472.3px;white-space:nowrap;text-align:right;font-size:8.2px;line-height:10px;letter-spacing:-0.2px;color:#222;">-12.00</div><div style="position:absolute;left:108px;top:469.8px;width:1px;height:12.8px;background:#e4e4e4;"></div><div style="position:absolute;left:175px;top:469.8px;width:1px;height:12.8px;background:#e4e4e4;"></div><div style="position:absolute;left:267px;top:469.8px;width:1px;height:12.8px;background:#e4e4e4;"></div><div style="position:absolute;left:341px;top:469.8px;width:1px;height:12.8px;background:#e4e4e4;"></div><div style="position:absolute;left:416px;top:469.8px;width:1px;height:12.8px;background:#e4e4e4;"></div><div style="position:absolute;left:490px;top:469.8px;width:1px;height:12.8px;background:#e4e4e4;"></div><div style="position:absolute;left:565px;top:469.8px;width:1px;height:12.8px;background:#e4e4e4;"></div><div style="position:absolute;left:640px;top:469.8px;width:1px;height:12.8px;background:#e4e4e4;"></div><div style="position:absolute;left:715px;top:469.8px;width:1px;height:12.8px;background:#e4e4e4;"></div><div style="position:absolute;left:790px;top:469.8px;width:1px;height:12.8px;background:#e4e4e4;"></div><svg style="position:absolute;left:888px;top:472.8px" width="7" height="7"><path d="M1 1L6 6M6 1L1 6" stroke="#999"/></svg><div style="position:absolute;left:11px;top:482.6px;width:886px;height:12.8px;background:#fff;border-bottom:1px solid #e4e4e4;"></div><svg style="position:absolute;left:12px;top:483.6px" width="9" height="11"><path d="M0.5 0.5H8.5V7.5L5.5 10.5H0.5Z" fill="#eef6ff" stroke="#e86a3a"/><path d="M2 2.5H7M2 4.5H7M2 6.5H6" stroke="#e86a3a" stroke-width="0.8"/><path d="M5.5 10.5V7.5H8.5Z" fill="#e86a3a"/></svg><div style="position:absolute;left:25px;top:485.1px;white-space:nowrap;font-size:8.2px;line-height:10px;letter-spacing:-0.2px;color:#222;">usdchf</div><div style="position:absolute;left:112px;top:485.1px;white-space:nowrap;font-size:8.2px;line-height:10px;letter-spacing:-0.2px;color:#222;">11392293</div><div style="position:absolute;left:-36px;width:300px;top:485.1px;white-space:nowrap;text-align:right;font-size:8.2px;line-height:10px;letter-spacing:-0.2px;color:#222;">2020.02.04 07:59:07</div><div style="position:absolute;left:38px;width:300px;top:485.1px;white-space:nowrap;text-align:right;font-size:8.2px;line-height:10px;letter-spacing:-0.2px;color:#222;">sell</div><div style="position:absolute;left:113px;width:300px;top:485.1px;white-space:nowrap;text-align:right;font-size:8.2px;line-height:10px;letter-spacing:-0.2px;color:#222;">5.00</div><div style="position:absolute;left:187px;width:300px;top:485.1px;white-space:nowrap;text-align:right;font-size:8.2px;line-height:10px;letter-spacing:-0.2px;color:#222;">0.9672</div><div style="position:absolute;left:262px;width:300px;top:485.1px;white-space:nowrap;text-align:right;font-size:8.2px;line-height:10px;letter-spacing:-0.2px;color:#222;">0.0000</div><div style="position:absolute;left:337px;width:300px;top:485.1px;white-space:nowrap;text-align:right;font-size:8.2px;line-height:10px;letter-spacing:-0.2px;color:#222;">0.0000</div><div style="position:absolute;left:412px;width:300px;top:485.1px;white-space:nowrap;text-align:right;font-size:8.2px;line-height:10px;letter-spacing:-0.2px;color:#222;">0.9675</div><div style="position:absolute;left:487px;width:300px;top:485.1px;white-space:nowrap;text-align:right;font-size:8.2px;line-height:10px;letter-spacing:-0.2px;color:#222;">0.00</div><div style="position:absolute;left:582.5px;width:300px;top:485.1px;white-space:nowrap;text-align:right;font-size:8.2px;line-height:10px;letter-spacing:-0.2px;color:#222;">-15.50</div><div style="position:absolute;left:108px;top:482.6px;width:1px;height:12.8px;background:#e4e4e4;"></div><div style="position:absolute;left:175px;top:482.6px;width:1px;height:12.8px;background:#e4e4e4;"></div><div style="position:absolute;left:267px;top:482.6px;width:1px;height:12.8px;background:#e4e4e4;"></div><div style="position:absolute;left:341px;top:482.6px;width:1px;height:12.8px;background:#e4e4e4;"></div><div style="position:absolute;left:416px;top:482.6px;width:1px;height:12.8px;background:#e4e4e4;"></div><div style="position:absolute;left:490px;top:482.6px;width:1px;height:12.8px;background:#e4e4e4;"></div><div style="position:absolute;left:565px;top:482.6px;width:1px;height:12.8px;background:#e4e4e4;"></div><div style="position:absolute;left:640px;top:482.6px;width:1px;height:12.8px;background:#e4e4e4;"></div><div style="position:absolute;left:715px;top:482.6px;width:1px;height:12.8px;background:#e4e4e4;"></div><div style="position:absolute;left:790px;top:482.6px;width:1px;height:12.8px;background:#e4e4e4;"></div><svg style="position:absolute;left:888px;top:485.6px" width="7" height="7"><path d="M1 1L6 6M6 1L1 6" stroke="#999"/></svg><div style="position:absolute;left:11px;top:496px;width:886px;height:12px;background:#c8c8c8;"></div><svg style="position:absolute;left:13px;top:497px" width="10" height="10"><circle cx="5" cy="5" r="4" fill="none" stroke="#333"/><path d="M5 2.5V7.5M2.5 5H7.5" stroke="#333"/></svg><div style="position:absolute;left:25px;top:498.2px;white-space:nowrap;font-size:8.2px;line-height:10px;letter-spacing:-0.35px;font-weight:bold;color:#222;">Баланс: 10 000.00 USD&nbsp; Средства: 10 413.70&nbsp; Маржа: 10 290.54&nbsp; Свободная маржа: 123.16&nbsp; Уровень маржи: 101.20 %</div><div style="position:absolute;left:582px;width:300px;top:498.2px;white-space:nowrap;text-align:right;font-size:8.2px;line-height:10px;letter-spacing:-0.3px;font-weight:bold;color:#222;">413.70</div><div style="position:absolute;left:11px;top:526px;width:888px;height:1px;background:#9a9a9a;"></div><div style="position:absolute;left:12px;top:526px;width:46px;height:13px;background:#fff;border:1px solid #444;border-top:none;"></div><div style="position:absolute;left:19px;top:528.4px;white-space:nowrap;font-size:8.2px;line-height:10px;letter-spacing:-0.2px;color:#222;">Торговля</div><div style="position:absolute;left:65.3px;top:528.4px;white-space:nowrap;font-size:8.2px;line-height:10px;letter-spacing:-0.2px;color:#8a8a8a;">Активы</div><div style="position:absolute;left:104.2px;top:528.4px;white-space:nowrap;font-size:8.2px;line-height:10px;letter-spacing:-0.2px;color:#8a8a8a;">История</div><div style="position:absolute;left:147.2px;top:528.4px;white-space:nowrap;font-size:8.2px;line-height:10px;letter-spacing:-0.2px;color:#8a8a8a;">Новости</div><div style="position:absolute;left:190.3px;top:528.4px;white-space:nowrap;font-size:8.2px;line-height:10px;letter-spacing:-0.2px;color:#8a8a8a;">Почта</div><div style="position:absolute;left:229.2px;top:528.4px;white-space:nowrap;font-size:8.2px;line-height:10px;letter-spacing:-0.2px;color:#8a8a8a;">Календарь</div><div style="position:absolute;left:280px;top:528.4px;white-space:nowrap;font-size:8.2px;line-height:10px;letter-spacing:-0.2px;color:#8a8a8a;">Компания</div><div style="position:absolute;left:328.7px;top:528.4px;white-space:nowrap;font-size:8.2px;line-height:10px;letter-spacing:-0.2px;color:#8a8a8a;">Маркет</div><div style="position:absolute;left:376.6px;top:528.4px;white-space:nowrap;font-size:8.2px;line-height:10px;letter-spacing:-0.2px;color:#8a8a8a;">Алерты</div><div style="position:absolute;left:416.2px;top:528.4px;white-space:nowrap;font-size:8.2px;line-height:10px;letter-spacing:-0.2px;color:#8a8a8a;">Сигналы</div><div style="position:absolute;left:460.8px;top:528.4px;white-space:nowrap;font-size:8.2px;line-height:10px;letter-spacing:-0.2px;color:#8a8a8a;">Статьи</div><div style="position:absolute;left:508.7px;top:528.4px;white-space:nowrap;font-size:8.2px;line-height:10px;letter-spacing:-0.2px;color:#8a8a8a;">Библиотека</div><div style="position:absolute;left:578px;top:528.4px;white-space:nowrap;font-size:8.2px;line-height:10px;letter-spacing:-0.2px;color:#8a8a8a;">VPS</div><div style="position:absolute;left:603.4px;top:528.4px;white-space:nowrap;font-size:8.2px;line-height:10px;letter-spacing:-0.2px;color:#8a8a8a;">Эксперты</div><div style="position:absolute;left:650px;top:528.4px;white-space:nowrap;font-size:8.2px;line-height:10px;letter-spacing:-0.2px;color:#8a8a8a;">Журнал</div><div style="position:absolute;left:97.8px;top:529px;width:1px;height:8px;background:#a8a8a8;"></div><div style="position:absolute;left:141px;top:529px;width:1px;height:8px;background:#a8a8a8;"></div><div style="position:absolute;left:184.7px;top:529px;width:1px;height:8px;background:#a8a8a8;"></div><div style="position:absolute;left:223.6px;top:529px;width:1px;height:8px;background:#a8a8a8;"></div><div style="position:absolute;left:273.6px;top:529px;width:1px;height:8px;background:#a8a8a8;"></div><div style="position:absolute;left:322.8px;top:529px;width:1px;height:8px;background:#a8a8a8;"></div><div style="position:absolute;left:370.6px;top:529px;width:1px;height:8px;background:#a8a8a8;"></div><div style="position:absolute;left:410.7px;top:529px;width:1px;height:8px;background:#a8a8a8;"></div><div style="position:absolute;left:454px;top:529px;width:1px;height:8px;background:#a8a8a8;"></div><div style="position:absolute;left:503.2px;top:529px;width:1px;height:8px;background:#a8a8a8;"></div><div style="position:absolute;left:571px;top:529px;width:1px;height:8px;background:#a8a8a8;"></div><div style="position:absolute;left:597.5px;top:529px;width:1px;height:8px;background:#a8a8a8;"></div><div style="position:absolute;left:644px;top:529px;width:1px;height:8px;background:#a8a8a8;"></div><div style="position:absolute;left:214px;top:533px;white-space:nowrap;font-size:6px;line-height:7px;font-weight:bold;color:#e02020;">7</div><div style="position:absolute;left:355.5px;top:533px;white-space:nowrap;font-size:6px;line-height:7px;font-weight:bold;color:#e02020;">26</div><div style="position:absolute;left:486px;top:533px;white-space:nowrap;font-size:6px;line-height:7px;font-weight:bold;color:#e02020;">678</div><div style="position:absolute;left:551px;top:533px;white-space:nowrap;font-size:6px;line-height:7px;font-weight:bold;color:#e02020;">7202</div><div style="position:absolute;left:825px;top:528.4px;white-space:nowrap;font-size:8.2px;line-height:10px;letter-spacing:-0.2px;color:#222;">Тестер стратегий</div><div style="position:absolute;left:1px;top:540px;width:898px;height:17px;background:#f0f0f0;border-top:1px solid #dcdcdc;"></div><div style="position:absolute;left:3.5px;top:546.9px;white-space:nowrap;font-size:8.2px;line-height:10px;letter-spacing:-0.2px;color:#222;">Для вызова справки нажмите F1</div><div style="position:absolute;left:452px;top:541px;width:1px;height:16px;background:#d0d0d0;"></div><div style="position:absolute;left:457px;top:546.9px;white-space:nowrap;font-size:8.2px;line-height:10px;letter-spacing:-0.2px;color:#222;">Default</div><div style="position:absolute;left:821px;top:541px;width:1px;height:16px;background:#d0d0d0;"></div><svg style="position:absolute;left:825px;top:547px" width="11" height="8"><path d="M0 8L11 0V8Z" fill="#22a822"/></svg><div style="position:absolute;left:838px;top:546.9px;white-space:nowrap;font-size:8.2px;line-height:10px;letter-spacing:-0.2px;color:#222;">48.70 ms</div><div style="position:absolute;left:896px;top:554px;width:1px;height:1px;background:#999;"></div><div style="position:absolute;left:893px;top:554px;width:1px;height:1px;background:#999;"></div><div style="position:absolute;left:896px;top:551px;width:1px;height:1px;background:#999;"></div></body></html>
